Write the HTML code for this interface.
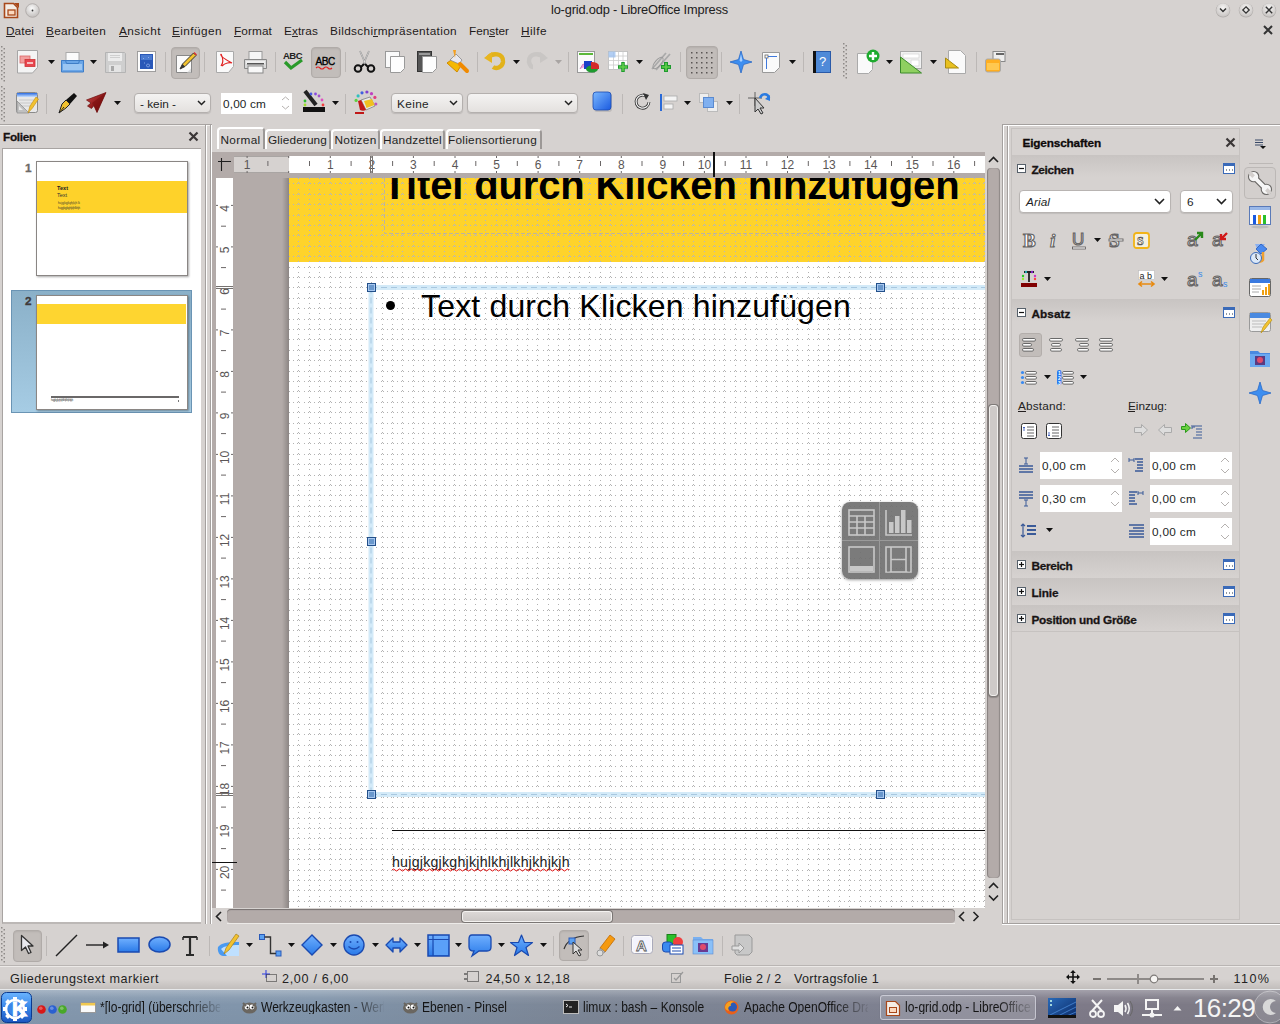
<!DOCTYPE html><html><head><meta charset="utf-8"><style>
html,body{margin:0;padding:0;width:1280px;height:1024px;overflow:hidden;background:#d6d2d0;}
body{position:relative;font-family:"Liberation Sans",sans-serif;}
.a{position:absolute;box-sizing:border-box;}
.t{position:absolute;white-space:nowrap;font-family:"Liberation Sans",sans-serif;}
svg.a{overflow:visible;}
</style></head><body>
<svg class="a" style="left:3px;top:2px;" width="16" height="17" viewBox="0 0 16 17"><path d="M1.5 1.5h9l4 4v10h-13z" fill="#f4ede6" stroke="#a8481a" stroke-width="1.6"/><path d="M11 1l5 0 0 5z" fill="#a8481a"/><rect x="5" y="8" width="7" height="5" fill="#fbd9bf" stroke="#a8481a" stroke-width="1.3"/></svg>
<svg class="a" style="left:25px;top:3px;" width="15" height="15" viewBox="0 0 15 15"><defs><radialGradient id="gc" cx="0.45" cy="0.35" r="0.7"><stop offset="0" stop-color="#fafafa"/><stop offset="1" stop-color="#bdb9b7"/></radialGradient></defs><circle cx="7.5" cy="7.5" r="6.8" fill="url(#gc)" stroke="#a9a5a3" stroke-width="0.8"/><circle cx="7.5" cy="7.5" r="0.9" fill="#333"/></svg>
<div class="t" style="left:551px;top:3.66px;font-size:12.8px;line-height:12.8px;color:#202020;letter-spacing:-0.170px;">lo-grid.odp - LibreOffice Impress</div>
<svg class="a" style="left:1215px;top:2px;" width="16" height="16" viewBox="0 0 16 16"><defs><radialGradient id="gw1223" cx="0.5" cy="0.35" r="0.7"><stop offset="0" stop-color="#f6f5f4"/><stop offset="1" stop-color="#c4c0be"/></radialGradient></defs><circle cx="8" cy="8.4" r="7.2" fill="#8e8a88" opacity="0.55"/><circle cx="8" cy="8" r="6.8" fill="url(#gw1223)"/><path d="M5 6.5l3 3 3-3" fill="none" stroke="#333" stroke-width="1.5"/></svg>
<svg class="a" style="left:1238px;top:2px;" width="16" height="16" viewBox="0 0 16 16"><defs><radialGradient id="gw1246" cx="0.5" cy="0.35" r="0.7"><stop offset="0" stop-color="#f6f5f4"/><stop offset="1" stop-color="#c4c0be"/></radialGradient></defs><circle cx="8" cy="8.4" r="7.2" fill="#8e8a88" opacity="0.55"/><circle cx="8" cy="8" r="6.8" fill="url(#gw1246)"/><path d="M8 4.8l3.2 3.2-3.2 3.2-3.2-3.2z" fill="none" stroke="#333" stroke-width="1.3"/></svg>
<svg class="a" style="left:1261px;top:2px;" width="16" height="16" viewBox="0 0 16 16"><defs><radialGradient id="gw1269" cx="0.5" cy="0.35" r="0.7"><stop offset="0" stop-color="#f6f5f4"/><stop offset="1" stop-color="#c4c0be"/></radialGradient></defs><circle cx="8" cy="8.4" r="7.2" fill="#8e8a88" opacity="0.55"/><circle cx="8" cy="8" r="6.8" fill="url(#gw1269)"/><path d="M4.8 4.8l6.4 6.4M11.2 4.8l-6.4 6.4" fill="none" stroke="#333" stroke-width="1.4"/></svg>
<div class="t" style="left:6px;top:26.01px;font-size:11.8px;line-height:11.8px;color:#1e1a1a;letter-spacing:0.091px;">Datei</div>
<div class="a" style="left:6.0px;top:36px;width:8.661633199464525px;height:1px;background:#2a2626;"></div>
<div class="t" style="left:46px;top:26.01px;font-size:11.8px;line-height:11.8px;color:#1e1a1a;letter-spacing:0.292px;">Bearbeiten</div>
<div class="a" style="left:46.0px;top:36px;width:8.274151031167623px;height:1px;background:#2a2626;"></div>
<div class="t" style="left:119px;top:26.01px;font-size:11.8px;line-height:11.8px;color:#1e1a1a;letter-spacing:0.472px;">Ansicht</div>
<div class="a" style="left:119.0px;top:36px;width:8.542807044293665px;height:1px;background:#2a2626;"></div>
<div class="t" style="left:172px;top:26.01px;font-size:11.8px;line-height:11.8px;color:#1e1a1a;letter-spacing:0.427px;">Einfügen</div>
<div class="a" style="left:172.0px;top:36px;width:8.448117539026631px;height:1px;background:#2a2626;"></div>
<div class="t" style="left:234px;top:26.01px;font-size:11.8px;line-height:11.8px;color:#1e1a1a;letter-spacing:0.105px;">Format</div>
<div class="a" style="left:234.0px;top:36px;width:7.32972844963688px;height:1px;background:#2a2626;"></div>
<div class="t" style="left:284px;top:26.01px;font-size:11.8px;line-height:11.8px;color:#1e1a1a;letter-spacing:0.093px;">Extras</div>
<div class="a" style="left:292.00211714890617px;top:36px;width:5.998588567395907px;height:1px;background:#2a2626;"></div>
<div class="t" style="left:330px;top:26.01px;font-size:11.8px;line-height:11.8px;color:#1e1a1a;letter-spacing:0.347px;">Bildschirmpräsentation</div>
<div class="a" style="left:373.2603215402296px;top:36px;width:5px;height:1px;background:#2a2626;"></div>
<div class="t" style="left:469px;top:26.01px;font-size:11.8px;line-height:11.8px;color:#1e1a1a;">Fenster</div>
<div class="a" style="left:489.33110873492865px;top:36px;width:5.899487482024999px;height:1px;background:#2a2626;"></div>
<div class="t" style="left:521px;top:26.01px;font-size:11.8px;line-height:11.8px;color:#1e1a1a;letter-spacing:0.479px;">Hilfe</div>
<div class="a" style="left:521.0px;top:36px;width:9.385865150284323px;height:1px;background:#2a2626;"></div>
<svg class="a" style="left:1262px;top:24px;" width="12" height="12" viewBox="0 0 12 12"><path d="M2 2l8 8M10 2l-8 8" stroke="#333" stroke-width="2"/></svg>
<svg class="a" style="left:1px;top:46px;" width="5" height="34" viewBox="0 0 5 34"><rect x="0" y="0" width="1.5" height="1.5" fill="#8e8a88"/><rect x="2.5" y="2" width="1.5" height="1.5" fill="#8e8a88"/><rect x="0" y="4" width="1.5" height="1.5" fill="#8e8a88"/><rect x="2.5" y="6" width="1.5" height="1.5" fill="#8e8a88"/><rect x="0" y="8" width="1.5" height="1.5" fill="#8e8a88"/><rect x="2.5" y="10" width="1.5" height="1.5" fill="#8e8a88"/><rect x="0" y="12" width="1.5" height="1.5" fill="#8e8a88"/><rect x="2.5" y="14" width="1.5" height="1.5" fill="#8e8a88"/><rect x="0" y="16" width="1.5" height="1.5" fill="#8e8a88"/><rect x="2.5" y="18" width="1.5" height="1.5" fill="#8e8a88"/><rect x="0" y="20" width="1.5" height="1.5" fill="#8e8a88"/><rect x="2.5" y="22" width="1.5" height="1.5" fill="#8e8a88"/><rect x="0" y="24" width="1.5" height="1.5" fill="#8e8a88"/><rect x="2.5" y="26" width="1.5" height="1.5" fill="#8e8a88"/><rect x="0" y="28" width="1.5" height="1.5" fill="#8e8a88"/><rect x="2.5" y="30" width="1.5" height="1.5" fill="#8e8a88"/><rect x="0" y="32" width="1.5" height="1.5" fill="#8e8a88"/><rect x="2.5" y="34" width="1.5" height="1.5" fill="#8e8a88"/></svg>
<svg class="a" style="left:1px;top:86px;" width="5" height="34" viewBox="0 0 5 34"><rect x="0" y="0" width="1.5" height="1.5" fill="#8e8a88"/><rect x="2.5" y="2" width="1.5" height="1.5" fill="#8e8a88"/><rect x="0" y="4" width="1.5" height="1.5" fill="#8e8a88"/><rect x="2.5" y="6" width="1.5" height="1.5" fill="#8e8a88"/><rect x="0" y="8" width="1.5" height="1.5" fill="#8e8a88"/><rect x="2.5" y="10" width="1.5" height="1.5" fill="#8e8a88"/><rect x="0" y="12" width="1.5" height="1.5" fill="#8e8a88"/><rect x="2.5" y="14" width="1.5" height="1.5" fill="#8e8a88"/><rect x="0" y="16" width="1.5" height="1.5" fill="#8e8a88"/><rect x="2.5" y="18" width="1.5" height="1.5" fill="#8e8a88"/><rect x="0" y="20" width="1.5" height="1.5" fill="#8e8a88"/><rect x="2.5" y="22" width="1.5" height="1.5" fill="#8e8a88"/><rect x="0" y="24" width="1.5" height="1.5" fill="#8e8a88"/><rect x="2.5" y="26" width="1.5" height="1.5" fill="#8e8a88"/><rect x="0" y="28" width="1.5" height="1.5" fill="#8e8a88"/><rect x="2.5" y="30" width="1.5" height="1.5" fill="#8e8a88"/><rect x="0" y="32" width="1.5" height="1.5" fill="#8e8a88"/><rect x="2.5" y="34" width="1.5" height="1.5" fill="#8e8a88"/></svg>
<svg class="a" style="left:843px;top:43px;" width="5" height="36" viewBox="0 0 5 36"><rect x="0" y="0" width="1.5" height="1.5" fill="#8e8a88"/><rect x="2.5" y="2" width="1.5" height="1.5" fill="#8e8a88"/><rect x="0" y="4" width="1.5" height="1.5" fill="#8e8a88"/><rect x="2.5" y="6" width="1.5" height="1.5" fill="#8e8a88"/><rect x="0" y="8" width="1.5" height="1.5" fill="#8e8a88"/><rect x="2.5" y="10" width="1.5" height="1.5" fill="#8e8a88"/><rect x="0" y="12" width="1.5" height="1.5" fill="#8e8a88"/><rect x="2.5" y="14" width="1.5" height="1.5" fill="#8e8a88"/><rect x="0" y="16" width="1.5" height="1.5" fill="#8e8a88"/><rect x="2.5" y="18" width="1.5" height="1.5" fill="#8e8a88"/><rect x="0" y="20" width="1.5" height="1.5" fill="#8e8a88"/><rect x="2.5" y="22" width="1.5" height="1.5" fill="#8e8a88"/><rect x="0" y="24" width="1.5" height="1.5" fill="#8e8a88"/><rect x="2.5" y="26" width="1.5" height="1.5" fill="#8e8a88"/><rect x="0" y="28" width="1.5" height="1.5" fill="#8e8a88"/><rect x="2.5" y="30" width="1.5" height="1.5" fill="#8e8a88"/><rect x="0" y="32" width="1.5" height="1.5" fill="#8e8a88"/><rect x="2.5" y="34" width="1.5" height="1.5" fill="#8e8a88"/></svg>
<svg class="a" style="left:17px;top:50px;" width="22" height="24" viewBox="0 0 22 24"><path d="M0.5 0.5h20v17l-5 5.5h-15z" fill="#f4f4f4" stroke="#a6a6a6"/><rect x="3" y="6" width="10" height="7" fill="#f2a0a0" stroke="#d66" stroke-width="0.8"/><rect x="8" y="9.5" width="10" height="7" fill="#e8454f" stroke="#c33" stroke-width="0.8"/><rect x="10" y="12" width="6" height="2" fill="#f7c0c0"/></svg>
<svg class="a" style="left:48px;top:60px;" width="7" height="4" viewBox="0 0 7 4"><path d="M0 0h7l-3.5 4z" fill="#111"/></svg>
<svg class="a" style="left:61px;top:52px;" width="23" height="21" viewBox="0 0 23 21"><rect x="5" y="0.5" width="13" height="11" fill="#fbfbfb" stroke="#aaa"/><path d="M0.5 8.5h22v11.5h-22z" fill="#6aa6e8" stroke="#3f7dc6"/><path d="M2 12h19v6h-19z" fill="#9cc6f2"/><path d="M0.5 8.5h4l1 3h12l1-3h4" fill="none" stroke="#3f7dc6"/></svg>
<svg class="a" style="left:90px;top:60px;" width="7" height="4" viewBox="0 0 7 4"><path d="M0 0h7l-3.5 4z" fill="#111"/></svg>
<svg class="a" style="left:105px;top:52px;" width="21" height="21" viewBox="0 0 21 21"><path d="M0.5 0.5h19l1 1v19h-20z" fill="#cfcfcf" stroke="#b4b4b4"/><rect x="3" y="1" width="14" height="8" fill="#ececec"/><path d="M5 3.5h10M5 5.5h10" stroke="#c8c8c8" stroke-width="0.8"/><rect x="4" y="13" width="12" height="7" fill="#e4e4e4"/><rect x="6" y="14" width="3" height="5" fill="#a8a8a8"/></svg>
<svg class="a" style="left:137px;top:51px;" width="19" height="21" viewBox="0 0 19 21"><rect x="0.5" y="0.5" width="18" height="20" fill="#fdfdfd"/><rect x="0.5" y="0.5" width="18" height="20" fill="none" stroke="#555" stroke-width="1" stroke-dasharray="1 1"/><rect x="3" y="3" width="13" height="15" fill="#2a58b8"/><rect x="4" y="4" width="11" height="5" fill="#4a7ad0"/><path d="M6 7l1 1M11 6l1 1M7 12h1M11 13a1.5 1.5 0 1 0 0.1 0" stroke="#9ab8f0" stroke-width="0.8" fill="none"/></svg>
<div class="a" style="left:165px;top:52px;width:1px;height:20px;background:#bcb8b6;"></div>
<div class="a" style="left:171px;top:47px;width:29px;height:32px;background:#c2bdba;border:1px solid #b0aba8;border-radius:4px;box-shadow:inset 0 1px 2px rgba(0,0,0,0.08);"></div>
<svg class="a" style="left:175px;top:52px;" width="22" height="22" viewBox="0 0 22 22"><path d="M1.5 3.5h15v17h-15z" fill="#fbfbfb" stroke="#888"/><path d="M16 20.5l-4 0 4-4z" fill="#ddd"/><path d="M5 17l2.5-5 11-11 2.5 2.5-11 11z" fill="#f2c230" stroke="#333" stroke-width="1"/><path d="M18.5 1l2.5 2.5 1-1-2.5-2.5z" fill="#d33"/><path d="M5 17l2.5-5 2.5 2.5z" fill="#333"/></svg>
<div class="a" style="left:204px;top:52px;width:1px;height:20px;background:#bcb8b6;"></div>
<svg class="a" style="left:216px;top:51px;" width="19" height="22" viewBox="0 0 19 22"><path d="M0.5 0.5h17v15l-5 6h-12z" fill="#fafafa" stroke="#aaa"/><path d="M5 3c2 4 3 8 0 12M6 15c3-3 8-4 10-3M5 3c-1 2 5 6 11 9" fill="none" stroke="#e02020" stroke-width="1.2"/></svg>
<svg class="a" style="left:244px;top:51px;" width="23" height="23" viewBox="0 0 23 23"><rect x="5" y="0.5" width="13" height="8" fill="#f6f6f6" stroke="#999"/><path d="M0.5 8.5h22v9h-22z" fill="#d9d9d9" stroke="#888"/><rect x="2" y="10" width="19" height="3" fill="#efefef"/><rect x="4" y="15" width="15" height="7" fill="#f8f8f8" stroke="#888"/><rect x="3" y="12" width="17" height="1.5" fill="#555"/></svg>
<div class="a" style="left:275px;top:52px;width:1px;height:20px;background:#bcb8b6;"></div>
<svg class="a" style="left:283px;top:50px;" width="21" height="23" viewBox="0 0 21 23"><text x="0" y="9" font-family="Liberation Sans" font-size="9.5" font-weight="bold" fill="#222" letter-spacing="-0.5">ABC</text><path d="M2 12l6 6 11-8" fill="none" stroke="#2a9a2a" stroke-width="3.2"/></svg>
<div class="a" style="left:311px;top:47px;width:30px;height:31px;background:#c2bdba;border:1px solid #b0aba8;border-radius:4px;box-shadow:inset 0 1px 2px rgba(0,0,0,0.08);"></div>
<svg class="a" style="left:315px;top:55px;" width="22" height="16" viewBox="0 0 22 16"><text x="0.5" y="10" font-family="Liberation Sans" font-size="10" fill="#000" stroke="#000" stroke-width="0.35" letter-spacing="-0.4">ABC</text><path d="M1 13q2-2 4 0t4 0 4 0 4 0" fill="none" stroke="#e02020" stroke-width="1.1"/></svg>
<div class="a" style="left:345px;top:52px;width:1px;height:20px;background:#bcb8b6;"></div>
<svg class="a" style="left:353px;top:51px;" width="23" height="22" viewBox="0 0 23 22"><path d="M7 0l6 14M16 0l-6 14" stroke="#888" stroke-width="1.6" fill="none"/><path d="M7 0l6 14M16 0l-6 14" stroke="#eee" stroke-width="0.6" fill="none"/><circle cx="5" cy="17.5" r="3.3" fill="none" stroke="#111" stroke-width="2"/><circle cx="18" cy="17.5" r="3.3" fill="none" stroke="#111" stroke-width="2"/><path d="M8 16l3-3M15 16l-3-3" stroke="#111" stroke-width="2"/></svg>
<svg class="a" style="left:385px;top:51px;" width="20" height="22" viewBox="0 0 20 22"><rect x="0.5" y="0.5" width="14" height="16" fill="#fafafa" stroke="#999"/><path d="M5.5 5.5h14v12l-4 4h-10z" fill="#fdfdfd" stroke="#999"/></svg>
<svg class="a" style="left:417px;top:51px;" width="20" height="22" viewBox="0 0 20 22"><rect x="0.5" y="0.5" width="14" height="20" fill="#555" stroke="#333"/><rect x="2" y="2" width="11" height="2" fill="#999"/><path d="M5.5 5.5h14v12l-4 4h-10z" fill="#fdfdfd" stroke="#999"/></svg>
<svg class="a" style="left:446px;top:50px;" width="23" height="24" viewBox="0 0 23 24"><path d="M1 13l7-5 8 6-5 8z" fill="#f5b800" stroke="#d18a00"/><path d="M4 10l6-6 6 6-3 4z" fill="#e8e8f0" stroke="#888" stroke-width="0.8"/><path d="M7 0h3l-1 8z" fill="#f5a020"/><path d="M14 14l7 7" stroke="#f08a00" stroke-width="4" stroke-linecap="round"/></svg>
<div class="a" style="left:477px;top:52px;width:1px;height:20px;background:#bcb8b6;"></div>
<svg class="a" style="left:484px;top:51px;" width="22" height="19" viewBox="0 0 22 19"><path d="M4 7 C8 1, 20 2, 19 11 C18 17, 12 18, 9 16" fill="none" stroke="#e2b21a" stroke-width="4.5"/><path d="M0 7l8-6 0 11z" fill="#e8b520"/></svg>
<svg class="a" style="left:513px;top:60px;" width="7" height="4" viewBox="0 0 7 4"><path d="M0 0h7l-3.5 4z" fill="#111"/></svg>
<svg class="a" style="left:526px;top:51px;" width="22" height="18" viewBox="0 0 22 18"><path d="M18 7 C14 1, 2 2, 3 11 C4 15, 6 16, 7 16" fill="none" stroke="#c9c6c4" stroke-width="4.5"/><path d="M22 7l-8-6 0 11z" fill="#c9c6c4"/></svg>
<svg class="a" style="left:555px;top:60px;" width="7" height="4" viewBox="0 0 7 4"><path d="M0 0h7l-3.5 4z" fill="#a9a5a3"/></svg>
<div class="a" style="left:568px;top:52px;width:1px;height:20px;background:#bcb8b6;"></div>
<svg class="a" style="left:577px;top:51px;" width="23" height="22" viewBox="0 0 23 22"><rect x="0.5" y="0.5" width="17" height="21" fill="#fafafa" stroke="#999"/><rect x="2" y="2" width="14" height="2" fill="#5cb83a"/><path d="M3 18l3-5 4 2" fill="#f2a0e0" stroke="#d080c0"/><rect x="7" y="10" width="8" height="8" fill="#1b3fc8"/><ellipse cx="15" cy="18" rx="6" ry="3.5" fill="#1e9a2e"/><path d="M14 11a7 4 0 0 1 8 4v3h-8z" fill="#d42a2a"/></svg>
<svg class="a" style="left:608px;top:51px;" width="22" height="22" viewBox="0 0 22 22"><g fill="#fff" stroke="#bbb" stroke-width="0.8"><rect x="0.5" y="0.5" width="19" height="18"/></g><path d="M0.5 5h19M0.5 9.5h19M0.5 14h19M5.5 0.5v18M10.5 0.5v18M15 0.5v18" stroke="#ccc" stroke-width="0.8"/><rect x="0.5" y="0.5" width="7" height="6" fill="#9fc2f0" opacity="0.8"/><path d="M15 11v10M10 16h10" stroke="#1e9a2e" stroke-width="3.5"/><path d="M15 12v8M11 16h8" stroke="#62d04a" stroke-width="1.5"/></svg>
<svg class="a" style="left:636px;top:60px;" width="7" height="4" viewBox="0 0 7 4"><path d="M0 0h7l-3.5 4z" fill="#111"/></svg>
<svg class="a" style="left:650px;top:50px;" width="23" height="23" viewBox="0 0 23 23"><path d="M2 19l14-16M6 20l14-16" stroke="#aaa" stroke-width="1.8" fill="none"/><ellipse cx="8" cy="13" rx="3" ry="7" transform="rotate(40 8 13)" fill="none" stroke="#999"/><path d="M16 12v10M11 17h10" stroke="#1e9a2e" stroke-width="4"/><path d="M16 13v8M12 17h8" stroke="#62d04a" stroke-width="1.6"/></svg>
<div class="a" style="left:680px;top:52px;width:1px;height:20px;background:#bcb8b6;"></div>
<div class="a" style="left:686px;top:46px;width:32px;height:33px;background:#c2bdba;border:1px solid #b0aba8;border-radius:4px;box-shadow:inset 0 1px 2px rgba(0,0,0,0.08);"></div>
<svg class="a" style="left:691px;top:52px;" width="23" height="23" viewBox="0 0 23 23"><rect x="0" y="0" width="1.5" height="1.5" fill="#5a5654"/><rect x="0" y="5" width="1.5" height="1.5" fill="#5a5654"/><rect x="0" y="10" width="1.5" height="1.5" fill="#5a5654"/><rect x="0" y="15" width="1.5" height="1.5" fill="#5a5654"/><rect x="0" y="20" width="1.5" height="1.5" fill="#5a5654"/><rect x="5" y="0" width="1.5" height="1.5" fill="#5a5654"/><rect x="5" y="5" width="1.5" height="1.5" fill="#5a5654"/><rect x="5" y="10" width="1.5" height="1.5" fill="#5a5654"/><rect x="5" y="15" width="1.5" height="1.5" fill="#5a5654"/><rect x="5" y="20" width="1.5" height="1.5" fill="#5a5654"/><rect x="10" y="0" width="1.5" height="1.5" fill="#5a5654"/><rect x="10" y="5" width="1.5" height="1.5" fill="#5a5654"/><rect x="10" y="10" width="1.5" height="1.5" fill="#5a5654"/><rect x="10" y="15" width="1.5" height="1.5" fill="#5a5654"/><rect x="10" y="20" width="1.5" height="1.5" fill="#5a5654"/><rect x="15" y="0" width="1.5" height="1.5" fill="#5a5654"/><rect x="15" y="5" width="1.5" height="1.5" fill="#5a5654"/><rect x="15" y="10" width="1.5" height="1.5" fill="#5a5654"/><rect x="15" y="15" width="1.5" height="1.5" fill="#5a5654"/><rect x="15" y="20" width="1.5" height="1.5" fill="#5a5654"/><rect x="20" y="0" width="1.5" height="1.5" fill="#5a5654"/><rect x="20" y="5" width="1.5" height="1.5" fill="#5a5654"/><rect x="20" y="10" width="1.5" height="1.5" fill="#5a5654"/><rect x="20" y="15" width="1.5" height="1.5" fill="#5a5654"/><rect x="20" y="20" width="1.5" height="1.5" fill="#5a5654"/></svg>
<div class="a" style="left:721px;top:52px;width:1px;height:20px;background:#bcb8b6;"></div>
<svg class="a" style="left:730px;top:51px;" width="22" height="22" viewBox="0 0 22 22"><path d="M11 0 L13.5 8.5 L22 11 L13.5 13.5 L11 22 L8.5 13.5 L0 11 L8.5 8.5 Z" fill="#3d8ef0" stroke="#2a6ac8" stroke-width="0.8"/><path d="M11 3 L12.5 9.5 L11 11 L9.5 9.5Z" fill="#a8d0ff"/></svg>
<svg class="a" style="left:762px;top:52px;" width="19" height="21" viewBox="0 0 19 21"><path d="M0.5 0.5h17v15l-5 5h-12z" fill="#fafafa" stroke="#999"/><rect x="3" y="3" width="3" height="3" fill="none" stroke="#666" stroke-width="0.8"/><path d="M6 4.5h9M4.5 6v11" stroke="#2a6ad8" stroke-width="0.9"/></svg>
<svg class="a" style="left:789px;top:60px;" width="7" height="4" viewBox="0 0 7 4"><path d="M0 0h7l-3.5 4z" fill="#111"/></svg>
<div class="a" style="left:803px;top:52px;width:1px;height:20px;background:#bcb8b6;"></div>
<svg class="a" style="left:813px;top:51px;" width="18" height="22" viewBox="0 0 18 22"><rect x="0.5" y="0.5" width="17" height="21" fill="#4f8ad8" stroke="#2a5aa8"/><rect x="0" y="0" width="3" height="22" fill="#111"/><text x="6" y="15" font-family="Liberation Sans" font-size="13" fill="#fff">?</text></svg>
<svg class="a" style="left:857px;top:49px;" width="23" height="25" viewBox="0 0 23 25"><path d="M0.5 4.5h15v16l-4 4h-11z" fill="#fafafa" stroke="#aaa"/><circle cx="16" cy="7" r="6.5" fill="#1eaa2e"/><path d="M16 3v8M12 7h8" stroke="#fff" stroke-width="2.4"/></svg>
<svg class="a" style="left:886px;top:60px;" width="7" height="4" viewBox="0 0 7 4"><path d="M0 0h7l-3.5 4z" fill="#111"/></svg>
<svg class="a" style="left:900px;top:51px;" width="23" height="22" viewBox="0 0 23 22"><rect x="0.5" y="0.5" width="21" height="17" fill="#f2f2f2" stroke="#aaa"/><rect x="3" y="3" width="16" height="4" fill="#fff" stroke="#ccc" stroke-width="0.6"/><rect x="11" y="9" width="8" height="6" fill="#fff" stroke="#ccc" stroke-width="0.6"/><path d="M0.5 6l21 16h-21z" fill="#8fd060" stroke="#3a8a2a"/></svg>
<svg class="a" style="left:930px;top:60px;" width="7" height="4" viewBox="0 0 7 4"><path d="M0 0h7l-3.5 4z" fill="#111"/></svg>
<svg class="a" style="left:945px;top:50px;" width="21" height="24" viewBox="0 0 21 24"><path d="M3.5 0.5h12l5 5v18h-17z" fill="#fafafa" stroke="#aaa"/><path d="M0.5 8l13 10h-13z" fill="#e8c020" stroke="#a88a10"/></svg>
<div class="a" style="left:976px;top:52px;width:1px;height:20px;background:#bcb8b6;"></div>
<svg class="a" style="left:985px;top:51px;" width="21" height="22" viewBox="0 0 21 22"><rect x="8" y="0.5" width="12" height="10" fill="#eee" stroke="#888"/><rect x="11" y="2" width="8" height="2" fill="#666"/><rect x="0.5" y="8" width="15" height="13" rx="2" fill="#ffae20" stroke="#aaa"/><rect x="2" y="12" width="12" height="7" fill="#ffc850"/></svg>
<svg class="a" style="left:16px;top:92px;" width="23" height="23" viewBox="0 0 23 23"><defs><linearGradient id="edb" x1="0" y1="0" x2="0" y2="1"><stop offset="0" stop-color="#2a6ae0"/><stop offset="1" stop-color="#c8e0ff"/></linearGradient></defs><rect x="0.5" y="0.5" width="21" height="20" rx="2" fill="#e8e8e8" stroke="#8a8a8a"/><rect x="1" y="1" width="20" height="4" fill="url(#edb)"/><path d="M3 8h15M3 11h15M3 14h12" stroke="#c8c8c8" stroke-width="1.2"/><path d="M1 9l12 12h-12z" fill="#c0c0c0" stroke="#8a8a8a" stroke-width="0.7"/><path d="M3 14l4 4h-4z" fill="#e8e8e8"/><path d="M12 21l2-7 6-9 2.5 2-6 9z" fill="#f2c230" stroke="#c08a10" stroke-width="0.6"/></svg>
<div class="a" style="left:46px;top:94px;width:1px;height:20px;background:#bcb8b6;"></div>
<svg class="a" style="left:56px;top:92px;" width="21" height="22" viewBox="0 0 21 22"><path d="M10 8 L18 1 L21 4 L14 12 z" fill="#111"/><path d="M3 21 L6 12 L10 8 L14 12 L10 16 z" fill="#f0c030" stroke="#222" stroke-width="1"/><path d="M3 21l5-6" stroke="#222"/></svg>
<svg class="a" style="left:85px;top:92px;" width="22" height="22" viewBox="0 0 22 22"><defs><linearGradient id="rar" x1="0" y1="0" x2="1" y2="1"><stop offset="0" stop-color="#c84848"/><stop offset="0.6" stop-color="#8a1414"/><stop offset="1" stop-color="#5a0a0a"/></linearGradient></defs><path d="M21 0.5 L1.5 8 L6 11 L2.5 14 L6.5 16.5 L9 13.5 L12 20.5 Z" fill="url(#rar)" stroke="#6a0c0c" stroke-width="0.7" stroke-linejoin="round"/><path d="M21 0.5 L7 11 L12 20.5Z" fill="#7a1010" opacity="0.6"/></svg>
<svg class="a" style="left:114px;top:101px;" width="7" height="4" viewBox="0 0 7 4"><path d="M0 0h7l-3.5 4z" fill="#111"/></svg>
<div class="a" style="left:134px;top:93px;width:77px;height:20px;background:linear-gradient(#f4f3f2,#e4e1df);border:1px solid #b4b0ae;border-radius:4px;box-shadow:0 1px 1px rgba(0,0,0,0.12);"></div>
<svg class="a" style="left:197px;top:100px;" width="9" height="6" viewBox="0 0 9 6"><path d="M1 1l3.5 3.5 3.5-3.5" fill="none" stroke="#222" stroke-width="1.5"/></svg>
<div class="t" style="left:140px;top:98.51px;font-size:11.8px;line-height:11.8px;color:#231f1f;">- kein -</div>
<div class="a" style="left:221px;top:93px;width:71px;height:21px;background:#fff;"></div>
<div class="t" style="left:223px;top:99.01px;font-size:11.8px;line-height:11.8px;color:#231f1f;letter-spacing:0.147px;">0,00 cm</div>
<svg class="a" style="left:281px;top:96px;" width="9" height="14" viewBox="0 0 9 14"><path d="M1 4l3.5-3 3.5 3M1 10l3.5 3 3.5-3" fill="none" stroke="#b5b1af" stroke-width="1"/></svg>
<svg class="a" style="left:303px;top:91px;" width="23" height="23" viewBox="0 0 23 23"><rect x="0" y="16" width="22" height="5" fill="#111"/><path d="M2 0l11 14" stroke="#222" stroke-width="4"/><circle cx="8" cy="3" r="1.4" fill="#4a5ae0"/><circle cx="12.5" cy="3" r="1.4" fill="#8a4ae0"/><circle cx="16" cy="5" r="1.4" fill="#a050d0"/><circle cx="19" cy="9" r="1.4" fill="#e050c0"/><circle cx="20" cy="14" r="1.4" fill="#f04040"/><circle cx="2" cy="10" r="1.4" fill="#30c030"/><circle cx="2" cy="14" r="1.4" fill="#a0e030"/></svg>
<svg class="a" style="left:332px;top:101px;" width="7" height="4" viewBox="0 0 7 4"><path d="M0 0h7l-3.5 4z" fill="#111"/></svg>
<div class="a" style="left:345px;top:94px;width:1px;height:20px;background:#bcb8b6;"></div>
<svg class="a" style="left:354px;top:91px;" width="24" height="24" viewBox="0 0 24 24"><circle cx="2.1" cy="9.4" r="1.6" fill="#60d040"/><circle cx="4.1" cy="4.9" r="1.6" fill="#30c0c0"/><circle cx="8.0" cy="1.8" r="1.6" fill="#4060e0"/><circle cx="12.9" cy="1.0" r="1.6" fill="#8040d0"/><circle cx="17.5" cy="2.7" r="1.6" fill="#c040c0"/><circle cx="20.9" cy="6.4" r="1.6" fill="#e04080"/><circle cx="21.8" cy="13.0" r="1.6" fill="#c050c0"/><path d="M7 9l9-3 5 9-9 4z" fill="#e8e8e8" stroke="#8a8a8a" stroke-width="0.9"/><path d="M10 10l8-2 2.5 6-8 3z" fill="#f0c020"/><path d="M7 9l5 10c-2 1-4 1-6 0l-2-9z" fill="#c01818"/><path d="M1 22h9" stroke="#c01818" stroke-width="2"/></svg>
<div class="a" style="left:391px;top:93px;width:72px;height:20px;background:linear-gradient(#f4f3f2,#e4e1df);border:1px solid #b4b0ae;border-radius:4px;box-shadow:0 1px 1px rgba(0,0,0,0.12);"></div>
<svg class="a" style="left:449px;top:100px;" width="9" height="6" viewBox="0 0 9 6"><path d="M1 1l3.5 3.5 3.5-3.5" fill="none" stroke="#222" stroke-width="1.5"/></svg>
<div class="t" style="left:397px;top:98.51px;font-size:11.8px;line-height:11.8px;color:#231f1f;letter-spacing:0.364px;">Keine</div>
<div class="a" style="left:467px;top:93px;width:111px;height:20px;background:linear-gradient(#f4f3f2,#e4e1df);border:1px solid #b4b0ae;border-radius:4px;box-shadow:0 1px 1px rgba(0,0,0,0.12);"></div>
<svg class="a" style="left:564px;top:100px;" width="9" height="6" viewBox="0 0 9 6"><path d="M1 1l3.5 3.5 3.5-3.5" fill="none" stroke="#222" stroke-width="1.5"/></svg>
<svg class="a" style="left:593px;top:92px;" width="20" height="21" viewBox="0 0 20 21"><defs><linearGradient id="bsq" x1="0" y1="0" x2="1" y2="1"><stop offset="0" stop-color="#7ab8ff"/><stop offset="1" stop-color="#1a5ae0"/></linearGradient></defs><rect x="1" y="1" width="18" height="19" rx="3" fill="#888" opacity="0.3"/><rect x="0" y="0" width="18" height="18" rx="3" fill="url(#bsq)" stroke="#1a4ab0" stroke-width="0.8"/></svg>
<div class="a" style="left:622px;top:94px;width:1px;height:20px;background:#bcb8b6;"></div>
<svg class="a" style="left:634px;top:93px;" width="17" height="17" viewBox="0 0 17 17"><path d="M13 4 A6.5 6.5 0 1 0 15 9" fill="none" stroke="#333" stroke-width="2.8"/><path d="M13 4 A6.5 6.5 0 1 0 15 9" fill="none" stroke="#f6f6f6" stroke-width="1.2"/><path d="M9 0l6 2-3 5z" fill="#333"/></svg>
<svg class="a" style="left:660px;top:94px;" width="18" height="17" viewBox="0 0 18 17"><rect x="0" y="0" width="2" height="17" fill="#2a6ad8"/><rect x="4" y="2" width="13" height="5" fill="#f4f4f4" stroke="#aaa" stroke-width="0.8"/><rect x="4" y="10" width="9" height="5" fill="#f4f4f4" stroke="#aaa" stroke-width="0.8"/></svg>
<svg class="a" style="left:684px;top:101px;" width="7" height="4" viewBox="0 0 7 4"><path d="M0 0h7l-3.5 4z" fill="#111"/></svg>
<svg class="a" style="left:699px;top:93px;" width="20" height="19" viewBox="0 0 20 19"><rect x="0.5" y="0.5" width="9" height="9" fill="#eee" stroke="#bbb"/><rect x="8.5" y="8.5" width="10" height="10" fill="#eee" stroke="#bbb"/><rect x="4.5" y="4.5" width="10" height="10" fill="#80b0f0" stroke="#5a8ad0"/></svg>
<svg class="a" style="left:726px;top:101px;" width="7" height="4" viewBox="0 0 7 4"><path d="M0 0h7l-3.5 4z" fill="#111"/></svg>
<div class="a" style="left:739px;top:94px;width:1px;height:20px;background:#bcb8b6;"></div>
<svg class="a" style="left:748px;top:92px;" width="23" height="23" viewBox="0 0 23 23"><path d="M0 6h14M7 0v14" stroke="#444" stroke-width="0.8"/><path d="M7 6l0 14 3-3 3 5 2-1-3-5 4 0z" fill="#ccc" stroke="#333" stroke-width="1"/><path d="M12 6c2-5 8-5 9 0" fill="none" stroke="#2a7ae0" stroke-width="2.5"/><path d="M22 3l0 6-5-2z" fill="#2a7ae0"/></svg>
<div class="a" style="left:0px;top:124px;width:212px;height:1px;background:#a8a4a2;"></div>
<div class="a" style="left:0px;top:125px;width:212px;height:1px;background:#f2f0ee;"></div>
<div class="t" style="left:3px;top:131.51px;font-size:11.8px;line-height:11.8px;color:#161212;font-weight:bold;letter-spacing:-0.290px;-webkit-text-stroke:0.3px #161212;">Folien</div>
<svg class="a" style="left:188px;top:131px;" width="11" height="11" viewBox="0 0 11 11"><path d="M1.5 1.5l8 8M9.5 1.5l-8 8" stroke="#3a3636" stroke-width="2.2"/></svg>
<div class="a" style="left:2px;top:148px;width:199px;height:776px;border-top:1px solid #a8a4a2;border-left:1px solid #a8a4a2;background:#fff;border-bottom:2px solid #bcb8b6;"></div>
<div class="a" style="left:205px;top:124px;width:1px;height:800px;background:#a4a09e;"></div>
<div class="a" style="left:206px;top:125px;width:1px;height:799px;background:#fff;"></div>
<div class="a" style="left:210px;top:124px;width:1px;height:800px;background:#a4a09e;"></div>
<div class="a" style="left:211px;top:125px;width:1px;height:799px;background:#fff;"></div>
<div class="t" style="left:25px;top:162.51px;font-size:11.8px;line-height:11.8px;color:#6e6a68;font-weight:bold;-webkit-text-stroke:0.3px #6e6a68;">1</div>
<div class="a" style="left:36px;top:161px;width:152px;height:115px;background:#fff;border:1px solid #8a8684;box-shadow:1px 1px 2px rgba(0,0,0,0.35);"></div>
<div class="a" style="left:37px;top:181px;width:150px;height:32px;background:#fed22a;"></div>
<div class="t" style="left:57px;top:186.34px;font-size:5.5px;line-height:5.5px;color:#222;font-weight:bold;letter-spacing:0.025px;">Text</div>
<div class="t" style="left:57px;top:193.34px;font-size:5.5px;line-height:5.5px;color:#333;letter-spacing:-0.022px;">Text</div>
<div class="t" style="left:58px;top:201.63px;font-size:2.8px;line-height:2.8px;color:#333;letter-spacing:0.055px;">hujgjkgjkghjkjh lk</div>
<div class="t" style="left:58px;top:206.63px;font-size:2.8px;line-height:2.8px;color:#333;letter-spacing:-0.099px;">hujgjkgjkghjkjhlkhjh</div>
<div class="a" style="left:11px;top:290px;width:181px;height:123px;background:linear-gradient(#8ab0c8,#a6cce4);border:1px solid #6a94b4;"></div>
<div class="t" style="left:25px;top:295.51px;font-size:11.8px;line-height:11.8px;color:#3e3a3a;font-weight:bold;-webkit-text-stroke:0.3px #3e3a3a;">2</div>
<div class="a" style="left:36px;top:295px;width:152px;height:115px;background:#fff;border:1px solid #8a8684;box-shadow:1px 1px 2px rgba(0,0,0,0.35);"></div>
<div class="a" style="left:37px;top:304px;width:149px;height:20px;background:#fed530;"></div>
<div class="a" style="left:51px;top:396px;width:128px;height:2px;background:#6a6868;"></div>
<div class="t" style="left:51px;top:399.80px;font-size:2.6px;line-height:2.6px;color:#444;letter-spacing:-0.323px;">hujgjkgjkghjkjhlkhjlkhjkhjkjh</div>
<div class="a" style="left:178px;top:400px;width:1px;height:2px;background:#777;"></div>
<div class="a" style="left:217px;top:127px;width:48px;height:22px;border:1px solid #c9c5c3;border-top:2px solid #fff;border-left:2px solid #fff;border-right:2px solid #9c9896;border-bottom:none;border-radius:4px 4px 0 0;background:#d9d5d3;"></div>
<div class="t" style="left:220.5px;top:134.51px;font-size:11.8px;line-height:11.8px;color:#231f1f;letter-spacing:0.329px;">Normal</div>
<div class="a" style="left:265px;top:129px;width:66px;height:20px;border:1px solid #c9c5c3;border-top:2px solid #fff;border-left:2px solid #fff;border-right:2px solid #9c9896;border-bottom:none;border-radius:4px 4px 0 0;background:#d9d5d3;"></div>
<div class="t" style="left:268px;top:135.01px;font-size:11.8px;line-height:11.8px;color:#231f1f;letter-spacing:0.127px;">Gliederung</div>
<div class="a" style="left:331px;top:129px;width:49px;height:20px;border:1px solid #c9c5c3;border-top:2px solid #fff;border-left:2px solid #fff;border-right:2px solid #9c9896;border-bottom:none;border-radius:4px 4px 0 0;background:#d9d5d3;"></div>
<div class="t" style="left:334.5px;top:135.01px;font-size:11.8px;line-height:11.8px;color:#231f1f;letter-spacing:0.284px;">Notizen</div>
<div class="a" style="left:380px;top:129px;width:65px;height:20px;border:1px solid #c9c5c3;border-top:2px solid #fff;border-left:2px solid #fff;border-right:2px solid #9c9896;border-bottom:none;border-radius:4px 4px 0 0;background:#d9d5d3;"></div>
<div class="t" style="left:383px;top:135.01px;font-size:11.8px;line-height:11.8px;color:#231f1f;letter-spacing:0.259px;">Handzettel</div>
<div class="a" style="left:446px;top:129px;width:96px;height:20px;border:1px solid #c9c5c3;border-top:2px solid #fff;border-left:2px solid #fff;border-right:2px solid #9c9896;border-bottom:none;border-radius:4px 4px 0 0;background:#d9d5d3;"></div>
<div class="t" style="left:448px;top:135.01px;font-size:11.8px;line-height:11.8px;color:#231f1f;letter-spacing:0.274px;">Foliensortierung</div>
<div class="a" style="left:212px;top:152px;width:773px;height:757px;background:#b3aba9;"></div>
<svg class="a" style="left:218px;top:158px;" width="14" height="13" viewBox="0 0 14 13"><path d="M3.5 0v13M0 3.5h13" stroke="#1e1e1e" stroke-width="1.1"/></svg>
<div class="a" style="left:234px;top:156px;width:56px;height:17px;background:#d6d2d0;border-top:1px solid #a9a5a3;border-bottom:1px solid #a9a5a3;"></div>
<div class="a" style="left:289px;top:156px;width:696px;height:17px;background:#fff;"></div>
<svg class="a" style="left:212px;top:156px;overflow:hidden;" width="774" height="17" viewBox="0 0 774 17"><text x="35.1" y="12.5" font-family="Liberation Sans" font-size="12" fill="#5a5656" text-anchor="middle">1</text><path d="M35.1 0v2M35.1 15v2" stroke="#6a6666" stroke-width="1"/><path d="M55.9 5v5" stroke="#6a6666" stroke-width="1"/><path d="M76.7 0v2M76.7 15v2" stroke="#6a6666" stroke-width="1"/><path d="M97.5 5v5" stroke="#6a6666" stroke-width="1"/><text x="118.3" y="12.5" font-family="Liberation Sans" font-size="12" fill="#5a5656" text-anchor="middle">1</text><path d="M118.3 0v2M118.3 15v2" stroke="#6a6666" stroke-width="1"/><path d="M139.1 5v5" stroke="#6a6666" stroke-width="1"/><text x="159.8" y="12.5" font-family="Liberation Sans" font-size="12" fill="#5a5656" text-anchor="middle">2</text><path d="M159.8 0v2M159.8 15v2" stroke="#6a6666" stroke-width="1"/><path d="M180.6 5v5" stroke="#6a6666" stroke-width="1"/><text x="201.4" y="12.5" font-family="Liberation Sans" font-size="12" fill="#5a5656" text-anchor="middle">3</text><path d="M201.4 0v2M201.4 15v2" stroke="#6a6666" stroke-width="1"/><path d="M222.2 5v5" stroke="#6a6666" stroke-width="1"/><text x="243.0" y="12.5" font-family="Liberation Sans" font-size="12" fill="#5a5656" text-anchor="middle">4</text><path d="M243.0 0v2M243.0 15v2" stroke="#6a6666" stroke-width="1"/><path d="M263.8 5v5" stroke="#6a6666" stroke-width="1"/><text x="284.5" y="12.5" font-family="Liberation Sans" font-size="12" fill="#5a5656" text-anchor="middle">5</text><path d="M284.5 0v2M284.5 15v2" stroke="#6a6666" stroke-width="1"/><path d="M305.3 5v5" stroke="#6a6666" stroke-width="1"/><text x="326.1" y="12.5" font-family="Liberation Sans" font-size="12" fill="#5a5656" text-anchor="middle">6</text><path d="M326.1 0v2M326.1 15v2" stroke="#6a6666" stroke-width="1"/><path d="M346.9 5v5" stroke="#6a6666" stroke-width="1"/><text x="367.7" y="12.5" font-family="Liberation Sans" font-size="12" fill="#5a5656" text-anchor="middle">7</text><path d="M367.7 0v2M367.7 15v2" stroke="#6a6666" stroke-width="1"/><path d="M388.5 5v5" stroke="#6a6666" stroke-width="1"/><text x="409.3" y="12.5" font-family="Liberation Sans" font-size="12" fill="#5a5656" text-anchor="middle">8</text><path d="M409.3 0v2M409.3 15v2" stroke="#6a6666" stroke-width="1"/><path d="M430.0 5v5" stroke="#6a6666" stroke-width="1"/><text x="450.8" y="12.5" font-family="Liberation Sans" font-size="12" fill="#5a5656" text-anchor="middle">9</text><path d="M450.8 0v2M450.8 15v2" stroke="#6a6666" stroke-width="1"/><path d="M471.6 5v5" stroke="#6a6666" stroke-width="1"/><text x="492.4" y="12.5" font-family="Liberation Sans" font-size="12" fill="#5a5656" text-anchor="middle">10</text><path d="M492.4 0v2M492.4 15v2" stroke="#6a6666" stroke-width="1"/><path d="M513.2 5v5" stroke="#6a6666" stroke-width="1"/><text x="534.0" y="12.5" font-family="Liberation Sans" font-size="12" fill="#5a5656" text-anchor="middle">11</text><path d="M534.0 0v2M534.0 15v2" stroke="#6a6666" stroke-width="1"/><path d="M554.8 5v5" stroke="#6a6666" stroke-width="1"/><text x="575.5" y="12.5" font-family="Liberation Sans" font-size="12" fill="#5a5656" text-anchor="middle">12</text><path d="M575.5 0v2M575.5 15v2" stroke="#6a6666" stroke-width="1"/><path d="M596.3 5v5" stroke="#6a6666" stroke-width="1"/><text x="617.1" y="12.5" font-family="Liberation Sans" font-size="12" fill="#5a5656" text-anchor="middle">13</text><path d="M617.1 0v2M617.1 15v2" stroke="#6a6666" stroke-width="1"/><path d="M637.9 5v5" stroke="#6a6666" stroke-width="1"/><text x="658.7" y="12.5" font-family="Liberation Sans" font-size="12" fill="#5a5656" text-anchor="middle">14</text><path d="M658.7 0v2M658.7 15v2" stroke="#6a6666" stroke-width="1"/><path d="M679.5 5v5" stroke="#6a6666" stroke-width="1"/><text x="700.2" y="12.5" font-family="Liberation Sans" font-size="12" fill="#5a5656" text-anchor="middle">15</text><path d="M700.2 0v2M700.2 15v2" stroke="#6a6666" stroke-width="1"/><path d="M721.0 5v5" stroke="#6a6666" stroke-width="1"/><text x="741.8" y="12.5" font-family="Liberation Sans" font-size="12" fill="#5a5656" text-anchor="middle">16</text><path d="M741.8 0v2M741.8 15v2" stroke="#6a6666" stroke-width="1"/><path d="M762.6 5v5" stroke="#6a6666" stroke-width="1"/></svg>
<div class="a" style="left:370px;top:156px;width:1px;height:17px;background:#767270;"></div>
<div class="a" style="left:372px;top:156px;width:1px;height:17px;background:#767270;"></div>
<div class="a" style="left:713px;top:152px;width:2px;height:25px;background:#111;"></div>
<div class="a" style="left:216px;top:178px;width:17px;height:731px;background:#fff;"></div>
<svg class="a" style="left:216px;top:178px;overflow:hidden;" width="17" height="731" viewBox="0 0 17 731"><text x="0" y="0" transform="translate(12.5 30.4) rotate(-90)" font-family="Liberation Sans" font-size="12" fill="#5a5656" text-anchor="middle">4</text><path d="M0 27.4h2M15 27.4h2" stroke="#6a6666"/><path d="M5 48.2h5" stroke="#6a6666"/><text x="0" y="0" transform="translate(12.5 71.9) rotate(-90)" font-family="Liberation Sans" font-size="12" fill="#5a5656" text-anchor="middle">5</text><path d="M0 68.9h2M15 68.9h2" stroke="#6a6666"/><path d="M5 89.6h5" stroke="#6a6666"/><text x="0" y="0" transform="translate(12.5 113.4) rotate(-90)" font-family="Liberation Sans" font-size="12" fill="#5a5656" text-anchor="middle">6</text><path d="M0 110.4h2M15 110.4h2" stroke="#6a6666"/><path d="M5 131.1h5" stroke="#6a6666"/><text x="0" y="0" transform="translate(12.5 154.9) rotate(-90)" font-family="Liberation Sans" font-size="12" fill="#5a5656" text-anchor="middle">7</text><path d="M0 151.9h2M15 151.9h2" stroke="#6a6666"/><path d="M5 172.6h5" stroke="#6a6666"/><text x="0" y="0" transform="translate(12.5 196.4) rotate(-90)" font-family="Liberation Sans" font-size="12" fill="#5a5656" text-anchor="middle">8</text><path d="M0 193.4h2M15 193.4h2" stroke="#6a6666"/><path d="M5 214.1h5" stroke="#6a6666"/><text x="0" y="0" transform="translate(12.5 237.9) rotate(-90)" font-family="Liberation Sans" font-size="12" fill="#5a5656" text-anchor="middle">9</text><path d="M0 234.9h2M15 234.9h2" stroke="#6a6666"/><path d="M5 255.6h5" stroke="#6a6666"/><text x="0" y="0" transform="translate(12.5 279.4) rotate(-90)" font-family="Liberation Sans" font-size="12" fill="#5a5656" text-anchor="middle">10</text><path d="M0 276.4h2M15 276.4h2" stroke="#6a6666"/><path d="M5 297.1h5" stroke="#6a6666"/><text x="0" y="0" transform="translate(12.5 320.9) rotate(-90)" font-family="Liberation Sans" font-size="12" fill="#5a5656" text-anchor="middle">11</text><path d="M0 317.9h2M15 317.9h2" stroke="#6a6666"/><path d="M5 338.6h5" stroke="#6a6666"/><text x="0" y="0" transform="translate(12.5 362.4) rotate(-90)" font-family="Liberation Sans" font-size="12" fill="#5a5656" text-anchor="middle">12</text><path d="M0 359.4h2M15 359.4h2" stroke="#6a6666"/><path d="M5 380.1h5" stroke="#6a6666"/><text x="0" y="0" transform="translate(12.5 403.9) rotate(-90)" font-family="Liberation Sans" font-size="12" fill="#5a5656" text-anchor="middle">13</text><path d="M0 400.9h2M15 400.9h2" stroke="#6a6666"/><path d="M5 421.6h5" stroke="#6a6666"/><text x="0" y="0" transform="translate(12.5 445.4) rotate(-90)" font-family="Liberation Sans" font-size="12" fill="#5a5656" text-anchor="middle">14</text><path d="M0 442.4h2M15 442.4h2" stroke="#6a6666"/><path d="M5 463.1h5" stroke="#6a6666"/><text x="0" y="0" transform="translate(12.5 486.9) rotate(-90)" font-family="Liberation Sans" font-size="12" fill="#5a5656" text-anchor="middle">15</text><path d="M0 483.9h2M15 483.9h2" stroke="#6a6666"/><path d="M5 504.6h5" stroke="#6a6666"/><text x="0" y="0" transform="translate(12.5 528.4) rotate(-90)" font-family="Liberation Sans" font-size="12" fill="#5a5656" text-anchor="middle">16</text><path d="M0 525.4h2M15 525.4h2" stroke="#6a6666"/><path d="M5 546.1h5" stroke="#6a6666"/><text x="0" y="0" transform="translate(12.5 569.9) rotate(-90)" font-family="Liberation Sans" font-size="12" fill="#5a5656" text-anchor="middle">17</text><path d="M0 566.9h2M15 566.9h2" stroke="#6a6666"/><path d="M5 587.6h5" stroke="#6a6666"/><text x="0" y="0" transform="translate(12.5 611.4) rotate(-90)" font-family="Liberation Sans" font-size="12" fill="#5a5656" text-anchor="middle">18</text><path d="M0 608.4h2M15 608.4h2" stroke="#6a6666"/><path d="M5 629.1h5" stroke="#6a6666"/><text x="0" y="0" transform="translate(12.5 652.9) rotate(-90)" font-family="Liberation Sans" font-size="12" fill="#5a5656" text-anchor="middle">19</text><path d="M0 649.9h2M15 649.9h2" stroke="#6a6666"/><path d="M5 670.6h5" stroke="#6a6666"/><text x="0" y="0" transform="translate(12.5 694.4) rotate(-90)" font-family="Liberation Sans" font-size="12" fill="#5a5656" text-anchor="middle">20</text><path d="M0 691.4h2M15 691.4h2" stroke="#6a6666"/><path d="M5 712.1h5" stroke="#6a6666"/></svg>
<div class="a" style="left:216px;top:286px;width:17px;height:1px;background:#767270;"></div>
<div class="a" style="left:216px;top:288px;width:17px;height:1px;background:#767270;"></div>
<div class="a" style="left:216px;top:793px;width:17px;height:1px;background:#767270;"></div>
<div class="a" style="left:216px;top:795px;width:17px;height:1px;background:#767270;"></div>
<div class="a" style="left:212px;top:862px;width:25px;height:1px;background:#111;"></div>
<div class="a" style="left:282px;top:178px;width:7px;height:731px;background:linear-gradient(to right, rgba(0,0,0,0), rgba(0,0,0,0.22));"></div>
<div style="position:absolute;left:0;top:0;width:1280px;height:1024px;clip-path:inset(178px 295px 116px 289px);">
<div class="a" style="left:289px;top:178px;width:697px;height:731px;background:#fff;"></div>
<div class="a" style="left:289px;top:178px;width:697px;height:84px;background:#fed32b;"></div>
<svg class="a" style="left:289px;top:178px;overflow:hidden;" width="697" height="731" viewBox="0 0 697 731"><defs><marker id="gmy" markerUnits="userSpaceOnUse" markerWidth="14" markerHeight="14" refX="7" refY="7" style="overflow:visible"><path d="M7 6h1v1h-1zM6 7h1v1h-1zM8 7h1v1h-1z" fill="#b0b3c8" shape-rendering="crispEdges"/></marker><marker id="gmw" markerUnits="userSpaceOnUse" markerWidth="14" markerHeight="14" refX="7" refY="7" style="overflow:visible"><path d="M7 6h1v1h-1zM6 7h1v1h-1zM8 7h1v1h-1z" fill="#b2b2b2" shape-rendering="crispEdges"/></marker><marker id="gdy" markerUnits="userSpaceOnUse" markerWidth="14" markerHeight="14" refX="7" refY="7" style="overflow:visible"><path d="M7 7h1v1h-1z" fill="#b0b3c8" shape-rendering="crispEdges"/></marker><marker id="gdw" markerUnits="userSpaceOnUse" markerWidth="14" markerHeight="14" refX="7" refY="7" style="overflow:visible"><path d="M7 7h1v1h-1z" fill="#b2b2b2" shape-rendering="crispEdges"/></marker></defs><path d="M-1 5l10 0l11 0l10 0l11 0l10 0l10 0l11 0l10 0l11 0l10 0l10 0l11 0l10 0l11 0l10 0l10 0l11 0l10 0l10 0l11 0l10 0l11 0l10 0l10 0l11 0l10 0l11 0l10 0l10 0l11 0l10 0l11 0l10 0l10 0l11 0l10 0l11 0l10 0l10 0l11 0l10 0l10 0l11 0l10 0l11 0l10 0l10 0l11 0l10 0l11 0l10 0l10 0l11 0l10 0l11 0l10 0l10 0l11 0l10 0l11 0l10 0l10 0l11 0l10 0l11 0l10 0l10 0M-1 16l10 0l11 0l10 0l11 0l10 0l10 0l11 0l10 0l11 0l10 0l10 0l11 0l10 0l11 0l10 0l10 0l11 0l10 0l10 0l11 0l10 0l11 0l10 0l10 0l11 0l10 0l11 0l10 0l10 0l11 0l10 0l11 0l10 0l10 0l11 0l10 0l11 0l10 0l10 0l11 0l10 0l10 0l11 0l10 0l11 0l10 0l10 0l11 0l10 0l11 0l10 0l10 0l11 0l10 0l11 0l10 0l10 0l11 0l10 0l11 0l10 0l10 0l11 0l10 0l11 0l10 0l10 0M-1 26l10 0l11 0l10 0l11 0l10 0l10 0l11 0l10 0l11 0l10 0l10 0l11 0l10 0l11 0l10 0l10 0l11 0l10 0l10 0l11 0l10 0l11 0l10 0l10 0l11 0l10 0l11 0l10 0l10 0l11 0l10 0l11 0l10 0l10 0l11 0l10 0l11 0l10 0l10 0l11 0l10 0l10 0l11 0l10 0l11 0l10 0l10 0l11 0l10 0l11 0l10 0l10 0l11 0l10 0l11 0l10 0l10 0l11 0l10 0l11 0l10 0l10 0l11 0l10 0l11 0l10 0l10 0M-1 37l10 0l11 0l10 0l11 0l10 0l10 0l11 0l10 0l11 0l10 0l10 0l11 0l10 0l11 0l10 0l10 0l11 0l10 0l10 0l11 0l10 0l11 0l10 0l10 0l11 0l10 0l11 0l10 0l10 0l11 0l10 0l11 0l10 0l10 0l11 0l10 0l11 0l10 0l10 0l11 0l10 0l10 0l11 0l10 0l11 0l10 0l10 0l11 0l10 0l11 0l10 0l10 0l11 0l10 0l11 0l10 0l10 0l11 0l10 0l11 0l10 0l10 0l11 0l10 0l11 0l10 0l10 0M-1 47l10 0l11 0l10 0l11 0l10 0l10 0l11 0l10 0l11 0l10 0l10 0l11 0l10 0l11 0l10 0l10 0l11 0l10 0l10 0l11 0l10 0l11 0l10 0l10 0l11 0l10 0l11 0l10 0l10 0l11 0l10 0l11 0l10 0l10 0l11 0l10 0l11 0l10 0l10 0l11 0l10 0l10 0l11 0l10 0l11 0l10 0l10 0l11 0l10 0l11 0l10 0l10 0l11 0l10 0l11 0l10 0l10 0l11 0l10 0l11 0l10 0l10 0l11 0l10 0l11 0l10 0l10 0M-1 57l10 0l11 0l10 0l11 0l10 0l10 0l11 0l10 0l11 0l10 0l10 0l11 0l10 0l11 0l10 0l10 0l11 0l10 0l10 0l11 0l10 0l11 0l10 0l10 0l11 0l10 0l11 0l10 0l10 0l11 0l10 0l11 0l10 0l10 0l11 0l10 0l11 0l10 0l10 0l11 0l10 0l10 0l11 0l10 0l11 0l10 0l10 0l11 0l10 0l11 0l10 0l10 0l11 0l10 0l11 0l10 0l10 0l11 0l10 0l11 0l10 0l10 0l11 0l10 0l11 0l10 0l10 0M-1 68l10 0l11 0l10 0l11 0l10 0l10 0l11 0l10 0l11 0l10 0l10 0l11 0l10 0l11 0l10 0l10 0l11 0l10 0l10 0l11 0l10 0l11 0l10 0l10 0l11 0l10 0l11 0l10 0l10 0l11 0l10 0l11 0l10 0l10 0l11 0l10 0l11 0l10 0l10 0l11 0l10 0l10 0l11 0l10 0l11 0l10 0l10 0l11 0l10 0l11 0l10 0l10 0l11 0l10 0l11 0l10 0l10 0l11 0l10 0l11 0l10 0l10 0l11 0l10 0l11 0l10 0l10 0M-1 78l10 0l11 0l10 0l11 0l10 0l10 0l11 0l10 0l11 0l10 0l10 0l11 0l10 0l11 0l10 0l10 0l11 0l10 0l10 0l11 0l10 0l11 0l10 0l10 0l11 0l10 0l11 0l10 0l10 0l11 0l10 0l11 0l10 0l10 0l11 0l10 0l11 0l10 0l10 0l11 0l10 0l10 0l11 0l10 0l11 0l10 0l10 0l11 0l10 0l11 0l10 0l10 0l11 0l10 0l11 0l10 0l10 0l11 0l10 0l11 0l10 0l10 0l11 0l10 0l11 0l10 0l10 0" fill="none" stroke="none" marker-start="url(#gmy)" marker-mid="url(#gmy)" marker-end="url(#gmy)"/><path d="M4 5l11 0l10 0l10 0l11 0l10 0l11 0l10 0l10 0l11 0l10 0l11 0l10 0l10 0l11 0l10 0l10 0l11 0l10 0l11 0l10 0l10 0l11 0l10 0l11 0l10 0l10 0l11 0l10 0l11 0l10 0l10 0l11 0l10 0l11 0l10 0l10 0l11 0l10 0l11 0l10 0l10 0l11 0l10 0l10 0l11 0l10 0l11 0l10 0l10 0l11 0l10 0l11 0l10 0l10 0l11 0l10 0l11 0l10 0l10 0l11 0l10 0l11 0l10 0l10 0l11 0l10 0M4 16l11 0l10 0l10 0l11 0l10 0l11 0l10 0l10 0l11 0l10 0l11 0l10 0l10 0l11 0l10 0l10 0l11 0l10 0l11 0l10 0l10 0l11 0l10 0l11 0l10 0l10 0l11 0l10 0l11 0l10 0l10 0l11 0l10 0l11 0l10 0l10 0l11 0l10 0l11 0l10 0l10 0l11 0l10 0l10 0l11 0l10 0l11 0l10 0l10 0l11 0l10 0l11 0l10 0l10 0l11 0l10 0l11 0l10 0l10 0l11 0l10 0l11 0l10 0l10 0l11 0l10 0M4 26l11 0l10 0l10 0l11 0l10 0l11 0l10 0l10 0l11 0l10 0l11 0l10 0l10 0l11 0l10 0l10 0l11 0l10 0l11 0l10 0l10 0l11 0l10 0l11 0l10 0l10 0l11 0l10 0l11 0l10 0l10 0l11 0l10 0l11 0l10 0l10 0l11 0l10 0l11 0l10 0l10 0l11 0l10 0l10 0l11 0l10 0l11 0l10 0l10 0l11 0l10 0l11 0l10 0l10 0l11 0l10 0l11 0l10 0l10 0l11 0l10 0l11 0l10 0l10 0l11 0l10 0M4 37l11 0l10 0l10 0l11 0l10 0l11 0l10 0l10 0l11 0l10 0l11 0l10 0l10 0l11 0l10 0l10 0l11 0l10 0l11 0l10 0l10 0l11 0l10 0l11 0l10 0l10 0l11 0l10 0l11 0l10 0l10 0l11 0l10 0l11 0l10 0l10 0l11 0l10 0l11 0l10 0l10 0l11 0l10 0l10 0l11 0l10 0l11 0l10 0l10 0l11 0l10 0l11 0l10 0l10 0l11 0l10 0l11 0l10 0l10 0l11 0l10 0l11 0l10 0l10 0l11 0l10 0M4 47l11 0l10 0l10 0l11 0l10 0l11 0l10 0l10 0l11 0l10 0l11 0l10 0l10 0l11 0l10 0l10 0l11 0l10 0l11 0l10 0l10 0l11 0l10 0l11 0l10 0l10 0l11 0l10 0l11 0l10 0l10 0l11 0l10 0l11 0l10 0l10 0l11 0l10 0l11 0l10 0l10 0l11 0l10 0l10 0l11 0l10 0l11 0l10 0l10 0l11 0l10 0l11 0l10 0l10 0l11 0l10 0l11 0l10 0l10 0l11 0l10 0l11 0l10 0l10 0l11 0l10 0M4 57l11 0l10 0l10 0l11 0l10 0l11 0l10 0l10 0l11 0l10 0l11 0l10 0l10 0l11 0l10 0l10 0l11 0l10 0l11 0l10 0l10 0l11 0l10 0l11 0l10 0l10 0l11 0l10 0l11 0l10 0l10 0l11 0l10 0l11 0l10 0l10 0l11 0l10 0l11 0l10 0l10 0l11 0l10 0l10 0l11 0l10 0l11 0l10 0l10 0l11 0l10 0l11 0l10 0l10 0l11 0l10 0l11 0l10 0l10 0l11 0l10 0l11 0l10 0l10 0l11 0l10 0M4 68l11 0l10 0l10 0l11 0l10 0l11 0l10 0l10 0l11 0l10 0l11 0l10 0l10 0l11 0l10 0l10 0l11 0l10 0l11 0l10 0l10 0l11 0l10 0l11 0l10 0l10 0l11 0l10 0l11 0l10 0l10 0l11 0l10 0l11 0l10 0l10 0l11 0l10 0l11 0l10 0l10 0l11 0l10 0l10 0l11 0l10 0l11 0l10 0l10 0l11 0l10 0l11 0l10 0l10 0l11 0l10 0l11 0l10 0l10 0l11 0l10 0l11 0l10 0l10 0l11 0l10 0M4 78l11 0l10 0l10 0l11 0l10 0l11 0l10 0l10 0l11 0l10 0l11 0l10 0l10 0l11 0l10 0l10 0l11 0l10 0l11 0l10 0l10 0l11 0l10 0l11 0l10 0l10 0l11 0l10 0l11 0l10 0l10 0l11 0l10 0l11 0l10 0l10 0l11 0l10 0l11 0l10 0l10 0l11 0l10 0l10 0l11 0l10 0l11 0l10 0l10 0l11 0l10 0l11 0l10 0l10 0l11 0l10 0l11 0l10 0l10 0l11 0l10 0l11 0l10 0l10 0l11 0l10 0M-1 0l10 0l11 0l10 0l11 0l10 0l10 0l11 0l10 0l11 0l10 0l10 0l11 0l10 0l11 0l10 0l10 0l11 0l10 0l10 0l11 0l10 0l11 0l10 0l10 0l11 0l10 0l11 0l10 0l10 0l11 0l10 0l11 0l10 0l10 0l11 0l10 0l11 0l10 0l10 0l11 0l10 0l10 0l11 0l10 0l11 0l10 0l10 0l11 0l10 0l11 0l10 0l10 0l11 0l10 0l11 0l10 0l10 0l11 0l10 0l11 0l10 0l10 0l11 0l10 0l11 0l10 0l10 0M-1 11l10 0l11 0l10 0l11 0l10 0l10 0l11 0l10 0l11 0l10 0l10 0l11 0l10 0l11 0l10 0l10 0l11 0l10 0l10 0l11 0l10 0l11 0l10 0l10 0l11 0l10 0l11 0l10 0l10 0l11 0l10 0l11 0l10 0l10 0l11 0l10 0l11 0l10 0l10 0l11 0l10 0l10 0l11 0l10 0l11 0l10 0l10 0l11 0l10 0l11 0l10 0l10 0l11 0l10 0l11 0l10 0l10 0l11 0l10 0l11 0l10 0l10 0l11 0l10 0l11 0l10 0l10 0M-1 21l10 0l11 0l10 0l11 0l10 0l10 0l11 0l10 0l11 0l10 0l10 0l11 0l10 0l11 0l10 0l10 0l11 0l10 0l10 0l11 0l10 0l11 0l10 0l10 0l11 0l10 0l11 0l10 0l10 0l11 0l10 0l11 0l10 0l10 0l11 0l10 0l11 0l10 0l10 0l11 0l10 0l10 0l11 0l10 0l11 0l10 0l10 0l11 0l10 0l11 0l10 0l10 0l11 0l10 0l11 0l10 0l10 0l11 0l10 0l11 0l10 0l10 0l11 0l10 0l11 0l10 0l10 0M-1 31l10 0l11 0l10 0l11 0l10 0l10 0l11 0l10 0l11 0l10 0l10 0l11 0l10 0l11 0l10 0l10 0l11 0l10 0l10 0l11 0l10 0l11 0l10 0l10 0l11 0l10 0l11 0l10 0l10 0l11 0l10 0l11 0l10 0l10 0l11 0l10 0l11 0l10 0l10 0l11 0l10 0l10 0l11 0l10 0l11 0l10 0l10 0l11 0l10 0l11 0l10 0l10 0l11 0l10 0l11 0l10 0l10 0l11 0l10 0l11 0l10 0l10 0l11 0l10 0l11 0l10 0l10 0M-1 42l10 0l11 0l10 0l11 0l10 0l10 0l11 0l10 0l11 0l10 0l10 0l11 0l10 0l11 0l10 0l10 0l11 0l10 0l10 0l11 0l10 0l11 0l10 0l10 0l11 0l10 0l11 0l10 0l10 0l11 0l10 0l11 0l10 0l10 0l11 0l10 0l11 0l10 0l10 0l11 0l10 0l10 0l11 0l10 0l11 0l10 0l10 0l11 0l10 0l11 0l10 0l10 0l11 0l10 0l11 0l10 0l10 0l11 0l10 0l11 0l10 0l10 0l11 0l10 0l11 0l10 0l10 0M-1 52l10 0l11 0l10 0l11 0l10 0l10 0l11 0l10 0l11 0l10 0l10 0l11 0l10 0l11 0l10 0l10 0l11 0l10 0l10 0l11 0l10 0l11 0l10 0l10 0l11 0l10 0l11 0l10 0l10 0l11 0l10 0l11 0l10 0l10 0l11 0l10 0l11 0l10 0l10 0l11 0l10 0l10 0l11 0l10 0l11 0l10 0l10 0l11 0l10 0l11 0l10 0l10 0l11 0l10 0l11 0l10 0l10 0l11 0l10 0l11 0l10 0l10 0l11 0l10 0l11 0l10 0l10 0M-1 63l10 0l11 0l10 0l11 0l10 0l10 0l11 0l10 0l11 0l10 0l10 0l11 0l10 0l11 0l10 0l10 0l11 0l10 0l10 0l11 0l10 0l11 0l10 0l10 0l11 0l10 0l11 0l10 0l10 0l11 0l10 0l11 0l10 0l10 0l11 0l10 0l11 0l10 0l10 0l11 0l10 0l10 0l11 0l10 0l11 0l10 0l10 0l11 0l10 0l11 0l10 0l10 0l11 0l10 0l11 0l10 0l10 0l11 0l10 0l11 0l10 0l10 0l11 0l10 0l11 0l10 0l10 0M-1 73l10 0l11 0l10 0l11 0l10 0l10 0l11 0l10 0l11 0l10 0l10 0l11 0l10 0l11 0l10 0l10 0l11 0l10 0l10 0l11 0l10 0l11 0l10 0l10 0l11 0l10 0l11 0l10 0l10 0l11 0l10 0l11 0l10 0l10 0l11 0l10 0l11 0l10 0l10 0l11 0l10 0l10 0l11 0l10 0l11 0l10 0l10 0l11 0l10 0l11 0l10 0l10 0l11 0l10 0l11 0l10 0l10 0l11 0l10 0l11 0l10 0l10 0l11 0l10 0l11 0l10 0l10 0M-1 83l10 0l11 0l10 0l11 0l10 0l10 0l11 0l10 0l11 0l10 0l10 0l11 0l10 0l11 0l10 0l10 0l11 0l10 0l10 0l11 0l10 0l11 0l10 0l10 0l11 0l10 0l11 0l10 0l10 0l11 0l10 0l11 0l10 0l10 0l11 0l10 0l11 0l10 0l10 0l11 0l10 0l10 0l11 0l10 0l11 0l10 0l10 0l11 0l10 0l11 0l10 0l10 0l11 0l10 0l11 0l10 0l10 0l11 0l10 0l11 0l10 0l10 0l11 0l10 0l11 0l10 0l10 0" fill="none" stroke="none" marker-start="url(#gdy)" marker-mid="url(#gdy)" marker-end="url(#gdy)"/><path d="M-1 89l10 0l11 0l10 0l11 0l10 0l10 0l11 0l10 0l11 0l10 0l10 0l11 0l10 0l11 0l10 0l10 0l11 0l10 0l10 0l11 0l10 0l11 0l10 0l10 0l11 0l10 0l11 0l10 0l10 0l11 0l10 0l11 0l10 0l10 0l11 0l10 0l11 0l10 0l10 0l11 0l10 0l10 0l11 0l10 0l11 0l10 0l10 0l11 0l10 0l11 0l10 0l10 0l11 0l10 0l11 0l10 0l10 0l11 0l10 0l11 0l10 0l10 0l11 0l10 0l11 0l10 0l10 0M-1 99l10 0l11 0l10 0l11 0l10 0l10 0l11 0l10 0l11 0l10 0l10 0l11 0l10 0l11 0l10 0l10 0l11 0l10 0l10 0l11 0l10 0l11 0l10 0l10 0l11 0l10 0l11 0l10 0l10 0l11 0l10 0l11 0l10 0l10 0l11 0l10 0l11 0l10 0l10 0l11 0l10 0l10 0l11 0l10 0l11 0l10 0l10 0l11 0l10 0l11 0l10 0l10 0l11 0l10 0l11 0l10 0l10 0l11 0l10 0l11 0l10 0l10 0l11 0l10 0l11 0l10 0l10 0M-1 109l10 0l11 0l10 0l11 0l10 0l10 0l11 0l10 0l11 0l10 0l10 0l11 0l10 0l11 0l10 0l10 0l11 0l10 0l10 0l11 0l10 0l11 0l10 0l10 0l11 0l10 0l11 0l10 0l10 0l11 0l10 0l11 0l10 0l10 0l11 0l10 0l11 0l10 0l10 0l11 0l10 0l10 0l11 0l10 0l11 0l10 0l10 0l11 0l10 0l11 0l10 0l10 0l11 0l10 0l11 0l10 0l10 0l11 0l10 0l11 0l10 0l10 0l11 0l10 0l11 0l10 0l10 0M-1 120l10 0l11 0l10 0l11 0l10 0l10 0l11 0l10 0l11 0l10 0l10 0l11 0l10 0l11 0l10 0l10 0l11 0l10 0l10 0l11 0l10 0l11 0l10 0l10 0l11 0l10 0l11 0l10 0l10 0l11 0l10 0l11 0l10 0l10 0l11 0l10 0l11 0l10 0l10 0l11 0l10 0l10 0l11 0l10 0l11 0l10 0l10 0l11 0l10 0l11 0l10 0l10 0l11 0l10 0l11 0l10 0l10 0l11 0l10 0l11 0l10 0l10 0l11 0l10 0l11 0l10 0l10 0M-1 130l10 0l11 0l10 0l11 0l10 0l10 0l11 0l10 0l11 0l10 0l10 0l11 0l10 0l11 0l10 0l10 0l11 0l10 0l10 0l11 0l10 0l11 0l10 0l10 0l11 0l10 0l11 0l10 0l10 0l11 0l10 0l11 0l10 0l10 0l11 0l10 0l11 0l10 0l10 0l11 0l10 0l10 0l11 0l10 0l11 0l10 0l10 0l11 0l10 0l11 0l10 0l10 0l11 0l10 0l11 0l10 0l10 0l11 0l10 0l11 0l10 0l10 0l11 0l10 0l11 0l10 0l10 0M-1 141l10 0l11 0l10 0l11 0l10 0l10 0l11 0l10 0l11 0l10 0l10 0l11 0l10 0l11 0l10 0l10 0l11 0l10 0l10 0l11 0l10 0l11 0l10 0l10 0l11 0l10 0l11 0l10 0l10 0l11 0l10 0l11 0l10 0l10 0l11 0l10 0l11 0l10 0l10 0l11 0l10 0l10 0l11 0l10 0l11 0l10 0l10 0l11 0l10 0l11 0l10 0l10 0l11 0l10 0l11 0l10 0l10 0l11 0l10 0l11 0l10 0l10 0l11 0l10 0l11 0l10 0l10 0M-1 151l10 0l11 0l10 0l11 0l10 0l10 0l11 0l10 0l11 0l10 0l10 0l11 0l10 0l11 0l10 0l10 0l11 0l10 0l10 0l11 0l10 0l11 0l10 0l10 0l11 0l10 0l11 0l10 0l10 0l11 0l10 0l11 0l10 0l10 0l11 0l10 0l11 0l10 0l10 0l11 0l10 0l10 0l11 0l10 0l11 0l10 0l10 0l11 0l10 0l11 0l10 0l10 0l11 0l10 0l11 0l10 0l10 0l11 0l10 0l11 0l10 0l10 0l11 0l10 0l11 0l10 0l10 0M-1 161l10 0l11 0l10 0l11 0l10 0l10 0l11 0l10 0l11 0l10 0l10 0l11 0l10 0l11 0l10 0l10 0l11 0l10 0l10 0l11 0l10 0l11 0l10 0l10 0l11 0l10 0l11 0l10 0l10 0l11 0l10 0l11 0l10 0l10 0l11 0l10 0l11 0l10 0l10 0l11 0l10 0l10 0l11 0l10 0l11 0l10 0l10 0l11 0l10 0l11 0l10 0l10 0l11 0l10 0l11 0l10 0l10 0l11 0l10 0l11 0l10 0l10 0l11 0l10 0l11 0l10 0l10 0M-1 172l10 0l11 0l10 0l11 0l10 0l10 0l11 0l10 0l11 0l10 0l10 0l11 0l10 0l11 0l10 0l10 0l11 0l10 0l10 0l11 0l10 0l11 0l10 0l10 0l11 0l10 0l11 0l10 0l10 0l11 0l10 0l11 0l10 0l10 0l11 0l10 0l11 0l10 0l10 0l11 0l10 0l10 0l11 0l10 0l11 0l10 0l10 0l11 0l10 0l11 0l10 0l10 0l11 0l10 0l11 0l10 0l10 0l11 0l10 0l11 0l10 0l10 0l11 0l10 0l11 0l10 0l10 0M-1 182l10 0l11 0l10 0l11 0l10 0l10 0l11 0l10 0l11 0l10 0l10 0l11 0l10 0l11 0l10 0l10 0l11 0l10 0l10 0l11 0l10 0l11 0l10 0l10 0l11 0l10 0l11 0l10 0l10 0l11 0l10 0l11 0l10 0l10 0l11 0l10 0l11 0l10 0l10 0l11 0l10 0l10 0l11 0l10 0l11 0l10 0l10 0l11 0l10 0l11 0l10 0l10 0l11 0l10 0l11 0l10 0l10 0l11 0l10 0l11 0l10 0l10 0l11 0l10 0l11 0l10 0l10 0M-1 193l10 0l11 0l10 0l11 0l10 0l10 0l11 0l10 0l11 0l10 0l10 0l11 0l10 0l11 0l10 0l10 0l11 0l10 0l10 0l11 0l10 0l11 0l10 0l10 0l11 0l10 0l11 0l10 0l10 0l11 0l10 0l11 0l10 0l10 0l11 0l10 0l11 0l10 0l10 0l11 0l10 0l10 0l11 0l10 0l11 0l10 0l10 0l11 0l10 0l11 0l10 0l10 0l11 0l10 0l11 0l10 0l10 0l11 0l10 0l11 0l10 0l10 0l11 0l10 0l11 0l10 0l10 0M-1 203l10 0l11 0l10 0l11 0l10 0l10 0l11 0l10 0l11 0l10 0l10 0l11 0l10 0l11 0l10 0l10 0l11 0l10 0l10 0l11 0l10 0l11 0l10 0l10 0l11 0l10 0l11 0l10 0l10 0l11 0l10 0l11 0l10 0l10 0l11 0l10 0l11 0l10 0l10 0l11 0l10 0l10 0l11 0l10 0l11 0l10 0l10 0l11 0l10 0l11 0l10 0l10 0l11 0l10 0l11 0l10 0l10 0l11 0l10 0l11 0l10 0l10 0l11 0l10 0l11 0l10 0l10 0M-1 213l10 0l11 0l10 0l11 0l10 0l10 0l11 0l10 0l11 0l10 0l10 0l11 0l10 0l11 0l10 0l10 0l11 0l10 0l10 0l11 0l10 0l11 0l10 0l10 0l11 0l10 0l11 0l10 0l10 0l11 0l10 0l11 0l10 0l10 0l11 0l10 0l11 0l10 0l10 0l11 0l10 0l10 0l11 0l10 0l11 0l10 0l10 0l11 0l10 0l11 0l10 0l10 0l11 0l10 0l11 0l10 0l10 0l11 0l10 0l11 0l10 0l10 0l11 0l10 0l11 0l10 0l10 0M-1 224l10 0l11 0l10 0l11 0l10 0l10 0l11 0l10 0l11 0l10 0l10 0l11 0l10 0l11 0l10 0l10 0l11 0l10 0l10 0l11 0l10 0l11 0l10 0l10 0l11 0l10 0l11 0l10 0l10 0l11 0l10 0l11 0l10 0l10 0l11 0l10 0l11 0l10 0l10 0l11 0l10 0l10 0l11 0l10 0l11 0l10 0l10 0l11 0l10 0l11 0l10 0l10 0l11 0l10 0l11 0l10 0l10 0l11 0l10 0l11 0l10 0l10 0l11 0l10 0l11 0l10 0l10 0M-1 234l10 0l11 0l10 0l11 0l10 0l10 0l11 0l10 0l11 0l10 0l10 0l11 0l10 0l11 0l10 0l10 0l11 0l10 0l10 0l11 0l10 0l11 0l10 0l10 0l11 0l10 0l11 0l10 0l10 0l11 0l10 0l11 0l10 0l10 0l11 0l10 0l11 0l10 0l10 0l11 0l10 0l10 0l11 0l10 0l11 0l10 0l10 0l11 0l10 0l11 0l10 0l10 0l11 0l10 0l11 0l10 0l10 0l11 0l10 0l11 0l10 0l10 0l11 0l10 0l11 0l10 0l10 0M-1 245l10 0l11 0l10 0l11 0l10 0l10 0l11 0l10 0l11 0l10 0l10 0l11 0l10 0l11 0l10 0l10 0l11 0l10 0l10 0l11 0l10 0l11 0l10 0l10 0l11 0l10 0l11 0l10 0l10 0l11 0l10 0l11 0l10 0l10 0l11 0l10 0l11 0l10 0l10 0l11 0l10 0l10 0l11 0l10 0l11 0l10 0l10 0l11 0l10 0l11 0l10 0l10 0l11 0l10 0l11 0l10 0l10 0l11 0l10 0l11 0l10 0l10 0l11 0l10 0l11 0l10 0l10 0M-1 255l10 0l11 0l10 0l11 0l10 0l10 0l11 0l10 0l11 0l10 0l10 0l11 0l10 0l11 0l10 0l10 0l11 0l10 0l10 0l11 0l10 0l11 0l10 0l10 0l11 0l10 0l11 0l10 0l10 0l11 0l10 0l11 0l10 0l10 0l11 0l10 0l11 0l10 0l10 0l11 0l10 0l10 0l11 0l10 0l11 0l10 0l10 0l11 0l10 0l11 0l10 0l10 0l11 0l10 0l11 0l10 0l10 0l11 0l10 0l11 0l10 0l10 0l11 0l10 0l11 0l10 0l10 0M-1 265l10 0l11 0l10 0l11 0l10 0l10 0l11 0l10 0l11 0l10 0l10 0l11 0l10 0l11 0l10 0l10 0l11 0l10 0l10 0l11 0l10 0l11 0l10 0l10 0l11 0l10 0l11 0l10 0l10 0l11 0l10 0l11 0l10 0l10 0l11 0l10 0l11 0l10 0l10 0l11 0l10 0l10 0l11 0l10 0l11 0l10 0l10 0l11 0l10 0l11 0l10 0l10 0l11 0l10 0l11 0l10 0l10 0l11 0l10 0l11 0l10 0l10 0l11 0l10 0l11 0l10 0l10 0M-1 276l10 0l11 0l10 0l11 0l10 0l10 0l11 0l10 0l11 0l10 0l10 0l11 0l10 0l11 0l10 0l10 0l11 0l10 0l10 0l11 0l10 0l11 0l10 0l10 0l11 0l10 0l11 0l10 0l10 0l11 0l10 0l11 0l10 0l10 0l11 0l10 0l11 0l10 0l10 0l11 0l10 0l10 0l11 0l10 0l11 0l10 0l10 0l11 0l10 0l11 0l10 0l10 0l11 0l10 0l11 0l10 0l10 0l11 0l10 0l11 0l10 0l10 0l11 0l10 0l11 0l10 0l10 0M-1 286l10 0l11 0l10 0l11 0l10 0l10 0l11 0l10 0l11 0l10 0l10 0l11 0l10 0l11 0l10 0l10 0l11 0l10 0l10 0l11 0l10 0l11 0l10 0l10 0l11 0l10 0l11 0l10 0l10 0l11 0l10 0l11 0l10 0l10 0l11 0l10 0l11 0l10 0l10 0l11 0l10 0l10 0l11 0l10 0l11 0l10 0l10 0l11 0l10 0l11 0l10 0l10 0l11 0l10 0l11 0l10 0l10 0l11 0l10 0l11 0l10 0l10 0l11 0l10 0l11 0l10 0l10 0M-1 297l10 0l11 0l10 0l11 0l10 0l10 0l11 0l10 0l11 0l10 0l10 0l11 0l10 0l11 0l10 0l10 0l11 0l10 0l10 0l11 0l10 0l11 0l10 0l10 0l11 0l10 0l11 0l10 0l10 0l11 0l10 0l11 0l10 0l10 0l11 0l10 0l11 0l10 0l10 0l11 0l10 0l10 0l11 0l10 0l11 0l10 0l10 0l11 0l10 0l11 0l10 0l10 0l11 0l10 0l11 0l10 0l10 0l11 0l10 0l11 0l10 0l10 0l11 0l10 0l11 0l10 0l10 0M-1 307l10 0l11 0l10 0l11 0l10 0l10 0l11 0l10 0l11 0l10 0l10 0l11 0l10 0l11 0l10 0l10 0l11 0l10 0l10 0l11 0l10 0l11 0l10 0l10 0l11 0l10 0l11 0l10 0l10 0l11 0l10 0l11 0l10 0l10 0l11 0l10 0l11 0l10 0l10 0l11 0l10 0l10 0l11 0l10 0l11 0l10 0l10 0l11 0l10 0l11 0l10 0l10 0l11 0l10 0l11 0l10 0l10 0l11 0l10 0l11 0l10 0l10 0l11 0l10 0l11 0l10 0l10 0M-1 317l10 0l11 0l10 0l11 0l10 0l10 0l11 0l10 0l11 0l10 0l10 0l11 0l10 0l11 0l10 0l10 0l11 0l10 0l10 0l11 0l10 0l11 0l10 0l10 0l11 0l10 0l11 0l10 0l10 0l11 0l10 0l11 0l10 0l10 0l11 0l10 0l11 0l10 0l10 0l11 0l10 0l10 0l11 0l10 0l11 0l10 0l10 0l11 0l10 0l11 0l10 0l10 0l11 0l10 0l11 0l10 0l10 0l11 0l10 0l11 0l10 0l10 0l11 0l10 0l11 0l10 0l10 0M-1 328l10 0l11 0l10 0l11 0l10 0l10 0l11 0l10 0l11 0l10 0l10 0l11 0l10 0l11 0l10 0l10 0l11 0l10 0l10 0l11 0l10 0l11 0l10 0l10 0l11 0l10 0l11 0l10 0l10 0l11 0l10 0l11 0l10 0l10 0l11 0l10 0l11 0l10 0l10 0l11 0l10 0l10 0l11 0l10 0l11 0l10 0l10 0l11 0l10 0l11 0l10 0l10 0l11 0l10 0l11 0l10 0l10 0l11 0l10 0l11 0l10 0l10 0l11 0l10 0l11 0l10 0l10 0M-1 338l10 0l11 0l10 0l11 0l10 0l10 0l11 0l10 0l11 0l10 0l10 0l11 0l10 0l11 0l10 0l10 0l11 0l10 0l10 0l11 0l10 0l11 0l10 0l10 0l11 0l10 0l11 0l10 0l10 0l11 0l10 0l11 0l10 0l10 0l11 0l10 0l11 0l10 0l10 0l11 0l10 0l10 0l11 0l10 0l11 0l10 0l10 0l11 0l10 0l11 0l10 0l10 0l11 0l10 0l11 0l10 0l10 0l11 0l10 0l11 0l10 0l10 0l11 0l10 0l11 0l10 0l10 0M-1 348l10 0l11 0l10 0l11 0l10 0l10 0l11 0l10 0l11 0l10 0l10 0l11 0l10 0l11 0l10 0l10 0l11 0l10 0l10 0l11 0l10 0l11 0l10 0l10 0l11 0l10 0l11 0l10 0l10 0l11 0l10 0l11 0l10 0l10 0l11 0l10 0l11 0l10 0l10 0l11 0l10 0l10 0l11 0l10 0l11 0l10 0l10 0l11 0l10 0l11 0l10 0l10 0l11 0l10 0l11 0l10 0l10 0l11 0l10 0l11 0l10 0l10 0l11 0l10 0l11 0l10 0l10 0M-1 359l10 0l11 0l10 0l11 0l10 0l10 0l11 0l10 0l11 0l10 0l10 0l11 0l10 0l11 0l10 0l10 0l11 0l10 0l10 0l11 0l10 0l11 0l10 0l10 0l11 0l10 0l11 0l10 0l10 0l11 0l10 0l11 0l10 0l10 0l11 0l10 0l11 0l10 0l10 0l11 0l10 0l10 0l11 0l10 0l11 0l10 0l10 0l11 0l10 0l11 0l10 0l10 0l11 0l10 0l11 0l10 0l10 0l11 0l10 0l11 0l10 0l10 0l11 0l10 0l11 0l10 0l10 0M-1 369l10 0l11 0l10 0l11 0l10 0l10 0l11 0l10 0l11 0l10 0l10 0l11 0l10 0l11 0l10 0l10 0l11 0l10 0l10 0l11 0l10 0l11 0l10 0l10 0l11 0l10 0l11 0l10 0l10 0l11 0l10 0l11 0l10 0l10 0l11 0l10 0l11 0l10 0l10 0l11 0l10 0l10 0l11 0l10 0l11 0l10 0l10 0l11 0l10 0l11 0l10 0l10 0l11 0l10 0l11 0l10 0l10 0l11 0l10 0l11 0l10 0l10 0l11 0l10 0l11 0l10 0l10 0M-1 380l10 0l11 0l10 0l11 0l10 0l10 0l11 0l10 0l11 0l10 0l10 0l11 0l10 0l11 0l10 0l10 0l11 0l10 0l10 0l11 0l10 0l11 0l10 0l10 0l11 0l10 0l11 0l10 0l10 0l11 0l10 0l11 0l10 0l10 0l11 0l10 0l11 0l10 0l10 0l11 0l10 0l10 0l11 0l10 0l11 0l10 0l10 0l11 0l10 0l11 0l10 0l10 0l11 0l10 0l11 0l10 0l10 0l11 0l10 0l11 0l10 0l10 0l11 0l10 0l11 0l10 0l10 0M-1 390l10 0l11 0l10 0l11 0l10 0l10 0l11 0l10 0l11 0l10 0l10 0l11 0l10 0l11 0l10 0l10 0l11 0l10 0l10 0l11 0l10 0l11 0l10 0l10 0l11 0l10 0l11 0l10 0l10 0l11 0l10 0l11 0l10 0l10 0l11 0l10 0l11 0l10 0l10 0l11 0l10 0l10 0l11 0l10 0l11 0l10 0l10 0l11 0l10 0l11 0l10 0l10 0l11 0l10 0l11 0l10 0l10 0l11 0l10 0l11 0l10 0l10 0l11 0l10 0l11 0l10 0l10 0M-1 400l10 0l11 0l10 0l11 0l10 0l10 0l11 0l10 0l11 0l10 0l10 0l11 0l10 0l11 0l10 0l10 0l11 0l10 0l10 0l11 0l10 0l11 0l10 0l10 0l11 0l10 0l11 0l10 0l10 0l11 0l10 0l11 0l10 0l10 0l11 0l10 0l11 0l10 0l10 0l11 0l10 0l10 0l11 0l10 0l11 0l10 0l10 0l11 0l10 0l11 0l10 0l10 0l11 0l10 0l11 0l10 0l10 0l11 0l10 0l11 0l10 0l10 0l11 0l10 0l11 0l10 0l10 0M-1 411l10 0l11 0l10 0l11 0l10 0l10 0l11 0l10 0l11 0l10 0l10 0l11 0l10 0l11 0l10 0l10 0l11 0l10 0l10 0l11 0l10 0l11 0l10 0l10 0l11 0l10 0l11 0l10 0l10 0l11 0l10 0l11 0l10 0l10 0l11 0l10 0l11 0l10 0l10 0l11 0l10 0l10 0l11 0l10 0l11 0l10 0l10 0l11 0l10 0l11 0l10 0l10 0l11 0l10 0l11 0l10 0l10 0l11 0l10 0l11 0l10 0l10 0l11 0l10 0l11 0l10 0l10 0M-1 421l10 0l11 0l10 0l11 0l10 0l10 0l11 0l10 0l11 0l10 0l10 0l11 0l10 0l11 0l10 0l10 0l11 0l10 0l10 0l11 0l10 0l11 0l10 0l10 0l11 0l10 0l11 0l10 0l10 0l11 0l10 0l11 0l10 0l10 0l11 0l10 0l11 0l10 0l10 0l11 0l10 0l10 0l11 0l10 0l11 0l10 0l10 0l11 0l10 0l11 0l10 0l10 0l11 0l10 0l11 0l10 0l10 0l11 0l10 0l11 0l10 0l10 0l11 0l10 0l11 0l10 0l10 0M-1 432l10 0l11 0l10 0l11 0l10 0l10 0l11 0l10 0l11 0l10 0l10 0l11 0l10 0l11 0l10 0l10 0l11 0l10 0l10 0l11 0l10 0l11 0l10 0l10 0l11 0l10 0l11 0l10 0l10 0l11 0l10 0l11 0l10 0l10 0l11 0l10 0l11 0l10 0l10 0l11 0l10 0l10 0l11 0l10 0l11 0l10 0l10 0l11 0l10 0l11 0l10 0l10 0l11 0l10 0l11 0l10 0l10 0l11 0l10 0l11 0l10 0l10 0l11 0l10 0l11 0l10 0l10 0M-1 442l10 0l11 0l10 0l11 0l10 0l10 0l11 0l10 0l11 0l10 0l10 0l11 0l10 0l11 0l10 0l10 0l11 0l10 0l10 0l11 0l10 0l11 0l10 0l10 0l11 0l10 0l11 0l10 0l10 0l11 0l10 0l11 0l10 0l10 0l11 0l10 0l11 0l10 0l10 0l11 0l10 0l10 0l11 0l10 0l11 0l10 0l10 0l11 0l10 0l11 0l10 0l10 0l11 0l10 0l11 0l10 0l10 0l11 0l10 0l11 0l10 0l10 0l11 0l10 0l11 0l10 0l10 0M-1 452l10 0l11 0l10 0l11 0l10 0l10 0l11 0l10 0l11 0l10 0l10 0l11 0l10 0l11 0l10 0l10 0l11 0l10 0l10 0l11 0l10 0l11 0l10 0l10 0l11 0l10 0l11 0l10 0l10 0l11 0l10 0l11 0l10 0l10 0l11 0l10 0l11 0l10 0l10 0l11 0l10 0l10 0l11 0l10 0l11 0l10 0l10 0l11 0l10 0l11 0l10 0l10 0l11 0l10 0l11 0l10 0l10 0l11 0l10 0l11 0l10 0l10 0l11 0l10 0l11 0l10 0l10 0M-1 463l10 0l11 0l10 0l11 0l10 0l10 0l11 0l10 0l11 0l10 0l10 0l11 0l10 0l11 0l10 0l10 0l11 0l10 0l10 0l11 0l10 0l11 0l10 0l10 0l11 0l10 0l11 0l10 0l10 0l11 0l10 0l11 0l10 0l10 0l11 0l10 0l11 0l10 0l10 0l11 0l10 0l10 0l11 0l10 0l11 0l10 0l10 0l11 0l10 0l11 0l10 0l10 0l11 0l10 0l11 0l10 0l10 0l11 0l10 0l11 0l10 0l10 0l11 0l10 0l11 0l10 0l10 0M-1 473l10 0l11 0l10 0l11 0l10 0l10 0l11 0l10 0l11 0l10 0l10 0l11 0l10 0l11 0l10 0l10 0l11 0l10 0l10 0l11 0l10 0l11 0l10 0l10 0l11 0l10 0l11 0l10 0l10 0l11 0l10 0l11 0l10 0l10 0l11 0l10 0l11 0l10 0l10 0l11 0l10 0l10 0l11 0l10 0l11 0l10 0l10 0l11 0l10 0l11 0l10 0l10 0l11 0l10 0l11 0l10 0l10 0l11 0l10 0l11 0l10 0l10 0l11 0l10 0l11 0l10 0l10 0M-1 484l10 0l11 0l10 0l11 0l10 0l10 0l11 0l10 0l11 0l10 0l10 0l11 0l10 0l11 0l10 0l10 0l11 0l10 0l10 0l11 0l10 0l11 0l10 0l10 0l11 0l10 0l11 0l10 0l10 0l11 0l10 0l11 0l10 0l10 0l11 0l10 0l11 0l10 0l10 0l11 0l10 0l10 0l11 0l10 0l11 0l10 0l10 0l11 0l10 0l11 0l10 0l10 0l11 0l10 0l11 0l10 0l10 0l11 0l10 0l11 0l10 0l10 0l11 0l10 0l11 0l10 0l10 0M-1 494l10 0l11 0l10 0l11 0l10 0l10 0l11 0l10 0l11 0l10 0l10 0l11 0l10 0l11 0l10 0l10 0l11 0l10 0l10 0l11 0l10 0l11 0l10 0l10 0l11 0l10 0l11 0l10 0l10 0l11 0l10 0l11 0l10 0l10 0l11 0l10 0l11 0l10 0l10 0l11 0l10 0l10 0l11 0l10 0l11 0l10 0l10 0l11 0l10 0l11 0l10 0l10 0l11 0l10 0l11 0l10 0l10 0l11 0l10 0l11 0l10 0l10 0l11 0l10 0l11 0l10 0l10 0M-1 504l10 0l11 0l10 0l11 0l10 0l10 0l11 0l10 0l11 0l10 0l10 0l11 0l10 0l11 0l10 0l10 0l11 0l10 0l10 0l11 0l10 0l11 0l10 0l10 0l11 0l10 0l11 0l10 0l10 0l11 0l10 0l11 0l10 0l10 0l11 0l10 0l11 0l10 0l10 0l11 0l10 0l10 0l11 0l10 0l11 0l10 0l10 0l11 0l10 0l11 0l10 0l10 0l11 0l10 0l11 0l10 0l10 0l11 0l10 0l11 0l10 0l10 0l11 0l10 0l11 0l10 0l10 0M-1 515l10 0l11 0l10 0l11 0l10 0l10 0l11 0l10 0l11 0l10 0l10 0l11 0l10 0l11 0l10 0l10 0l11 0l10 0l10 0l11 0l10 0l11 0l10 0l10 0l11 0l10 0l11 0l10 0l10 0l11 0l10 0l11 0l10 0l10 0l11 0l10 0l11 0l10 0l10 0l11 0l10 0l10 0l11 0l10 0l11 0l10 0l10 0l11 0l10 0l11 0l10 0l10 0l11 0l10 0l11 0l10 0l10 0l11 0l10 0l11 0l10 0l10 0l11 0l10 0l11 0l10 0l10 0M-1 525l10 0l11 0l10 0l11 0l10 0l10 0l11 0l10 0l11 0l10 0l10 0l11 0l10 0l11 0l10 0l10 0l11 0l10 0l10 0l11 0l10 0l11 0l10 0l10 0l11 0l10 0l11 0l10 0l10 0l11 0l10 0l11 0l10 0l10 0l11 0l10 0l11 0l10 0l10 0l11 0l10 0l10 0l11 0l10 0l11 0l10 0l10 0l11 0l10 0l11 0l10 0l10 0l11 0l10 0l11 0l10 0l10 0l11 0l10 0l11 0l10 0l10 0l11 0l10 0l11 0l10 0l10 0M-1 536l10 0l11 0l10 0l11 0l10 0l10 0l11 0l10 0l11 0l10 0l10 0l11 0l10 0l11 0l10 0l10 0l11 0l10 0l10 0l11 0l10 0l11 0l10 0l10 0l11 0l10 0l11 0l10 0l10 0l11 0l10 0l11 0l10 0l10 0l11 0l10 0l11 0l10 0l10 0l11 0l10 0l10 0l11 0l10 0l11 0l10 0l10 0l11 0l10 0l11 0l10 0l10 0l11 0l10 0l11 0l10 0l10 0l11 0l10 0l11 0l10 0l10 0l11 0l10 0l11 0l10 0l10 0M-1 546l10 0l11 0l10 0l11 0l10 0l10 0l11 0l10 0l11 0l10 0l10 0l11 0l10 0l11 0l10 0l10 0l11 0l10 0l10 0l11 0l10 0l11 0l10 0l10 0l11 0l10 0l11 0l10 0l10 0l11 0l10 0l11 0l10 0l10 0l11 0l10 0l11 0l10 0l10 0l11 0l10 0l10 0l11 0l10 0l11 0l10 0l10 0l11 0l10 0l11 0l10 0l10 0l11 0l10 0l11 0l10 0l10 0l11 0l10 0l11 0l10 0l10 0l11 0l10 0l11 0l10 0l10 0M-1 556l10 0l11 0l10 0l11 0l10 0l10 0l11 0l10 0l11 0l10 0l10 0l11 0l10 0l11 0l10 0l10 0l11 0l10 0l10 0l11 0l10 0l11 0l10 0l10 0l11 0l10 0l11 0l10 0l10 0l11 0l10 0l11 0l10 0l10 0l11 0l10 0l11 0l10 0l10 0l11 0l10 0l10 0l11 0l10 0l11 0l10 0l10 0l11 0l10 0l11 0l10 0l10 0l11 0l10 0l11 0l10 0l10 0l11 0l10 0l11 0l10 0l10 0l11 0l10 0l11 0l10 0l10 0M-1 567l10 0l11 0l10 0l11 0l10 0l10 0l11 0l10 0l11 0l10 0l10 0l11 0l10 0l11 0l10 0l10 0l11 0l10 0l10 0l11 0l10 0l11 0l10 0l10 0l11 0l10 0l11 0l10 0l10 0l11 0l10 0l11 0l10 0l10 0l11 0l10 0l11 0l10 0l10 0l11 0l10 0l10 0l11 0l10 0l11 0l10 0l10 0l11 0l10 0l11 0l10 0l10 0l11 0l10 0l11 0l10 0l10 0l11 0l10 0l11 0l10 0l10 0l11 0l10 0l11 0l10 0l10 0M-1 577l10 0l11 0l10 0l11 0l10 0l10 0l11 0l10 0l11 0l10 0l10 0l11 0l10 0l11 0l10 0l10 0l11 0l10 0l10 0l11 0l10 0l11 0l10 0l10 0l11 0l10 0l11 0l10 0l10 0l11 0l10 0l11 0l10 0l10 0l11 0l10 0l11 0l10 0l10 0l11 0l10 0l10 0l11 0l10 0l11 0l10 0l10 0l11 0l10 0l11 0l10 0l10 0l11 0l10 0l11 0l10 0l10 0l11 0l10 0l11 0l10 0l10 0l11 0l10 0l11 0l10 0l10 0M-1 588l10 0l11 0l10 0l11 0l10 0l10 0l11 0l10 0l11 0l10 0l10 0l11 0l10 0l11 0l10 0l10 0l11 0l10 0l10 0l11 0l10 0l11 0l10 0l10 0l11 0l10 0l11 0l10 0l10 0l11 0l10 0l11 0l10 0l10 0l11 0l10 0l11 0l10 0l10 0l11 0l10 0l10 0l11 0l10 0l11 0l10 0l10 0l11 0l10 0l11 0l10 0l10 0l11 0l10 0l11 0l10 0l10 0l11 0l10 0l11 0l10 0l10 0l11 0l10 0l11 0l10 0l10 0M-1 598l10 0l11 0l10 0l11 0l10 0l10 0l11 0l10 0l11 0l10 0l10 0l11 0l10 0l11 0l10 0l10 0l11 0l10 0l10 0l11 0l10 0l11 0l10 0l10 0l11 0l10 0l11 0l10 0l10 0l11 0l10 0l11 0l10 0l10 0l11 0l10 0l11 0l10 0l10 0l11 0l10 0l10 0l11 0l10 0l11 0l10 0l10 0l11 0l10 0l11 0l10 0l10 0l11 0l10 0l11 0l10 0l10 0l11 0l10 0l11 0l10 0l10 0l11 0l10 0l11 0l10 0l10 0M-1 608l10 0l11 0l10 0l11 0l10 0l10 0l11 0l10 0l11 0l10 0l10 0l11 0l10 0l11 0l10 0l10 0l11 0l10 0l10 0l11 0l10 0l11 0l10 0l10 0l11 0l10 0l11 0l10 0l10 0l11 0l10 0l11 0l10 0l10 0l11 0l10 0l11 0l10 0l10 0l11 0l10 0l10 0l11 0l10 0l11 0l10 0l10 0l11 0l10 0l11 0l10 0l10 0l11 0l10 0l11 0l10 0l10 0l11 0l10 0l11 0l10 0l10 0l11 0l10 0l11 0l10 0l10 0M-1 619l10 0l11 0l10 0l11 0l10 0l10 0l11 0l10 0l11 0l10 0l10 0l11 0l10 0l11 0l10 0l10 0l11 0l10 0l10 0l11 0l10 0l11 0l10 0l10 0l11 0l10 0l11 0l10 0l10 0l11 0l10 0l11 0l10 0l10 0l11 0l10 0l11 0l10 0l10 0l11 0l10 0l10 0l11 0l10 0l11 0l10 0l10 0l11 0l10 0l11 0l10 0l10 0l11 0l10 0l11 0l10 0l10 0l11 0l10 0l11 0l10 0l10 0l11 0l10 0l11 0l10 0l10 0M-1 629l10 0l11 0l10 0l11 0l10 0l10 0l11 0l10 0l11 0l10 0l10 0l11 0l10 0l11 0l10 0l10 0l11 0l10 0l10 0l11 0l10 0l11 0l10 0l10 0l11 0l10 0l11 0l10 0l10 0l11 0l10 0l11 0l10 0l10 0l11 0l10 0l11 0l10 0l10 0l11 0l10 0l10 0l11 0l10 0l11 0l10 0l10 0l11 0l10 0l11 0l10 0l10 0l11 0l10 0l11 0l10 0l10 0l11 0l10 0l11 0l10 0l10 0l11 0l10 0l11 0l10 0l10 0M-1 640l10 0l11 0l10 0l11 0l10 0l10 0l11 0l10 0l11 0l10 0l10 0l11 0l10 0l11 0l10 0l10 0l11 0l10 0l10 0l11 0l10 0l11 0l10 0l10 0l11 0l10 0l11 0l10 0l10 0l11 0l10 0l11 0l10 0l10 0l11 0l10 0l11 0l10 0l10 0l11 0l10 0l10 0l11 0l10 0l11 0l10 0l10 0l11 0l10 0l11 0l10 0l10 0l11 0l10 0l11 0l10 0l10 0l11 0l10 0l11 0l10 0l10 0l11 0l10 0l11 0l10 0l10 0M-1 650l10 0l11 0l10 0l11 0l10 0l10 0l11 0l10 0l11 0l10 0l10 0l11 0l10 0l11 0l10 0l10 0l11 0l10 0l10 0l11 0l10 0l11 0l10 0l10 0l11 0l10 0l11 0l10 0l10 0l11 0l10 0l11 0l10 0l10 0l11 0l10 0l11 0l10 0l10 0l11 0l10 0l10 0l11 0l10 0l11 0l10 0l10 0l11 0l10 0l11 0l10 0l10 0l11 0l10 0l11 0l10 0l10 0l11 0l10 0l11 0l10 0l10 0l11 0l10 0l11 0l10 0l10 0M-1 660l10 0l11 0l10 0l11 0l10 0l10 0l11 0l10 0l11 0l10 0l10 0l11 0l10 0l11 0l10 0l10 0l11 0l10 0l10 0l11 0l10 0l11 0l10 0l10 0l11 0l10 0l11 0l10 0l10 0l11 0l10 0l11 0l10 0l10 0l11 0l10 0l11 0l10 0l10 0l11 0l10 0l10 0l11 0l10 0l11 0l10 0l10 0l11 0l10 0l11 0l10 0l10 0l11 0l10 0l11 0l10 0l10 0l11 0l10 0l11 0l10 0l10 0l11 0l10 0l11 0l10 0l10 0M-1 671l10 0l11 0l10 0l11 0l10 0l10 0l11 0l10 0l11 0l10 0l10 0l11 0l10 0l11 0l10 0l10 0l11 0l10 0l10 0l11 0l10 0l11 0l10 0l10 0l11 0l10 0l11 0l10 0l10 0l11 0l10 0l11 0l10 0l10 0l11 0l10 0l11 0l10 0l10 0l11 0l10 0l10 0l11 0l10 0l11 0l10 0l10 0l11 0l10 0l11 0l10 0l10 0l11 0l10 0l11 0l10 0l10 0l11 0l10 0l11 0l10 0l10 0l11 0l10 0l11 0l10 0l10 0M-1 681l10 0l11 0l10 0l11 0l10 0l10 0l11 0l10 0l11 0l10 0l10 0l11 0l10 0l11 0l10 0l10 0l11 0l10 0l10 0l11 0l10 0l11 0l10 0l10 0l11 0l10 0l11 0l10 0l10 0l11 0l10 0l11 0l10 0l10 0l11 0l10 0l11 0l10 0l10 0l11 0l10 0l10 0l11 0l10 0l11 0l10 0l10 0l11 0l10 0l11 0l10 0l10 0l11 0l10 0l11 0l10 0l10 0l11 0l10 0l11 0l10 0l10 0l11 0l10 0l11 0l10 0l10 0M-1 692l10 0l11 0l10 0l11 0l10 0l10 0l11 0l10 0l11 0l10 0l10 0l11 0l10 0l11 0l10 0l10 0l11 0l10 0l10 0l11 0l10 0l11 0l10 0l10 0l11 0l10 0l11 0l10 0l10 0l11 0l10 0l11 0l10 0l10 0l11 0l10 0l11 0l10 0l10 0l11 0l10 0l10 0l11 0l10 0l11 0l10 0l10 0l11 0l10 0l11 0l10 0l10 0l11 0l10 0l11 0l10 0l10 0l11 0l10 0l11 0l10 0l10 0l11 0l10 0l11 0l10 0l10 0M-1 702l10 0l11 0l10 0l11 0l10 0l10 0l11 0l10 0l11 0l10 0l10 0l11 0l10 0l11 0l10 0l10 0l11 0l10 0l10 0l11 0l10 0l11 0l10 0l10 0l11 0l10 0l11 0l10 0l10 0l11 0l10 0l11 0l10 0l10 0l11 0l10 0l11 0l10 0l10 0l11 0l10 0l10 0l11 0l10 0l11 0l10 0l10 0l11 0l10 0l11 0l10 0l10 0l11 0l10 0l11 0l10 0l10 0l11 0l10 0l11 0l10 0l10 0l11 0l10 0l11 0l10 0l10 0M-1 712l10 0l11 0l10 0l11 0l10 0l10 0l11 0l10 0l11 0l10 0l10 0l11 0l10 0l11 0l10 0l10 0l11 0l10 0l10 0l11 0l10 0l11 0l10 0l10 0l11 0l10 0l11 0l10 0l10 0l11 0l10 0l11 0l10 0l10 0l11 0l10 0l11 0l10 0l10 0l11 0l10 0l10 0l11 0l10 0l11 0l10 0l10 0l11 0l10 0l11 0l10 0l10 0l11 0l10 0l11 0l10 0l10 0l11 0l10 0l11 0l10 0l10 0l11 0l10 0l11 0l10 0l10 0M-1 723l10 0l11 0l10 0l11 0l10 0l10 0l11 0l10 0l11 0l10 0l10 0l11 0l10 0l11 0l10 0l10 0l11 0l10 0l10 0l11 0l10 0l11 0l10 0l10 0l11 0l10 0l11 0l10 0l10 0l11 0l10 0l11 0l10 0l10 0l11 0l10 0l11 0l10 0l10 0l11 0l10 0l10 0l11 0l10 0l11 0l10 0l10 0l11 0l10 0l11 0l10 0l10 0l11 0l10 0l11 0l10 0l10 0l11 0l10 0l11 0l10 0l10 0l11 0l10 0l11 0l10 0l10 0M-1 733l10 0l11 0l10 0l11 0l10 0l10 0l11 0l10 0l11 0l10 0l10 0l11 0l10 0l11 0l10 0l10 0l11 0l10 0l10 0l11 0l10 0l11 0l10 0l10 0l11 0l10 0l11 0l10 0l10 0l11 0l10 0l11 0l10 0l10 0l11 0l10 0l11 0l10 0l10 0l11 0l10 0l10 0l11 0l10 0l11 0l10 0l10 0l11 0l10 0l11 0l10 0l10 0l11 0l10 0l11 0l10 0l10 0l11 0l10 0l11 0l10 0l10 0l11 0l10 0l11 0l10 0l10 0" fill="none" stroke="none" marker-start="url(#gmw)" marker-mid="url(#gmw)" marker-end="url(#gmw)"/><path d="M4 89l11 0l10 0l10 0l11 0l10 0l11 0l10 0l10 0l11 0l10 0l11 0l10 0l10 0l11 0l10 0l10 0l11 0l10 0l11 0l10 0l10 0l11 0l10 0l11 0l10 0l10 0l11 0l10 0l11 0l10 0l10 0l11 0l10 0l11 0l10 0l10 0l11 0l10 0l11 0l10 0l10 0l11 0l10 0l10 0l11 0l10 0l11 0l10 0l10 0l11 0l10 0l11 0l10 0l10 0l11 0l10 0l11 0l10 0l10 0l11 0l10 0l11 0l10 0l10 0l11 0l10 0M4 99l11 0l10 0l10 0l11 0l10 0l11 0l10 0l10 0l11 0l10 0l11 0l10 0l10 0l11 0l10 0l10 0l11 0l10 0l11 0l10 0l10 0l11 0l10 0l11 0l10 0l10 0l11 0l10 0l11 0l10 0l10 0l11 0l10 0l11 0l10 0l10 0l11 0l10 0l11 0l10 0l10 0l11 0l10 0l10 0l11 0l10 0l11 0l10 0l10 0l11 0l10 0l11 0l10 0l10 0l11 0l10 0l11 0l10 0l10 0l11 0l10 0l11 0l10 0l10 0l11 0l10 0M4 109l11 0l10 0l10 0l11 0l10 0l11 0l10 0l10 0l11 0l10 0l11 0l10 0l10 0l11 0l10 0l10 0l11 0l10 0l11 0l10 0l10 0l11 0l10 0l11 0l10 0l10 0l11 0l10 0l11 0l10 0l10 0l11 0l10 0l11 0l10 0l10 0l11 0l10 0l11 0l10 0l10 0l11 0l10 0l10 0l11 0l10 0l11 0l10 0l10 0l11 0l10 0l11 0l10 0l10 0l11 0l10 0l11 0l10 0l10 0l11 0l10 0l11 0l10 0l10 0l11 0l10 0M4 120l11 0l10 0l10 0l11 0l10 0l11 0l10 0l10 0l11 0l10 0l11 0l10 0l10 0l11 0l10 0l10 0l11 0l10 0l11 0l10 0l10 0l11 0l10 0l11 0l10 0l10 0l11 0l10 0l11 0l10 0l10 0l11 0l10 0l11 0l10 0l10 0l11 0l10 0l11 0l10 0l10 0l11 0l10 0l10 0l11 0l10 0l11 0l10 0l10 0l11 0l10 0l11 0l10 0l10 0l11 0l10 0l11 0l10 0l10 0l11 0l10 0l11 0l10 0l10 0l11 0l10 0M4 130l11 0l10 0l10 0l11 0l10 0l11 0l10 0l10 0l11 0l10 0l11 0l10 0l10 0l11 0l10 0l10 0l11 0l10 0l11 0l10 0l10 0l11 0l10 0l11 0l10 0l10 0l11 0l10 0l11 0l10 0l10 0l11 0l10 0l11 0l10 0l10 0l11 0l10 0l11 0l10 0l10 0l11 0l10 0l10 0l11 0l10 0l11 0l10 0l10 0l11 0l10 0l11 0l10 0l10 0l11 0l10 0l11 0l10 0l10 0l11 0l10 0l11 0l10 0l10 0l11 0l10 0M4 141l11 0l10 0l10 0l11 0l10 0l11 0l10 0l10 0l11 0l10 0l11 0l10 0l10 0l11 0l10 0l10 0l11 0l10 0l11 0l10 0l10 0l11 0l10 0l11 0l10 0l10 0l11 0l10 0l11 0l10 0l10 0l11 0l10 0l11 0l10 0l10 0l11 0l10 0l11 0l10 0l10 0l11 0l10 0l10 0l11 0l10 0l11 0l10 0l10 0l11 0l10 0l11 0l10 0l10 0l11 0l10 0l11 0l10 0l10 0l11 0l10 0l11 0l10 0l10 0l11 0l10 0M4 151l11 0l10 0l10 0l11 0l10 0l11 0l10 0l10 0l11 0l10 0l11 0l10 0l10 0l11 0l10 0l10 0l11 0l10 0l11 0l10 0l10 0l11 0l10 0l11 0l10 0l10 0l11 0l10 0l11 0l10 0l10 0l11 0l10 0l11 0l10 0l10 0l11 0l10 0l11 0l10 0l10 0l11 0l10 0l10 0l11 0l10 0l11 0l10 0l10 0l11 0l10 0l11 0l10 0l10 0l11 0l10 0l11 0l10 0l10 0l11 0l10 0l11 0l10 0l10 0l11 0l10 0M4 161l11 0l10 0l10 0l11 0l10 0l11 0l10 0l10 0l11 0l10 0l11 0l10 0l10 0l11 0l10 0l10 0l11 0l10 0l11 0l10 0l10 0l11 0l10 0l11 0l10 0l10 0l11 0l10 0l11 0l10 0l10 0l11 0l10 0l11 0l10 0l10 0l11 0l10 0l11 0l10 0l10 0l11 0l10 0l10 0l11 0l10 0l11 0l10 0l10 0l11 0l10 0l11 0l10 0l10 0l11 0l10 0l11 0l10 0l10 0l11 0l10 0l11 0l10 0l10 0l11 0l10 0M4 172l11 0l10 0l10 0l11 0l10 0l11 0l10 0l10 0l11 0l10 0l11 0l10 0l10 0l11 0l10 0l10 0l11 0l10 0l11 0l10 0l10 0l11 0l10 0l11 0l10 0l10 0l11 0l10 0l11 0l10 0l10 0l11 0l10 0l11 0l10 0l10 0l11 0l10 0l11 0l10 0l10 0l11 0l10 0l10 0l11 0l10 0l11 0l10 0l10 0l11 0l10 0l11 0l10 0l10 0l11 0l10 0l11 0l10 0l10 0l11 0l10 0l11 0l10 0l10 0l11 0l10 0M4 182l11 0l10 0l10 0l11 0l10 0l11 0l10 0l10 0l11 0l10 0l11 0l10 0l10 0l11 0l10 0l10 0l11 0l10 0l11 0l10 0l10 0l11 0l10 0l11 0l10 0l10 0l11 0l10 0l11 0l10 0l10 0l11 0l10 0l11 0l10 0l10 0l11 0l10 0l11 0l10 0l10 0l11 0l10 0l10 0l11 0l10 0l11 0l10 0l10 0l11 0l10 0l11 0l10 0l10 0l11 0l10 0l11 0l10 0l10 0l11 0l10 0l11 0l10 0l10 0l11 0l10 0M4 193l11 0l10 0l10 0l11 0l10 0l11 0l10 0l10 0l11 0l10 0l11 0l10 0l10 0l11 0l10 0l10 0l11 0l10 0l11 0l10 0l10 0l11 0l10 0l11 0l10 0l10 0l11 0l10 0l11 0l10 0l10 0l11 0l10 0l11 0l10 0l10 0l11 0l10 0l11 0l10 0l10 0l11 0l10 0l10 0l11 0l10 0l11 0l10 0l10 0l11 0l10 0l11 0l10 0l10 0l11 0l10 0l11 0l10 0l10 0l11 0l10 0l11 0l10 0l10 0l11 0l10 0M4 203l11 0l10 0l10 0l11 0l10 0l11 0l10 0l10 0l11 0l10 0l11 0l10 0l10 0l11 0l10 0l10 0l11 0l10 0l11 0l10 0l10 0l11 0l10 0l11 0l10 0l10 0l11 0l10 0l11 0l10 0l10 0l11 0l10 0l11 0l10 0l10 0l11 0l10 0l11 0l10 0l10 0l11 0l10 0l10 0l11 0l10 0l11 0l10 0l10 0l11 0l10 0l11 0l10 0l10 0l11 0l10 0l11 0l10 0l10 0l11 0l10 0l11 0l10 0l10 0l11 0l10 0M4 213l11 0l10 0l10 0l11 0l10 0l11 0l10 0l10 0l11 0l10 0l11 0l10 0l10 0l11 0l10 0l10 0l11 0l10 0l11 0l10 0l10 0l11 0l10 0l11 0l10 0l10 0l11 0l10 0l11 0l10 0l10 0l11 0l10 0l11 0l10 0l10 0l11 0l10 0l11 0l10 0l10 0l11 0l10 0l10 0l11 0l10 0l11 0l10 0l10 0l11 0l10 0l11 0l10 0l10 0l11 0l10 0l11 0l10 0l10 0l11 0l10 0l11 0l10 0l10 0l11 0l10 0M4 224l11 0l10 0l10 0l11 0l10 0l11 0l10 0l10 0l11 0l10 0l11 0l10 0l10 0l11 0l10 0l10 0l11 0l10 0l11 0l10 0l10 0l11 0l10 0l11 0l10 0l10 0l11 0l10 0l11 0l10 0l10 0l11 0l10 0l11 0l10 0l10 0l11 0l10 0l11 0l10 0l10 0l11 0l10 0l10 0l11 0l10 0l11 0l10 0l10 0l11 0l10 0l11 0l10 0l10 0l11 0l10 0l11 0l10 0l10 0l11 0l10 0l11 0l10 0l10 0l11 0l10 0M4 234l11 0l10 0l10 0l11 0l10 0l11 0l10 0l10 0l11 0l10 0l11 0l10 0l10 0l11 0l10 0l10 0l11 0l10 0l11 0l10 0l10 0l11 0l10 0l11 0l10 0l10 0l11 0l10 0l11 0l10 0l10 0l11 0l10 0l11 0l10 0l10 0l11 0l10 0l11 0l10 0l10 0l11 0l10 0l10 0l11 0l10 0l11 0l10 0l10 0l11 0l10 0l11 0l10 0l10 0l11 0l10 0l11 0l10 0l10 0l11 0l10 0l11 0l10 0l10 0l11 0l10 0M4 245l11 0l10 0l10 0l11 0l10 0l11 0l10 0l10 0l11 0l10 0l11 0l10 0l10 0l11 0l10 0l10 0l11 0l10 0l11 0l10 0l10 0l11 0l10 0l11 0l10 0l10 0l11 0l10 0l11 0l10 0l10 0l11 0l10 0l11 0l10 0l10 0l11 0l10 0l11 0l10 0l10 0l11 0l10 0l10 0l11 0l10 0l11 0l10 0l10 0l11 0l10 0l11 0l10 0l10 0l11 0l10 0l11 0l10 0l10 0l11 0l10 0l11 0l10 0l10 0l11 0l10 0M4 255l11 0l10 0l10 0l11 0l10 0l11 0l10 0l10 0l11 0l10 0l11 0l10 0l10 0l11 0l10 0l10 0l11 0l10 0l11 0l10 0l10 0l11 0l10 0l11 0l10 0l10 0l11 0l10 0l11 0l10 0l10 0l11 0l10 0l11 0l10 0l10 0l11 0l10 0l11 0l10 0l10 0l11 0l10 0l10 0l11 0l10 0l11 0l10 0l10 0l11 0l10 0l11 0l10 0l10 0l11 0l10 0l11 0l10 0l10 0l11 0l10 0l11 0l10 0l10 0l11 0l10 0M4 265l11 0l10 0l10 0l11 0l10 0l11 0l10 0l10 0l11 0l10 0l11 0l10 0l10 0l11 0l10 0l10 0l11 0l10 0l11 0l10 0l10 0l11 0l10 0l11 0l10 0l10 0l11 0l10 0l11 0l10 0l10 0l11 0l10 0l11 0l10 0l10 0l11 0l10 0l11 0l10 0l10 0l11 0l10 0l10 0l11 0l10 0l11 0l10 0l10 0l11 0l10 0l11 0l10 0l10 0l11 0l10 0l11 0l10 0l10 0l11 0l10 0l11 0l10 0l10 0l11 0l10 0M4 276l11 0l10 0l10 0l11 0l10 0l11 0l10 0l10 0l11 0l10 0l11 0l10 0l10 0l11 0l10 0l10 0l11 0l10 0l11 0l10 0l10 0l11 0l10 0l11 0l10 0l10 0l11 0l10 0l11 0l10 0l10 0l11 0l10 0l11 0l10 0l10 0l11 0l10 0l11 0l10 0l10 0l11 0l10 0l10 0l11 0l10 0l11 0l10 0l10 0l11 0l10 0l11 0l10 0l10 0l11 0l10 0l11 0l10 0l10 0l11 0l10 0l11 0l10 0l10 0l11 0l10 0M4 286l11 0l10 0l10 0l11 0l10 0l11 0l10 0l10 0l11 0l10 0l11 0l10 0l10 0l11 0l10 0l10 0l11 0l10 0l11 0l10 0l10 0l11 0l10 0l11 0l10 0l10 0l11 0l10 0l11 0l10 0l10 0l11 0l10 0l11 0l10 0l10 0l11 0l10 0l11 0l10 0l10 0l11 0l10 0l10 0l11 0l10 0l11 0l10 0l10 0l11 0l10 0l11 0l10 0l10 0l11 0l10 0l11 0l10 0l10 0l11 0l10 0l11 0l10 0l10 0l11 0l10 0M4 297l11 0l10 0l10 0l11 0l10 0l11 0l10 0l10 0l11 0l10 0l11 0l10 0l10 0l11 0l10 0l10 0l11 0l10 0l11 0l10 0l10 0l11 0l10 0l11 0l10 0l10 0l11 0l10 0l11 0l10 0l10 0l11 0l10 0l11 0l10 0l10 0l11 0l10 0l11 0l10 0l10 0l11 0l10 0l10 0l11 0l10 0l11 0l10 0l10 0l11 0l10 0l11 0l10 0l10 0l11 0l10 0l11 0l10 0l10 0l11 0l10 0l11 0l10 0l10 0l11 0l10 0M4 307l11 0l10 0l10 0l11 0l10 0l11 0l10 0l10 0l11 0l10 0l11 0l10 0l10 0l11 0l10 0l10 0l11 0l10 0l11 0l10 0l10 0l11 0l10 0l11 0l10 0l10 0l11 0l10 0l11 0l10 0l10 0l11 0l10 0l11 0l10 0l10 0l11 0l10 0l11 0l10 0l10 0l11 0l10 0l10 0l11 0l10 0l11 0l10 0l10 0l11 0l10 0l11 0l10 0l10 0l11 0l10 0l11 0l10 0l10 0l11 0l10 0l11 0l10 0l10 0l11 0l10 0M4 317l11 0l10 0l10 0l11 0l10 0l11 0l10 0l10 0l11 0l10 0l11 0l10 0l10 0l11 0l10 0l10 0l11 0l10 0l11 0l10 0l10 0l11 0l10 0l11 0l10 0l10 0l11 0l10 0l11 0l10 0l10 0l11 0l10 0l11 0l10 0l10 0l11 0l10 0l11 0l10 0l10 0l11 0l10 0l10 0l11 0l10 0l11 0l10 0l10 0l11 0l10 0l11 0l10 0l10 0l11 0l10 0l11 0l10 0l10 0l11 0l10 0l11 0l10 0l10 0l11 0l10 0M4 328l11 0l10 0l10 0l11 0l10 0l11 0l10 0l10 0l11 0l10 0l11 0l10 0l10 0l11 0l10 0l10 0l11 0l10 0l11 0l10 0l10 0l11 0l10 0l11 0l10 0l10 0l11 0l10 0l11 0l10 0l10 0l11 0l10 0l11 0l10 0l10 0l11 0l10 0l11 0l10 0l10 0l11 0l10 0l10 0l11 0l10 0l11 0l10 0l10 0l11 0l10 0l11 0l10 0l10 0l11 0l10 0l11 0l10 0l10 0l11 0l10 0l11 0l10 0l10 0l11 0l10 0M4 338l11 0l10 0l10 0l11 0l10 0l11 0l10 0l10 0l11 0l10 0l11 0l10 0l10 0l11 0l10 0l10 0l11 0l10 0l11 0l10 0l10 0l11 0l10 0l11 0l10 0l10 0l11 0l10 0l11 0l10 0l10 0l11 0l10 0l11 0l10 0l10 0l11 0l10 0l11 0l10 0l10 0l11 0l10 0l10 0l11 0l10 0l11 0l10 0l10 0l11 0l10 0l11 0l10 0l10 0l11 0l10 0l11 0l10 0l10 0l11 0l10 0l11 0l10 0l10 0l11 0l10 0M4 348l11 0l10 0l10 0l11 0l10 0l11 0l10 0l10 0l11 0l10 0l11 0l10 0l10 0l11 0l10 0l10 0l11 0l10 0l11 0l10 0l10 0l11 0l10 0l11 0l10 0l10 0l11 0l10 0l11 0l10 0l10 0l11 0l10 0l11 0l10 0l10 0l11 0l10 0l11 0l10 0l10 0l11 0l10 0l10 0l11 0l10 0l11 0l10 0l10 0l11 0l10 0l11 0l10 0l10 0l11 0l10 0l11 0l10 0l10 0l11 0l10 0l11 0l10 0l10 0l11 0l10 0M4 359l11 0l10 0l10 0l11 0l10 0l11 0l10 0l10 0l11 0l10 0l11 0l10 0l10 0l11 0l10 0l10 0l11 0l10 0l11 0l10 0l10 0l11 0l10 0l11 0l10 0l10 0l11 0l10 0l11 0l10 0l10 0l11 0l10 0l11 0l10 0l10 0l11 0l10 0l11 0l10 0l10 0l11 0l10 0l10 0l11 0l10 0l11 0l10 0l10 0l11 0l10 0l11 0l10 0l10 0l11 0l10 0l11 0l10 0l10 0l11 0l10 0l11 0l10 0l10 0l11 0l10 0M4 369l11 0l10 0l10 0l11 0l10 0l11 0l10 0l10 0l11 0l10 0l11 0l10 0l10 0l11 0l10 0l10 0l11 0l10 0l11 0l10 0l10 0l11 0l10 0l11 0l10 0l10 0l11 0l10 0l11 0l10 0l10 0l11 0l10 0l11 0l10 0l10 0l11 0l10 0l11 0l10 0l10 0l11 0l10 0l10 0l11 0l10 0l11 0l10 0l10 0l11 0l10 0l11 0l10 0l10 0l11 0l10 0l11 0l10 0l10 0l11 0l10 0l11 0l10 0l10 0l11 0l10 0M4 380l11 0l10 0l10 0l11 0l10 0l11 0l10 0l10 0l11 0l10 0l11 0l10 0l10 0l11 0l10 0l10 0l11 0l10 0l11 0l10 0l10 0l11 0l10 0l11 0l10 0l10 0l11 0l10 0l11 0l10 0l10 0l11 0l10 0l11 0l10 0l10 0l11 0l10 0l11 0l10 0l10 0l11 0l10 0l10 0l11 0l10 0l11 0l10 0l10 0l11 0l10 0l11 0l10 0l10 0l11 0l10 0l11 0l10 0l10 0l11 0l10 0l11 0l10 0l10 0l11 0l10 0M4 390l11 0l10 0l10 0l11 0l10 0l11 0l10 0l10 0l11 0l10 0l11 0l10 0l10 0l11 0l10 0l10 0l11 0l10 0l11 0l10 0l10 0l11 0l10 0l11 0l10 0l10 0l11 0l10 0l11 0l10 0l10 0l11 0l10 0l11 0l10 0l10 0l11 0l10 0l11 0l10 0l10 0l11 0l10 0l10 0l11 0l10 0l11 0l10 0l10 0l11 0l10 0l11 0l10 0l10 0l11 0l10 0l11 0l10 0l10 0l11 0l10 0l11 0l10 0l10 0l11 0l10 0M4 400l11 0l10 0l10 0l11 0l10 0l11 0l10 0l10 0l11 0l10 0l11 0l10 0l10 0l11 0l10 0l10 0l11 0l10 0l11 0l10 0l10 0l11 0l10 0l11 0l10 0l10 0l11 0l10 0l11 0l10 0l10 0l11 0l10 0l11 0l10 0l10 0l11 0l10 0l11 0l10 0l10 0l11 0l10 0l10 0l11 0l10 0l11 0l10 0l10 0l11 0l10 0l11 0l10 0l10 0l11 0l10 0l11 0l10 0l10 0l11 0l10 0l11 0l10 0l10 0l11 0l10 0M4 411l11 0l10 0l10 0l11 0l10 0l11 0l10 0l10 0l11 0l10 0l11 0l10 0l10 0l11 0l10 0l10 0l11 0l10 0l11 0l10 0l10 0l11 0l10 0l11 0l10 0l10 0l11 0l10 0l11 0l10 0l10 0l11 0l10 0l11 0l10 0l10 0l11 0l10 0l11 0l10 0l10 0l11 0l10 0l10 0l11 0l10 0l11 0l10 0l10 0l11 0l10 0l11 0l10 0l10 0l11 0l10 0l11 0l10 0l10 0l11 0l10 0l11 0l10 0l10 0l11 0l10 0M4 421l11 0l10 0l10 0l11 0l10 0l11 0l10 0l10 0l11 0l10 0l11 0l10 0l10 0l11 0l10 0l10 0l11 0l10 0l11 0l10 0l10 0l11 0l10 0l11 0l10 0l10 0l11 0l10 0l11 0l10 0l10 0l11 0l10 0l11 0l10 0l10 0l11 0l10 0l11 0l10 0l10 0l11 0l10 0l10 0l11 0l10 0l11 0l10 0l10 0l11 0l10 0l11 0l10 0l10 0l11 0l10 0l11 0l10 0l10 0l11 0l10 0l11 0l10 0l10 0l11 0l10 0M4 432l11 0l10 0l10 0l11 0l10 0l11 0l10 0l10 0l11 0l10 0l11 0l10 0l10 0l11 0l10 0l10 0l11 0l10 0l11 0l10 0l10 0l11 0l10 0l11 0l10 0l10 0l11 0l10 0l11 0l10 0l10 0l11 0l10 0l11 0l10 0l10 0l11 0l10 0l11 0l10 0l10 0l11 0l10 0l10 0l11 0l10 0l11 0l10 0l10 0l11 0l10 0l11 0l10 0l10 0l11 0l10 0l11 0l10 0l10 0l11 0l10 0l11 0l10 0l10 0l11 0l10 0M4 442l11 0l10 0l10 0l11 0l10 0l11 0l10 0l10 0l11 0l10 0l11 0l10 0l10 0l11 0l10 0l10 0l11 0l10 0l11 0l10 0l10 0l11 0l10 0l11 0l10 0l10 0l11 0l10 0l11 0l10 0l10 0l11 0l10 0l11 0l10 0l10 0l11 0l10 0l11 0l10 0l10 0l11 0l10 0l10 0l11 0l10 0l11 0l10 0l10 0l11 0l10 0l11 0l10 0l10 0l11 0l10 0l11 0l10 0l10 0l11 0l10 0l11 0l10 0l10 0l11 0l10 0M4 452l11 0l10 0l10 0l11 0l10 0l11 0l10 0l10 0l11 0l10 0l11 0l10 0l10 0l11 0l10 0l10 0l11 0l10 0l11 0l10 0l10 0l11 0l10 0l11 0l10 0l10 0l11 0l10 0l11 0l10 0l10 0l11 0l10 0l11 0l10 0l10 0l11 0l10 0l11 0l10 0l10 0l11 0l10 0l10 0l11 0l10 0l11 0l10 0l10 0l11 0l10 0l11 0l10 0l10 0l11 0l10 0l11 0l10 0l10 0l11 0l10 0l11 0l10 0l10 0l11 0l10 0M4 463l11 0l10 0l10 0l11 0l10 0l11 0l10 0l10 0l11 0l10 0l11 0l10 0l10 0l11 0l10 0l10 0l11 0l10 0l11 0l10 0l10 0l11 0l10 0l11 0l10 0l10 0l11 0l10 0l11 0l10 0l10 0l11 0l10 0l11 0l10 0l10 0l11 0l10 0l11 0l10 0l10 0l11 0l10 0l10 0l11 0l10 0l11 0l10 0l10 0l11 0l10 0l11 0l10 0l10 0l11 0l10 0l11 0l10 0l10 0l11 0l10 0l11 0l10 0l10 0l11 0l10 0M4 473l11 0l10 0l10 0l11 0l10 0l11 0l10 0l10 0l11 0l10 0l11 0l10 0l10 0l11 0l10 0l10 0l11 0l10 0l11 0l10 0l10 0l11 0l10 0l11 0l10 0l10 0l11 0l10 0l11 0l10 0l10 0l11 0l10 0l11 0l10 0l10 0l11 0l10 0l11 0l10 0l10 0l11 0l10 0l10 0l11 0l10 0l11 0l10 0l10 0l11 0l10 0l11 0l10 0l10 0l11 0l10 0l11 0l10 0l10 0l11 0l10 0l11 0l10 0l10 0l11 0l10 0M4 484l11 0l10 0l10 0l11 0l10 0l11 0l10 0l10 0l11 0l10 0l11 0l10 0l10 0l11 0l10 0l10 0l11 0l10 0l11 0l10 0l10 0l11 0l10 0l11 0l10 0l10 0l11 0l10 0l11 0l10 0l10 0l11 0l10 0l11 0l10 0l10 0l11 0l10 0l11 0l10 0l10 0l11 0l10 0l10 0l11 0l10 0l11 0l10 0l10 0l11 0l10 0l11 0l10 0l10 0l11 0l10 0l11 0l10 0l10 0l11 0l10 0l11 0l10 0l10 0l11 0l10 0M4 494l11 0l10 0l10 0l11 0l10 0l11 0l10 0l10 0l11 0l10 0l11 0l10 0l10 0l11 0l10 0l10 0l11 0l10 0l11 0l10 0l10 0l11 0l10 0l11 0l10 0l10 0l11 0l10 0l11 0l10 0l10 0l11 0l10 0l11 0l10 0l10 0l11 0l10 0l11 0l10 0l10 0l11 0l10 0l10 0l11 0l10 0l11 0l10 0l10 0l11 0l10 0l11 0l10 0l10 0l11 0l10 0l11 0l10 0l10 0l11 0l10 0l11 0l10 0l10 0l11 0l10 0M4 504l11 0l10 0l10 0l11 0l10 0l11 0l10 0l10 0l11 0l10 0l11 0l10 0l10 0l11 0l10 0l10 0l11 0l10 0l11 0l10 0l10 0l11 0l10 0l11 0l10 0l10 0l11 0l10 0l11 0l10 0l10 0l11 0l10 0l11 0l10 0l10 0l11 0l10 0l11 0l10 0l10 0l11 0l10 0l10 0l11 0l10 0l11 0l10 0l10 0l11 0l10 0l11 0l10 0l10 0l11 0l10 0l11 0l10 0l10 0l11 0l10 0l11 0l10 0l10 0l11 0l10 0M4 515l11 0l10 0l10 0l11 0l10 0l11 0l10 0l10 0l11 0l10 0l11 0l10 0l10 0l11 0l10 0l10 0l11 0l10 0l11 0l10 0l10 0l11 0l10 0l11 0l10 0l10 0l11 0l10 0l11 0l10 0l10 0l11 0l10 0l11 0l10 0l10 0l11 0l10 0l11 0l10 0l10 0l11 0l10 0l10 0l11 0l10 0l11 0l10 0l10 0l11 0l10 0l11 0l10 0l10 0l11 0l10 0l11 0l10 0l10 0l11 0l10 0l11 0l10 0l10 0l11 0l10 0M4 525l11 0l10 0l10 0l11 0l10 0l11 0l10 0l10 0l11 0l10 0l11 0l10 0l10 0l11 0l10 0l10 0l11 0l10 0l11 0l10 0l10 0l11 0l10 0l11 0l10 0l10 0l11 0l10 0l11 0l10 0l10 0l11 0l10 0l11 0l10 0l10 0l11 0l10 0l11 0l10 0l10 0l11 0l10 0l10 0l11 0l10 0l11 0l10 0l10 0l11 0l10 0l11 0l10 0l10 0l11 0l10 0l11 0l10 0l10 0l11 0l10 0l11 0l10 0l10 0l11 0l10 0M4 536l11 0l10 0l10 0l11 0l10 0l11 0l10 0l10 0l11 0l10 0l11 0l10 0l10 0l11 0l10 0l10 0l11 0l10 0l11 0l10 0l10 0l11 0l10 0l11 0l10 0l10 0l11 0l10 0l11 0l10 0l10 0l11 0l10 0l11 0l10 0l10 0l11 0l10 0l11 0l10 0l10 0l11 0l10 0l10 0l11 0l10 0l11 0l10 0l10 0l11 0l10 0l11 0l10 0l10 0l11 0l10 0l11 0l10 0l10 0l11 0l10 0l11 0l10 0l10 0l11 0l10 0M4 546l11 0l10 0l10 0l11 0l10 0l11 0l10 0l10 0l11 0l10 0l11 0l10 0l10 0l11 0l10 0l10 0l11 0l10 0l11 0l10 0l10 0l11 0l10 0l11 0l10 0l10 0l11 0l10 0l11 0l10 0l10 0l11 0l10 0l11 0l10 0l10 0l11 0l10 0l11 0l10 0l10 0l11 0l10 0l10 0l11 0l10 0l11 0l10 0l10 0l11 0l10 0l11 0l10 0l10 0l11 0l10 0l11 0l10 0l10 0l11 0l10 0l11 0l10 0l10 0l11 0l10 0M4 556l11 0l10 0l10 0l11 0l10 0l11 0l10 0l10 0l11 0l10 0l11 0l10 0l10 0l11 0l10 0l10 0l11 0l10 0l11 0l10 0l10 0l11 0l10 0l11 0l10 0l10 0l11 0l10 0l11 0l10 0l10 0l11 0l10 0l11 0l10 0l10 0l11 0l10 0l11 0l10 0l10 0l11 0l10 0l10 0l11 0l10 0l11 0l10 0l10 0l11 0l10 0l11 0l10 0l10 0l11 0l10 0l11 0l10 0l10 0l11 0l10 0l11 0l10 0l10 0l11 0l10 0M4 567l11 0l10 0l10 0l11 0l10 0l11 0l10 0l10 0l11 0l10 0l11 0l10 0l10 0l11 0l10 0l10 0l11 0l10 0l11 0l10 0l10 0l11 0l10 0l11 0l10 0l10 0l11 0l10 0l11 0l10 0l10 0l11 0l10 0l11 0l10 0l10 0l11 0l10 0l11 0l10 0l10 0l11 0l10 0l10 0l11 0l10 0l11 0l10 0l10 0l11 0l10 0l11 0l10 0l10 0l11 0l10 0l11 0l10 0l10 0l11 0l10 0l11 0l10 0l10 0l11 0l10 0M4 577l11 0l10 0l10 0l11 0l10 0l11 0l10 0l10 0l11 0l10 0l11 0l10 0l10 0l11 0l10 0l10 0l11 0l10 0l11 0l10 0l10 0l11 0l10 0l11 0l10 0l10 0l11 0l10 0l11 0l10 0l10 0l11 0l10 0l11 0l10 0l10 0l11 0l10 0l11 0l10 0l10 0l11 0l10 0l10 0l11 0l10 0l11 0l10 0l10 0l11 0l10 0l11 0l10 0l10 0l11 0l10 0l11 0l10 0l10 0l11 0l10 0l11 0l10 0l10 0l11 0l10 0M4 588l11 0l10 0l10 0l11 0l10 0l11 0l10 0l10 0l11 0l10 0l11 0l10 0l10 0l11 0l10 0l10 0l11 0l10 0l11 0l10 0l10 0l11 0l10 0l11 0l10 0l10 0l11 0l10 0l11 0l10 0l10 0l11 0l10 0l11 0l10 0l10 0l11 0l10 0l11 0l10 0l10 0l11 0l10 0l10 0l11 0l10 0l11 0l10 0l10 0l11 0l10 0l11 0l10 0l10 0l11 0l10 0l11 0l10 0l10 0l11 0l10 0l11 0l10 0l10 0l11 0l10 0M4 598l11 0l10 0l10 0l11 0l10 0l11 0l10 0l10 0l11 0l10 0l11 0l10 0l10 0l11 0l10 0l10 0l11 0l10 0l11 0l10 0l10 0l11 0l10 0l11 0l10 0l10 0l11 0l10 0l11 0l10 0l10 0l11 0l10 0l11 0l10 0l10 0l11 0l10 0l11 0l10 0l10 0l11 0l10 0l10 0l11 0l10 0l11 0l10 0l10 0l11 0l10 0l11 0l10 0l10 0l11 0l10 0l11 0l10 0l10 0l11 0l10 0l11 0l10 0l10 0l11 0l10 0M4 608l11 0l10 0l10 0l11 0l10 0l11 0l10 0l10 0l11 0l10 0l11 0l10 0l10 0l11 0l10 0l10 0l11 0l10 0l11 0l10 0l10 0l11 0l10 0l11 0l10 0l10 0l11 0l10 0l11 0l10 0l10 0l11 0l10 0l11 0l10 0l10 0l11 0l10 0l11 0l10 0l10 0l11 0l10 0l10 0l11 0l10 0l11 0l10 0l10 0l11 0l10 0l11 0l10 0l10 0l11 0l10 0l11 0l10 0l10 0l11 0l10 0l11 0l10 0l10 0l11 0l10 0M4 619l11 0l10 0l10 0l11 0l10 0l11 0l10 0l10 0l11 0l10 0l11 0l10 0l10 0l11 0l10 0l10 0l11 0l10 0l11 0l10 0l10 0l11 0l10 0l11 0l10 0l10 0l11 0l10 0l11 0l10 0l10 0l11 0l10 0l11 0l10 0l10 0l11 0l10 0l11 0l10 0l10 0l11 0l10 0l10 0l11 0l10 0l11 0l10 0l10 0l11 0l10 0l11 0l10 0l10 0l11 0l10 0l11 0l10 0l10 0l11 0l10 0l11 0l10 0l10 0l11 0l10 0M4 629l11 0l10 0l10 0l11 0l10 0l11 0l10 0l10 0l11 0l10 0l11 0l10 0l10 0l11 0l10 0l10 0l11 0l10 0l11 0l10 0l10 0l11 0l10 0l11 0l10 0l10 0l11 0l10 0l11 0l10 0l10 0l11 0l10 0l11 0l10 0l10 0l11 0l10 0l11 0l10 0l10 0l11 0l10 0l10 0l11 0l10 0l11 0l10 0l10 0l11 0l10 0l11 0l10 0l10 0l11 0l10 0l11 0l10 0l10 0l11 0l10 0l11 0l10 0l10 0l11 0l10 0M4 640l11 0l10 0l10 0l11 0l10 0l11 0l10 0l10 0l11 0l10 0l11 0l10 0l10 0l11 0l10 0l10 0l11 0l10 0l11 0l10 0l10 0l11 0l10 0l11 0l10 0l10 0l11 0l10 0l11 0l10 0l10 0l11 0l10 0l11 0l10 0l10 0l11 0l10 0l11 0l10 0l10 0l11 0l10 0l10 0l11 0l10 0l11 0l10 0l10 0l11 0l10 0l11 0l10 0l10 0l11 0l10 0l11 0l10 0l10 0l11 0l10 0l11 0l10 0l10 0l11 0l10 0M4 650l11 0l10 0l10 0l11 0l10 0l11 0l10 0l10 0l11 0l10 0l11 0l10 0l10 0l11 0l10 0l10 0l11 0l10 0l11 0l10 0l10 0l11 0l10 0l11 0l10 0l10 0l11 0l10 0l11 0l10 0l10 0l11 0l10 0l11 0l10 0l10 0l11 0l10 0l11 0l10 0l10 0l11 0l10 0l10 0l11 0l10 0l11 0l10 0l10 0l11 0l10 0l11 0l10 0l10 0l11 0l10 0l11 0l10 0l10 0l11 0l10 0l11 0l10 0l10 0l11 0l10 0M4 660l11 0l10 0l10 0l11 0l10 0l11 0l10 0l10 0l11 0l10 0l11 0l10 0l10 0l11 0l10 0l10 0l11 0l10 0l11 0l10 0l10 0l11 0l10 0l11 0l10 0l10 0l11 0l10 0l11 0l10 0l10 0l11 0l10 0l11 0l10 0l10 0l11 0l10 0l11 0l10 0l10 0l11 0l10 0l10 0l11 0l10 0l11 0l10 0l10 0l11 0l10 0l11 0l10 0l10 0l11 0l10 0l11 0l10 0l10 0l11 0l10 0l11 0l10 0l10 0l11 0l10 0M4 671l11 0l10 0l10 0l11 0l10 0l11 0l10 0l10 0l11 0l10 0l11 0l10 0l10 0l11 0l10 0l10 0l11 0l10 0l11 0l10 0l10 0l11 0l10 0l11 0l10 0l10 0l11 0l10 0l11 0l10 0l10 0l11 0l10 0l11 0l10 0l10 0l11 0l10 0l11 0l10 0l10 0l11 0l10 0l10 0l11 0l10 0l11 0l10 0l10 0l11 0l10 0l11 0l10 0l10 0l11 0l10 0l11 0l10 0l10 0l11 0l10 0l11 0l10 0l10 0l11 0l10 0M4 681l11 0l10 0l10 0l11 0l10 0l11 0l10 0l10 0l11 0l10 0l11 0l10 0l10 0l11 0l10 0l10 0l11 0l10 0l11 0l10 0l10 0l11 0l10 0l11 0l10 0l10 0l11 0l10 0l11 0l10 0l10 0l11 0l10 0l11 0l10 0l10 0l11 0l10 0l11 0l10 0l10 0l11 0l10 0l10 0l11 0l10 0l11 0l10 0l10 0l11 0l10 0l11 0l10 0l10 0l11 0l10 0l11 0l10 0l10 0l11 0l10 0l11 0l10 0l10 0l11 0l10 0M4 692l11 0l10 0l10 0l11 0l10 0l11 0l10 0l10 0l11 0l10 0l11 0l10 0l10 0l11 0l10 0l10 0l11 0l10 0l11 0l10 0l10 0l11 0l10 0l11 0l10 0l10 0l11 0l10 0l11 0l10 0l10 0l11 0l10 0l11 0l10 0l10 0l11 0l10 0l11 0l10 0l10 0l11 0l10 0l10 0l11 0l10 0l11 0l10 0l10 0l11 0l10 0l11 0l10 0l10 0l11 0l10 0l11 0l10 0l10 0l11 0l10 0l11 0l10 0l10 0l11 0l10 0M4 702l11 0l10 0l10 0l11 0l10 0l11 0l10 0l10 0l11 0l10 0l11 0l10 0l10 0l11 0l10 0l10 0l11 0l10 0l11 0l10 0l10 0l11 0l10 0l11 0l10 0l10 0l11 0l10 0l11 0l10 0l10 0l11 0l10 0l11 0l10 0l10 0l11 0l10 0l11 0l10 0l10 0l11 0l10 0l10 0l11 0l10 0l11 0l10 0l10 0l11 0l10 0l11 0l10 0l10 0l11 0l10 0l11 0l10 0l10 0l11 0l10 0l11 0l10 0l10 0l11 0l10 0M4 712l11 0l10 0l10 0l11 0l10 0l11 0l10 0l10 0l11 0l10 0l11 0l10 0l10 0l11 0l10 0l10 0l11 0l10 0l11 0l10 0l10 0l11 0l10 0l11 0l10 0l10 0l11 0l10 0l11 0l10 0l10 0l11 0l10 0l11 0l10 0l10 0l11 0l10 0l11 0l10 0l10 0l11 0l10 0l10 0l11 0l10 0l11 0l10 0l10 0l11 0l10 0l11 0l10 0l10 0l11 0l10 0l11 0l10 0l10 0l11 0l10 0l11 0l10 0l10 0l11 0l10 0M4 723l11 0l10 0l10 0l11 0l10 0l11 0l10 0l10 0l11 0l10 0l11 0l10 0l10 0l11 0l10 0l10 0l11 0l10 0l11 0l10 0l10 0l11 0l10 0l11 0l10 0l10 0l11 0l10 0l11 0l10 0l10 0l11 0l10 0l11 0l10 0l10 0l11 0l10 0l11 0l10 0l10 0l11 0l10 0l10 0l11 0l10 0l11 0l10 0l10 0l11 0l10 0l11 0l10 0l10 0l11 0l10 0l11 0l10 0l10 0l11 0l10 0l11 0l10 0l10 0l11 0l10 0M4 733l11 0l10 0l10 0l11 0l10 0l11 0l10 0l10 0l11 0l10 0l11 0l10 0l10 0l11 0l10 0l10 0l11 0l10 0l11 0l10 0l10 0l11 0l10 0l11 0l10 0l10 0l11 0l10 0l11 0l10 0l10 0l11 0l10 0l11 0l10 0l10 0l11 0l10 0l11 0l10 0l10 0l11 0l10 0l10 0l11 0l10 0l11 0l10 0l10 0l11 0l10 0l11 0l10 0l10 0l11 0l10 0l11 0l10 0l10 0l11 0l10 0l11 0l10 0l10 0l11 0l10 0M-1 94l10 0l11 0l10 0l11 0l10 0l10 0l11 0l10 0l11 0l10 0l10 0l11 0l10 0l11 0l10 0l10 0l11 0l10 0l10 0l11 0l10 0l11 0l10 0l10 0l11 0l10 0l11 0l10 0l10 0l11 0l10 0l11 0l10 0l10 0l11 0l10 0l11 0l10 0l10 0l11 0l10 0l10 0l11 0l10 0l11 0l10 0l10 0l11 0l10 0l11 0l10 0l10 0l11 0l10 0l11 0l10 0l10 0l11 0l10 0l11 0l10 0l10 0l11 0l10 0l11 0l10 0l10 0M-1 104l10 0l11 0l10 0l11 0l10 0l10 0l11 0l10 0l11 0l10 0l10 0l11 0l10 0l11 0l10 0l10 0l11 0l10 0l10 0l11 0l10 0l11 0l10 0l10 0l11 0l10 0l11 0l10 0l10 0l11 0l10 0l11 0l10 0l10 0l11 0l10 0l11 0l10 0l10 0l11 0l10 0l10 0l11 0l10 0l11 0l10 0l10 0l11 0l10 0l11 0l10 0l10 0l11 0l10 0l11 0l10 0l10 0l11 0l10 0l11 0l10 0l10 0l11 0l10 0l11 0l10 0l10 0M-1 115l10 0l11 0l10 0l11 0l10 0l10 0l11 0l10 0l11 0l10 0l10 0l11 0l10 0l11 0l10 0l10 0l11 0l10 0l10 0l11 0l10 0l11 0l10 0l10 0l11 0l10 0l11 0l10 0l10 0l11 0l10 0l11 0l10 0l10 0l11 0l10 0l11 0l10 0l10 0l11 0l10 0l10 0l11 0l10 0l11 0l10 0l10 0l11 0l10 0l11 0l10 0l10 0l11 0l10 0l11 0l10 0l10 0l11 0l10 0l11 0l10 0l10 0l11 0l10 0l11 0l10 0l10 0M-1 125l10 0l11 0l10 0l11 0l10 0l10 0l11 0l10 0l11 0l10 0l10 0l11 0l10 0l11 0l10 0l10 0l11 0l10 0l10 0l11 0l10 0l11 0l10 0l10 0l11 0l10 0l11 0l10 0l10 0l11 0l10 0l11 0l10 0l10 0l11 0l10 0l11 0l10 0l10 0l11 0l10 0l10 0l11 0l10 0l11 0l10 0l10 0l11 0l10 0l11 0l10 0l10 0l11 0l10 0l11 0l10 0l10 0l11 0l10 0l11 0l10 0l10 0l11 0l10 0l11 0l10 0l10 0M-1 135l10 0l11 0l10 0l11 0l10 0l10 0l11 0l10 0l11 0l10 0l10 0l11 0l10 0l11 0l10 0l10 0l11 0l10 0l10 0l11 0l10 0l11 0l10 0l10 0l11 0l10 0l11 0l10 0l10 0l11 0l10 0l11 0l10 0l10 0l11 0l10 0l11 0l10 0l10 0l11 0l10 0l10 0l11 0l10 0l11 0l10 0l10 0l11 0l10 0l11 0l10 0l10 0l11 0l10 0l11 0l10 0l10 0l11 0l10 0l11 0l10 0l10 0l11 0l10 0l11 0l10 0l10 0M-1 146l10 0l11 0l10 0l11 0l10 0l10 0l11 0l10 0l11 0l10 0l10 0l11 0l10 0l11 0l10 0l10 0l11 0l10 0l10 0l11 0l10 0l11 0l10 0l10 0l11 0l10 0l11 0l10 0l10 0l11 0l10 0l11 0l10 0l10 0l11 0l10 0l11 0l10 0l10 0l11 0l10 0l10 0l11 0l10 0l11 0l10 0l10 0l11 0l10 0l11 0l10 0l10 0l11 0l10 0l11 0l10 0l10 0l11 0l10 0l11 0l10 0l10 0l11 0l10 0l11 0l10 0l10 0M-1 156l10 0l11 0l10 0l11 0l10 0l10 0l11 0l10 0l11 0l10 0l10 0l11 0l10 0l11 0l10 0l10 0l11 0l10 0l10 0l11 0l10 0l11 0l10 0l10 0l11 0l10 0l11 0l10 0l10 0l11 0l10 0l11 0l10 0l10 0l11 0l10 0l11 0l10 0l10 0l11 0l10 0l10 0l11 0l10 0l11 0l10 0l10 0l11 0l10 0l11 0l10 0l10 0l11 0l10 0l11 0l10 0l10 0l11 0l10 0l11 0l10 0l10 0l11 0l10 0l11 0l10 0l10 0M-1 167l10 0l11 0l10 0l11 0l10 0l10 0l11 0l10 0l11 0l10 0l10 0l11 0l10 0l11 0l10 0l10 0l11 0l10 0l10 0l11 0l10 0l11 0l10 0l10 0l11 0l10 0l11 0l10 0l10 0l11 0l10 0l11 0l10 0l10 0l11 0l10 0l11 0l10 0l10 0l11 0l10 0l10 0l11 0l10 0l11 0l10 0l10 0l11 0l10 0l11 0l10 0l10 0l11 0l10 0l11 0l10 0l10 0l11 0l10 0l11 0l10 0l10 0l11 0l10 0l11 0l10 0l10 0M-1 177l10 0l11 0l10 0l11 0l10 0l10 0l11 0l10 0l11 0l10 0l10 0l11 0l10 0l11 0l10 0l10 0l11 0l10 0l10 0l11 0l10 0l11 0l10 0l10 0l11 0l10 0l11 0l10 0l10 0l11 0l10 0l11 0l10 0l10 0l11 0l10 0l11 0l10 0l10 0l11 0l10 0l10 0l11 0l10 0l11 0l10 0l10 0l11 0l10 0l11 0l10 0l10 0l11 0l10 0l11 0l10 0l10 0l11 0l10 0l11 0l10 0l10 0l11 0l10 0l11 0l10 0l10 0M-1 187l10 0l11 0l10 0l11 0l10 0l10 0l11 0l10 0l11 0l10 0l10 0l11 0l10 0l11 0l10 0l10 0l11 0l10 0l10 0l11 0l10 0l11 0l10 0l10 0l11 0l10 0l11 0l10 0l10 0l11 0l10 0l11 0l10 0l10 0l11 0l10 0l11 0l10 0l10 0l11 0l10 0l10 0l11 0l10 0l11 0l10 0l10 0l11 0l10 0l11 0l10 0l10 0l11 0l10 0l11 0l10 0l10 0l11 0l10 0l11 0l10 0l10 0l11 0l10 0l11 0l10 0l10 0M-1 198l10 0l11 0l10 0l11 0l10 0l10 0l11 0l10 0l11 0l10 0l10 0l11 0l10 0l11 0l10 0l10 0l11 0l10 0l10 0l11 0l10 0l11 0l10 0l10 0l11 0l10 0l11 0l10 0l10 0l11 0l10 0l11 0l10 0l10 0l11 0l10 0l11 0l10 0l10 0l11 0l10 0l10 0l11 0l10 0l11 0l10 0l10 0l11 0l10 0l11 0l10 0l10 0l11 0l10 0l11 0l10 0l10 0l11 0l10 0l11 0l10 0l10 0l11 0l10 0l11 0l10 0l10 0M-1 208l10 0l11 0l10 0l11 0l10 0l10 0l11 0l10 0l11 0l10 0l10 0l11 0l10 0l11 0l10 0l10 0l11 0l10 0l10 0l11 0l10 0l11 0l10 0l10 0l11 0l10 0l11 0l10 0l10 0l11 0l10 0l11 0l10 0l10 0l11 0l10 0l11 0l10 0l10 0l11 0l10 0l10 0l11 0l10 0l11 0l10 0l10 0l11 0l10 0l11 0l10 0l10 0l11 0l10 0l11 0l10 0l10 0l11 0l10 0l11 0l10 0l10 0l11 0l10 0l11 0l10 0l10 0M-1 219l10 0l11 0l10 0l11 0l10 0l10 0l11 0l10 0l11 0l10 0l10 0l11 0l10 0l11 0l10 0l10 0l11 0l10 0l10 0l11 0l10 0l11 0l10 0l10 0l11 0l10 0l11 0l10 0l10 0l11 0l10 0l11 0l10 0l10 0l11 0l10 0l11 0l10 0l10 0l11 0l10 0l10 0l11 0l10 0l11 0l10 0l10 0l11 0l10 0l11 0l10 0l10 0l11 0l10 0l11 0l10 0l10 0l11 0l10 0l11 0l10 0l10 0l11 0l10 0l11 0l10 0l10 0M-1 229l10 0l11 0l10 0l11 0l10 0l10 0l11 0l10 0l11 0l10 0l10 0l11 0l10 0l11 0l10 0l10 0l11 0l10 0l10 0l11 0l10 0l11 0l10 0l10 0l11 0l10 0l11 0l10 0l10 0l11 0l10 0l11 0l10 0l10 0l11 0l10 0l11 0l10 0l10 0l11 0l10 0l10 0l11 0l10 0l11 0l10 0l10 0l11 0l10 0l11 0l10 0l10 0l11 0l10 0l11 0l10 0l10 0l11 0l10 0l11 0l10 0l10 0l11 0l10 0l11 0l10 0l10 0M-1 239l10 0l11 0l10 0l11 0l10 0l10 0l11 0l10 0l11 0l10 0l10 0l11 0l10 0l11 0l10 0l10 0l11 0l10 0l10 0l11 0l10 0l11 0l10 0l10 0l11 0l10 0l11 0l10 0l10 0l11 0l10 0l11 0l10 0l10 0l11 0l10 0l11 0l10 0l10 0l11 0l10 0l10 0l11 0l10 0l11 0l10 0l10 0l11 0l10 0l11 0l10 0l10 0l11 0l10 0l11 0l10 0l10 0l11 0l10 0l11 0l10 0l10 0l11 0l10 0l11 0l10 0l10 0M-1 250l10 0l11 0l10 0l11 0l10 0l10 0l11 0l10 0l11 0l10 0l10 0l11 0l10 0l11 0l10 0l10 0l11 0l10 0l10 0l11 0l10 0l11 0l10 0l10 0l11 0l10 0l11 0l10 0l10 0l11 0l10 0l11 0l10 0l10 0l11 0l10 0l11 0l10 0l10 0l11 0l10 0l10 0l11 0l10 0l11 0l10 0l10 0l11 0l10 0l11 0l10 0l10 0l11 0l10 0l11 0l10 0l10 0l11 0l10 0l11 0l10 0l10 0l11 0l10 0l11 0l10 0l10 0M-1 260l10 0l11 0l10 0l11 0l10 0l10 0l11 0l10 0l11 0l10 0l10 0l11 0l10 0l11 0l10 0l10 0l11 0l10 0l10 0l11 0l10 0l11 0l10 0l10 0l11 0l10 0l11 0l10 0l10 0l11 0l10 0l11 0l10 0l10 0l11 0l10 0l11 0l10 0l10 0l11 0l10 0l10 0l11 0l10 0l11 0l10 0l10 0l11 0l10 0l11 0l10 0l10 0l11 0l10 0l11 0l10 0l10 0l11 0l10 0l11 0l10 0l10 0l11 0l10 0l11 0l10 0l10 0M-1 271l10 0l11 0l10 0l11 0l10 0l10 0l11 0l10 0l11 0l10 0l10 0l11 0l10 0l11 0l10 0l10 0l11 0l10 0l10 0l11 0l10 0l11 0l10 0l10 0l11 0l10 0l11 0l10 0l10 0l11 0l10 0l11 0l10 0l10 0l11 0l10 0l11 0l10 0l10 0l11 0l10 0l10 0l11 0l10 0l11 0l10 0l10 0l11 0l10 0l11 0l10 0l10 0l11 0l10 0l11 0l10 0l10 0l11 0l10 0l11 0l10 0l10 0l11 0l10 0l11 0l10 0l10 0M-1 281l10 0l11 0l10 0l11 0l10 0l10 0l11 0l10 0l11 0l10 0l10 0l11 0l10 0l11 0l10 0l10 0l11 0l10 0l10 0l11 0l10 0l11 0l10 0l10 0l11 0l10 0l11 0l10 0l10 0l11 0l10 0l11 0l10 0l10 0l11 0l10 0l11 0l10 0l10 0l11 0l10 0l10 0l11 0l10 0l11 0l10 0l10 0l11 0l10 0l11 0l10 0l10 0l11 0l10 0l11 0l10 0l10 0l11 0l10 0l11 0l10 0l10 0l11 0l10 0l11 0l10 0l10 0M-1 291l10 0l11 0l10 0l11 0l10 0l10 0l11 0l10 0l11 0l10 0l10 0l11 0l10 0l11 0l10 0l10 0l11 0l10 0l10 0l11 0l10 0l11 0l10 0l10 0l11 0l10 0l11 0l10 0l10 0l11 0l10 0l11 0l10 0l10 0l11 0l10 0l11 0l10 0l10 0l11 0l10 0l10 0l11 0l10 0l11 0l10 0l10 0l11 0l10 0l11 0l10 0l10 0l11 0l10 0l11 0l10 0l10 0l11 0l10 0l11 0l10 0l10 0l11 0l10 0l11 0l10 0l10 0M-1 302l10 0l11 0l10 0l11 0l10 0l10 0l11 0l10 0l11 0l10 0l10 0l11 0l10 0l11 0l10 0l10 0l11 0l10 0l10 0l11 0l10 0l11 0l10 0l10 0l11 0l10 0l11 0l10 0l10 0l11 0l10 0l11 0l10 0l10 0l11 0l10 0l11 0l10 0l10 0l11 0l10 0l10 0l11 0l10 0l11 0l10 0l10 0l11 0l10 0l11 0l10 0l10 0l11 0l10 0l11 0l10 0l10 0l11 0l10 0l11 0l10 0l10 0l11 0l10 0l11 0l10 0l10 0M-1 312l10 0l11 0l10 0l11 0l10 0l10 0l11 0l10 0l11 0l10 0l10 0l11 0l10 0l11 0l10 0l10 0l11 0l10 0l10 0l11 0l10 0l11 0l10 0l10 0l11 0l10 0l11 0l10 0l10 0l11 0l10 0l11 0l10 0l10 0l11 0l10 0l11 0l10 0l10 0l11 0l10 0l10 0l11 0l10 0l11 0l10 0l10 0l11 0l10 0l11 0l10 0l10 0l11 0l10 0l11 0l10 0l10 0l11 0l10 0l11 0l10 0l10 0l11 0l10 0l11 0l10 0l10 0M-1 322l10 0l11 0l10 0l11 0l10 0l10 0l11 0l10 0l11 0l10 0l10 0l11 0l10 0l11 0l10 0l10 0l11 0l10 0l10 0l11 0l10 0l11 0l10 0l10 0l11 0l10 0l11 0l10 0l10 0l11 0l10 0l11 0l10 0l10 0l11 0l10 0l11 0l10 0l10 0l11 0l10 0l10 0l11 0l10 0l11 0l10 0l10 0l11 0l10 0l11 0l10 0l10 0l11 0l10 0l11 0l10 0l10 0l11 0l10 0l11 0l10 0l10 0l11 0l10 0l11 0l10 0l10 0M-1 333l10 0l11 0l10 0l11 0l10 0l10 0l11 0l10 0l11 0l10 0l10 0l11 0l10 0l11 0l10 0l10 0l11 0l10 0l10 0l11 0l10 0l11 0l10 0l10 0l11 0l10 0l11 0l10 0l10 0l11 0l10 0l11 0l10 0l10 0l11 0l10 0l11 0l10 0l10 0l11 0l10 0l10 0l11 0l10 0l11 0l10 0l10 0l11 0l10 0l11 0l10 0l10 0l11 0l10 0l11 0l10 0l10 0l11 0l10 0l11 0l10 0l10 0l11 0l10 0l11 0l10 0l10 0M-1 343l10 0l11 0l10 0l11 0l10 0l10 0l11 0l10 0l11 0l10 0l10 0l11 0l10 0l11 0l10 0l10 0l11 0l10 0l10 0l11 0l10 0l11 0l10 0l10 0l11 0l10 0l11 0l10 0l10 0l11 0l10 0l11 0l10 0l10 0l11 0l10 0l11 0l10 0l10 0l11 0l10 0l10 0l11 0l10 0l11 0l10 0l10 0l11 0l10 0l11 0l10 0l10 0l11 0l10 0l11 0l10 0l10 0l11 0l10 0l11 0l10 0l10 0l11 0l10 0l11 0l10 0l10 0M-1 354l10 0l11 0l10 0l11 0l10 0l10 0l11 0l10 0l11 0l10 0l10 0l11 0l10 0l11 0l10 0l10 0l11 0l10 0l10 0l11 0l10 0l11 0l10 0l10 0l11 0l10 0l11 0l10 0l10 0l11 0l10 0l11 0l10 0l10 0l11 0l10 0l11 0l10 0l10 0l11 0l10 0l10 0l11 0l10 0l11 0l10 0l10 0l11 0l10 0l11 0l10 0l10 0l11 0l10 0l11 0l10 0l10 0l11 0l10 0l11 0l10 0l10 0l11 0l10 0l11 0l10 0l10 0M-1 364l10 0l11 0l10 0l11 0l10 0l10 0l11 0l10 0l11 0l10 0l10 0l11 0l10 0l11 0l10 0l10 0l11 0l10 0l10 0l11 0l10 0l11 0l10 0l10 0l11 0l10 0l11 0l10 0l10 0l11 0l10 0l11 0l10 0l10 0l11 0l10 0l11 0l10 0l10 0l11 0l10 0l10 0l11 0l10 0l11 0l10 0l10 0l11 0l10 0l11 0l10 0l10 0l11 0l10 0l11 0l10 0l10 0l11 0l10 0l11 0l10 0l10 0l11 0l10 0l11 0l10 0l10 0M-1 374l10 0l11 0l10 0l11 0l10 0l10 0l11 0l10 0l11 0l10 0l10 0l11 0l10 0l11 0l10 0l10 0l11 0l10 0l10 0l11 0l10 0l11 0l10 0l10 0l11 0l10 0l11 0l10 0l10 0l11 0l10 0l11 0l10 0l10 0l11 0l10 0l11 0l10 0l10 0l11 0l10 0l10 0l11 0l10 0l11 0l10 0l10 0l11 0l10 0l11 0l10 0l10 0l11 0l10 0l11 0l10 0l10 0l11 0l10 0l11 0l10 0l10 0l11 0l10 0l11 0l10 0l10 0M-1 385l10 0l11 0l10 0l11 0l10 0l10 0l11 0l10 0l11 0l10 0l10 0l11 0l10 0l11 0l10 0l10 0l11 0l10 0l10 0l11 0l10 0l11 0l10 0l10 0l11 0l10 0l11 0l10 0l10 0l11 0l10 0l11 0l10 0l10 0l11 0l10 0l11 0l10 0l10 0l11 0l10 0l10 0l11 0l10 0l11 0l10 0l10 0l11 0l10 0l11 0l10 0l10 0l11 0l10 0l11 0l10 0l10 0l11 0l10 0l11 0l10 0l10 0l11 0l10 0l11 0l10 0l10 0M-1 395l10 0l11 0l10 0l11 0l10 0l10 0l11 0l10 0l11 0l10 0l10 0l11 0l10 0l11 0l10 0l10 0l11 0l10 0l10 0l11 0l10 0l11 0l10 0l10 0l11 0l10 0l11 0l10 0l10 0l11 0l10 0l11 0l10 0l10 0l11 0l10 0l11 0l10 0l10 0l11 0l10 0l10 0l11 0l10 0l11 0l10 0l10 0l11 0l10 0l11 0l10 0l10 0l11 0l10 0l11 0l10 0l10 0l11 0l10 0l11 0l10 0l10 0l11 0l10 0l11 0l10 0l10 0M-1 406l10 0l11 0l10 0l11 0l10 0l10 0l11 0l10 0l11 0l10 0l10 0l11 0l10 0l11 0l10 0l10 0l11 0l10 0l10 0l11 0l10 0l11 0l10 0l10 0l11 0l10 0l11 0l10 0l10 0l11 0l10 0l11 0l10 0l10 0l11 0l10 0l11 0l10 0l10 0l11 0l10 0l10 0l11 0l10 0l11 0l10 0l10 0l11 0l10 0l11 0l10 0l10 0l11 0l10 0l11 0l10 0l10 0l11 0l10 0l11 0l10 0l10 0l11 0l10 0l11 0l10 0l10 0M-1 416l10 0l11 0l10 0l11 0l10 0l10 0l11 0l10 0l11 0l10 0l10 0l11 0l10 0l11 0l10 0l10 0l11 0l10 0l10 0l11 0l10 0l11 0l10 0l10 0l11 0l10 0l11 0l10 0l10 0l11 0l10 0l11 0l10 0l10 0l11 0l10 0l11 0l10 0l10 0l11 0l10 0l10 0l11 0l10 0l11 0l10 0l10 0l11 0l10 0l11 0l10 0l10 0l11 0l10 0l11 0l10 0l10 0l11 0l10 0l11 0l10 0l10 0l11 0l10 0l11 0l10 0l10 0M-1 426l10 0l11 0l10 0l11 0l10 0l10 0l11 0l10 0l11 0l10 0l10 0l11 0l10 0l11 0l10 0l10 0l11 0l10 0l10 0l11 0l10 0l11 0l10 0l10 0l11 0l10 0l11 0l10 0l10 0l11 0l10 0l11 0l10 0l10 0l11 0l10 0l11 0l10 0l10 0l11 0l10 0l10 0l11 0l10 0l11 0l10 0l10 0l11 0l10 0l11 0l10 0l10 0l11 0l10 0l11 0l10 0l10 0l11 0l10 0l11 0l10 0l10 0l11 0l10 0l11 0l10 0l10 0M-1 437l10 0l11 0l10 0l11 0l10 0l10 0l11 0l10 0l11 0l10 0l10 0l11 0l10 0l11 0l10 0l10 0l11 0l10 0l10 0l11 0l10 0l11 0l10 0l10 0l11 0l10 0l11 0l10 0l10 0l11 0l10 0l11 0l10 0l10 0l11 0l10 0l11 0l10 0l10 0l11 0l10 0l10 0l11 0l10 0l11 0l10 0l10 0l11 0l10 0l11 0l10 0l10 0l11 0l10 0l11 0l10 0l10 0l11 0l10 0l11 0l10 0l10 0l11 0l10 0l11 0l10 0l10 0M-1 447l10 0l11 0l10 0l11 0l10 0l10 0l11 0l10 0l11 0l10 0l10 0l11 0l10 0l11 0l10 0l10 0l11 0l10 0l10 0l11 0l10 0l11 0l10 0l10 0l11 0l10 0l11 0l10 0l10 0l11 0l10 0l11 0l10 0l10 0l11 0l10 0l11 0l10 0l10 0l11 0l10 0l10 0l11 0l10 0l11 0l10 0l10 0l11 0l10 0l11 0l10 0l10 0l11 0l10 0l11 0l10 0l10 0l11 0l10 0l11 0l10 0l10 0l11 0l10 0l11 0l10 0l10 0M-1 458l10 0l11 0l10 0l11 0l10 0l10 0l11 0l10 0l11 0l10 0l10 0l11 0l10 0l11 0l10 0l10 0l11 0l10 0l10 0l11 0l10 0l11 0l10 0l10 0l11 0l10 0l11 0l10 0l10 0l11 0l10 0l11 0l10 0l10 0l11 0l10 0l11 0l10 0l10 0l11 0l10 0l10 0l11 0l10 0l11 0l10 0l10 0l11 0l10 0l11 0l10 0l10 0l11 0l10 0l11 0l10 0l10 0l11 0l10 0l11 0l10 0l10 0l11 0l10 0l11 0l10 0l10 0M-1 468l10 0l11 0l10 0l11 0l10 0l10 0l11 0l10 0l11 0l10 0l10 0l11 0l10 0l11 0l10 0l10 0l11 0l10 0l10 0l11 0l10 0l11 0l10 0l10 0l11 0l10 0l11 0l10 0l10 0l11 0l10 0l11 0l10 0l10 0l11 0l10 0l11 0l10 0l10 0l11 0l10 0l10 0l11 0l10 0l11 0l10 0l10 0l11 0l10 0l11 0l10 0l10 0l11 0l10 0l11 0l10 0l10 0l11 0l10 0l11 0l10 0l10 0l11 0l10 0l11 0l10 0l10 0M-1 478l10 0l11 0l10 0l11 0l10 0l10 0l11 0l10 0l11 0l10 0l10 0l11 0l10 0l11 0l10 0l10 0l11 0l10 0l10 0l11 0l10 0l11 0l10 0l10 0l11 0l10 0l11 0l10 0l10 0l11 0l10 0l11 0l10 0l10 0l11 0l10 0l11 0l10 0l10 0l11 0l10 0l10 0l11 0l10 0l11 0l10 0l10 0l11 0l10 0l11 0l10 0l10 0l11 0l10 0l11 0l10 0l10 0l11 0l10 0l11 0l10 0l10 0l11 0l10 0l11 0l10 0l10 0M-1 489l10 0l11 0l10 0l11 0l10 0l10 0l11 0l10 0l11 0l10 0l10 0l11 0l10 0l11 0l10 0l10 0l11 0l10 0l10 0l11 0l10 0l11 0l10 0l10 0l11 0l10 0l11 0l10 0l10 0l11 0l10 0l11 0l10 0l10 0l11 0l10 0l11 0l10 0l10 0l11 0l10 0l10 0l11 0l10 0l11 0l10 0l10 0l11 0l10 0l11 0l10 0l10 0l11 0l10 0l11 0l10 0l10 0l11 0l10 0l11 0l10 0l10 0l11 0l10 0l11 0l10 0l10 0M-1 499l10 0l11 0l10 0l11 0l10 0l10 0l11 0l10 0l11 0l10 0l10 0l11 0l10 0l11 0l10 0l10 0l11 0l10 0l10 0l11 0l10 0l11 0l10 0l10 0l11 0l10 0l11 0l10 0l10 0l11 0l10 0l11 0l10 0l10 0l11 0l10 0l11 0l10 0l10 0l11 0l10 0l10 0l11 0l10 0l11 0l10 0l10 0l11 0l10 0l11 0l10 0l10 0l11 0l10 0l11 0l10 0l10 0l11 0l10 0l11 0l10 0l10 0l11 0l10 0l11 0l10 0l10 0M-1 510l10 0l11 0l10 0l11 0l10 0l10 0l11 0l10 0l11 0l10 0l10 0l11 0l10 0l11 0l10 0l10 0l11 0l10 0l10 0l11 0l10 0l11 0l10 0l10 0l11 0l10 0l11 0l10 0l10 0l11 0l10 0l11 0l10 0l10 0l11 0l10 0l11 0l10 0l10 0l11 0l10 0l10 0l11 0l10 0l11 0l10 0l10 0l11 0l10 0l11 0l10 0l10 0l11 0l10 0l11 0l10 0l10 0l11 0l10 0l11 0l10 0l10 0l11 0l10 0l11 0l10 0l10 0M-1 520l10 0l11 0l10 0l11 0l10 0l10 0l11 0l10 0l11 0l10 0l10 0l11 0l10 0l11 0l10 0l10 0l11 0l10 0l10 0l11 0l10 0l11 0l10 0l10 0l11 0l10 0l11 0l10 0l10 0l11 0l10 0l11 0l10 0l10 0l11 0l10 0l11 0l10 0l10 0l11 0l10 0l10 0l11 0l10 0l11 0l10 0l10 0l11 0l10 0l11 0l10 0l10 0l11 0l10 0l11 0l10 0l10 0l11 0l10 0l11 0l10 0l10 0l11 0l10 0l11 0l10 0l10 0M-1 530l10 0l11 0l10 0l11 0l10 0l10 0l11 0l10 0l11 0l10 0l10 0l11 0l10 0l11 0l10 0l10 0l11 0l10 0l10 0l11 0l10 0l11 0l10 0l10 0l11 0l10 0l11 0l10 0l10 0l11 0l10 0l11 0l10 0l10 0l11 0l10 0l11 0l10 0l10 0l11 0l10 0l10 0l11 0l10 0l11 0l10 0l10 0l11 0l10 0l11 0l10 0l10 0l11 0l10 0l11 0l10 0l10 0l11 0l10 0l11 0l10 0l10 0l11 0l10 0l11 0l10 0l10 0M-1 541l10 0l11 0l10 0l11 0l10 0l10 0l11 0l10 0l11 0l10 0l10 0l11 0l10 0l11 0l10 0l10 0l11 0l10 0l10 0l11 0l10 0l11 0l10 0l10 0l11 0l10 0l11 0l10 0l10 0l11 0l10 0l11 0l10 0l10 0l11 0l10 0l11 0l10 0l10 0l11 0l10 0l10 0l11 0l10 0l11 0l10 0l10 0l11 0l10 0l11 0l10 0l10 0l11 0l10 0l11 0l10 0l10 0l11 0l10 0l11 0l10 0l10 0l11 0l10 0l11 0l10 0l10 0M-1 551l10 0l11 0l10 0l11 0l10 0l10 0l11 0l10 0l11 0l10 0l10 0l11 0l10 0l11 0l10 0l10 0l11 0l10 0l10 0l11 0l10 0l11 0l10 0l10 0l11 0l10 0l11 0l10 0l10 0l11 0l10 0l11 0l10 0l10 0l11 0l10 0l11 0l10 0l10 0l11 0l10 0l10 0l11 0l10 0l11 0l10 0l10 0l11 0l10 0l11 0l10 0l10 0l11 0l10 0l11 0l10 0l10 0l11 0l10 0l11 0l10 0l10 0l11 0l10 0l11 0l10 0l10 0M-1 562l10 0l11 0l10 0l11 0l10 0l10 0l11 0l10 0l11 0l10 0l10 0l11 0l10 0l11 0l10 0l10 0l11 0l10 0l10 0l11 0l10 0l11 0l10 0l10 0l11 0l10 0l11 0l10 0l10 0l11 0l10 0l11 0l10 0l10 0l11 0l10 0l11 0l10 0l10 0l11 0l10 0l10 0l11 0l10 0l11 0l10 0l10 0l11 0l10 0l11 0l10 0l10 0l11 0l10 0l11 0l10 0l10 0l11 0l10 0l11 0l10 0l10 0l11 0l10 0l11 0l10 0l10 0M-1 572l10 0l11 0l10 0l11 0l10 0l10 0l11 0l10 0l11 0l10 0l10 0l11 0l10 0l11 0l10 0l10 0l11 0l10 0l10 0l11 0l10 0l11 0l10 0l10 0l11 0l10 0l11 0l10 0l10 0l11 0l10 0l11 0l10 0l10 0l11 0l10 0l11 0l10 0l10 0l11 0l10 0l10 0l11 0l10 0l11 0l10 0l10 0l11 0l10 0l11 0l10 0l10 0l11 0l10 0l11 0l10 0l10 0l11 0l10 0l11 0l10 0l10 0l11 0l10 0l11 0l10 0l10 0M-1 582l10 0l11 0l10 0l11 0l10 0l10 0l11 0l10 0l11 0l10 0l10 0l11 0l10 0l11 0l10 0l10 0l11 0l10 0l10 0l11 0l10 0l11 0l10 0l10 0l11 0l10 0l11 0l10 0l10 0l11 0l10 0l11 0l10 0l10 0l11 0l10 0l11 0l10 0l10 0l11 0l10 0l10 0l11 0l10 0l11 0l10 0l10 0l11 0l10 0l11 0l10 0l10 0l11 0l10 0l11 0l10 0l10 0l11 0l10 0l11 0l10 0l10 0l11 0l10 0l11 0l10 0l10 0M-1 593l10 0l11 0l10 0l11 0l10 0l10 0l11 0l10 0l11 0l10 0l10 0l11 0l10 0l11 0l10 0l10 0l11 0l10 0l10 0l11 0l10 0l11 0l10 0l10 0l11 0l10 0l11 0l10 0l10 0l11 0l10 0l11 0l10 0l10 0l11 0l10 0l11 0l10 0l10 0l11 0l10 0l10 0l11 0l10 0l11 0l10 0l10 0l11 0l10 0l11 0l10 0l10 0l11 0l10 0l11 0l10 0l10 0l11 0l10 0l11 0l10 0l10 0l11 0l10 0l11 0l10 0l10 0M-1 603l10 0l11 0l10 0l11 0l10 0l10 0l11 0l10 0l11 0l10 0l10 0l11 0l10 0l11 0l10 0l10 0l11 0l10 0l10 0l11 0l10 0l11 0l10 0l10 0l11 0l10 0l11 0l10 0l10 0l11 0l10 0l11 0l10 0l10 0l11 0l10 0l11 0l10 0l10 0l11 0l10 0l10 0l11 0l10 0l11 0l10 0l10 0l11 0l10 0l11 0l10 0l10 0l11 0l10 0l11 0l10 0l10 0l11 0l10 0l11 0l10 0l10 0l11 0l10 0l11 0l10 0l10 0M-1 614l10 0l11 0l10 0l11 0l10 0l10 0l11 0l10 0l11 0l10 0l10 0l11 0l10 0l11 0l10 0l10 0l11 0l10 0l10 0l11 0l10 0l11 0l10 0l10 0l11 0l10 0l11 0l10 0l10 0l11 0l10 0l11 0l10 0l10 0l11 0l10 0l11 0l10 0l10 0l11 0l10 0l10 0l11 0l10 0l11 0l10 0l10 0l11 0l10 0l11 0l10 0l10 0l11 0l10 0l11 0l10 0l10 0l11 0l10 0l11 0l10 0l10 0l11 0l10 0l11 0l10 0l10 0M-1 624l10 0l11 0l10 0l11 0l10 0l10 0l11 0l10 0l11 0l10 0l10 0l11 0l10 0l11 0l10 0l10 0l11 0l10 0l10 0l11 0l10 0l11 0l10 0l10 0l11 0l10 0l11 0l10 0l10 0l11 0l10 0l11 0l10 0l10 0l11 0l10 0l11 0l10 0l10 0l11 0l10 0l10 0l11 0l10 0l11 0l10 0l10 0l11 0l10 0l11 0l10 0l10 0l11 0l10 0l11 0l10 0l10 0l11 0l10 0l11 0l10 0l10 0l11 0l10 0l11 0l10 0l10 0M-1 634l10 0l11 0l10 0l11 0l10 0l10 0l11 0l10 0l11 0l10 0l10 0l11 0l10 0l11 0l10 0l10 0l11 0l10 0l10 0l11 0l10 0l11 0l10 0l10 0l11 0l10 0l11 0l10 0l10 0l11 0l10 0l11 0l10 0l10 0l11 0l10 0l11 0l10 0l10 0l11 0l10 0l10 0l11 0l10 0l11 0l10 0l10 0l11 0l10 0l11 0l10 0l10 0l11 0l10 0l11 0l10 0l10 0l11 0l10 0l11 0l10 0l10 0l11 0l10 0l11 0l10 0l10 0M-1 645l10 0l11 0l10 0l11 0l10 0l10 0l11 0l10 0l11 0l10 0l10 0l11 0l10 0l11 0l10 0l10 0l11 0l10 0l10 0l11 0l10 0l11 0l10 0l10 0l11 0l10 0l11 0l10 0l10 0l11 0l10 0l11 0l10 0l10 0l11 0l10 0l11 0l10 0l10 0l11 0l10 0l10 0l11 0l10 0l11 0l10 0l10 0l11 0l10 0l11 0l10 0l10 0l11 0l10 0l11 0l10 0l10 0l11 0l10 0l11 0l10 0l10 0l11 0l10 0l11 0l10 0l10 0M-1 655l10 0l11 0l10 0l11 0l10 0l10 0l11 0l10 0l11 0l10 0l10 0l11 0l10 0l11 0l10 0l10 0l11 0l10 0l10 0l11 0l10 0l11 0l10 0l10 0l11 0l10 0l11 0l10 0l10 0l11 0l10 0l11 0l10 0l10 0l11 0l10 0l11 0l10 0l10 0l11 0l10 0l10 0l11 0l10 0l11 0l10 0l10 0l11 0l10 0l11 0l10 0l10 0l11 0l10 0l11 0l10 0l10 0l11 0l10 0l11 0l10 0l10 0l11 0l10 0l11 0l10 0l10 0M-1 666l10 0l11 0l10 0l11 0l10 0l10 0l11 0l10 0l11 0l10 0l10 0l11 0l10 0l11 0l10 0l10 0l11 0l10 0l10 0l11 0l10 0l11 0l10 0l10 0l11 0l10 0l11 0l10 0l10 0l11 0l10 0l11 0l10 0l10 0l11 0l10 0l11 0l10 0l10 0l11 0l10 0l10 0l11 0l10 0l11 0l10 0l10 0l11 0l10 0l11 0l10 0l10 0l11 0l10 0l11 0l10 0l10 0l11 0l10 0l11 0l10 0l10 0l11 0l10 0l11 0l10 0l10 0M-1 676l10 0l11 0l10 0l11 0l10 0l10 0l11 0l10 0l11 0l10 0l10 0l11 0l10 0l11 0l10 0l10 0l11 0l10 0l10 0l11 0l10 0l11 0l10 0l10 0l11 0l10 0l11 0l10 0l10 0l11 0l10 0l11 0l10 0l10 0l11 0l10 0l11 0l10 0l10 0l11 0l10 0l10 0l11 0l10 0l11 0l10 0l10 0l11 0l10 0l11 0l10 0l10 0l11 0l10 0l11 0l10 0l10 0l11 0l10 0l11 0l10 0l10 0l11 0l10 0l11 0l10 0l10 0M-1 686l10 0l11 0l10 0l11 0l10 0l10 0l11 0l10 0l11 0l10 0l10 0l11 0l10 0l11 0l10 0l10 0l11 0l10 0l10 0l11 0l10 0l11 0l10 0l10 0l11 0l10 0l11 0l10 0l10 0l11 0l10 0l11 0l10 0l10 0l11 0l10 0l11 0l10 0l10 0l11 0l10 0l10 0l11 0l10 0l11 0l10 0l10 0l11 0l10 0l11 0l10 0l10 0l11 0l10 0l11 0l10 0l10 0l11 0l10 0l11 0l10 0l10 0l11 0l10 0l11 0l10 0l10 0M-1 697l10 0l11 0l10 0l11 0l10 0l10 0l11 0l10 0l11 0l10 0l10 0l11 0l10 0l11 0l10 0l10 0l11 0l10 0l10 0l11 0l10 0l11 0l10 0l10 0l11 0l10 0l11 0l10 0l10 0l11 0l10 0l11 0l10 0l10 0l11 0l10 0l11 0l10 0l10 0l11 0l10 0l10 0l11 0l10 0l11 0l10 0l10 0l11 0l10 0l11 0l10 0l10 0l11 0l10 0l11 0l10 0l10 0l11 0l10 0l11 0l10 0l10 0l11 0l10 0l11 0l10 0l10 0M-1 707l10 0l11 0l10 0l11 0l10 0l10 0l11 0l10 0l11 0l10 0l10 0l11 0l10 0l11 0l10 0l10 0l11 0l10 0l10 0l11 0l10 0l11 0l10 0l10 0l11 0l10 0l11 0l10 0l10 0l11 0l10 0l11 0l10 0l10 0l11 0l10 0l11 0l10 0l10 0l11 0l10 0l10 0l11 0l10 0l11 0l10 0l10 0l11 0l10 0l11 0l10 0l10 0l11 0l10 0l11 0l10 0l10 0l11 0l10 0l11 0l10 0l10 0l11 0l10 0l11 0l10 0l10 0M-1 718l10 0l11 0l10 0l11 0l10 0l10 0l11 0l10 0l11 0l10 0l10 0l11 0l10 0l11 0l10 0l10 0l11 0l10 0l10 0l11 0l10 0l11 0l10 0l10 0l11 0l10 0l11 0l10 0l10 0l11 0l10 0l11 0l10 0l10 0l11 0l10 0l11 0l10 0l10 0l11 0l10 0l10 0l11 0l10 0l11 0l10 0l10 0l11 0l10 0l11 0l10 0l10 0l11 0l10 0l11 0l10 0l10 0l11 0l10 0l11 0l10 0l10 0l11 0l10 0l11 0l10 0l10 0M-1 728l10 0l11 0l10 0l11 0l10 0l10 0l11 0l10 0l11 0l10 0l10 0l11 0l10 0l11 0l10 0l10 0l11 0l10 0l10 0l11 0l10 0l11 0l10 0l10 0l11 0l10 0l11 0l10 0l10 0l11 0l10 0l11 0l10 0l10 0l11 0l10 0l11 0l10 0l10 0l11 0l10 0l10 0l11 0l10 0l11 0l10 0l10 0l11 0l10 0l11 0l10 0l10 0l11 0l10 0l11 0l10 0l10 0l11 0l10 0l11 0l10 0l10 0l11 0l10 0l11 0l10 0l10 0" fill="none" stroke="none" marker-start="url(#gdw)" marker-mid="url(#gdw)" marker-end="url(#gdw)"/></svg>
<div class="t" style="left:382.5px;top:165.14px;font-size:40px;line-height:40px;color:#000;font-weight:bold;letter-spacing:-0.152px;">Titel durch Klicken hinzufügen</div>
<svg class="a" style="left:289px;top:178px;overflow:hidden;" width="697" height="60" viewBox="0 0 697 60"><path d="M95.5 0v55.5h602" fill="none" stroke="#bfb49a" stroke-width="1" stroke-dasharray="4 2"/></svg>
<svg class="a" style="left:289px;top:178px;overflow:hidden;" width="697" height="731" viewBox="0 0 697 731"><g fill="none" stroke="#d3eaf8" stroke-width="5"><path d="M82 109.5h620M82 109.5v507.5M82 616.5h620"/></g><g fill="none" stroke="#a8c8e0" stroke-width="1" stroke-dasharray="6 4"><path d="M82 109.5h620M82 109.5v507.5M82 616.5h620"/></g></svg>
<div class="a" style="left:367px;top:283px;width:9px;height:9px;background:#6a98cc;border:1.5px solid #23508a;box-shadow:inset 0 0 0 1px #a8c8f0;"></div>
<div class="a" style="left:876px;top:283px;width:9px;height:9px;background:#6a98cc;border:1.5px solid #23508a;box-shadow:inset 0 0 0 1px #a8c8f0;"></div>
<div class="a" style="left:367px;top:537px;width:9px;height:9px;background:#6a98cc;border:1.5px solid #23508a;box-shadow:inset 0 0 0 1px #a8c8f0;"></div>
<div class="a" style="left:367px;top:790px;width:9px;height:9px;background:#6a98cc;border:1.5px solid #23508a;box-shadow:inset 0 0 0 1px #a8c8f0;"></div>
<div class="a" style="left:876px;top:790px;width:9px;height:9px;background:#6a98cc;border:1.5px solid #23508a;box-shadow:inset 0 0 0 1px #a8c8f0;"></div>
<div class="a" style="left:385.8px;top:300.6px;width:9.5px;height:9.5px;background:#000;border-radius:50%;"></div>
<div class="t" style="left:421px;top:289.91px;font-size:32px;line-height:32px;color:#000;letter-spacing:0.168px;">Text durch Klicken hinzufügen</div>
<div class="a" style="left:392px;top:830px;width:594px;height:1px;background:#111;"></div>
<div class="t" style="left:392px;top:855.48px;font-size:14.2px;line-height:14.2px;color:#222;letter-spacing:0.232px;">hujgjkgjkghjkjhlkhjlkhjkhjkjh</div>
<svg class="a" style="left:392px;top:868px;overflow:hidden;" width="177" height="5" viewBox="0 0 177 5"><path d="M0 2q1.5 -2 3 0t3 0q1.5 -2 3 0t3 0q1.5 -2 3 0t3 0q1.5 -2 3 0t3 0q1.5 -2 3 0t3 0q1.5 -2 3 0t3 0q1.5 -2 3 0t3 0q1.5 -2 3 0t3 0q1.5 -2 3 0t3 0q1.5 -2 3 0t3 0q1.5 -2 3 0t3 0q1.5 -2 3 0t3 0q1.5 -2 3 0t3 0q1.5 -2 3 0t3 0q1.5 -2 3 0t3 0q1.5 -2 3 0t3 0q1.5 -2 3 0t3 0q1.5 -2 3 0t3 0q1.5 -2 3 0t3 0q1.5 -2 3 0t3 0q1.5 -2 3 0t3 0q1.5 -2 3 0t3 0q1.5 -2 3 0t3 0q1.5 -2 3 0t3 0q1.5 -2 3 0t3 0q1.5 -2 3 0t3 0q1.5 -2 3 0t3 0q1.5 -2 3 0t3 0q1.5 -2 3 0t3 0q1.5 -2 3 0t3 0" fill="none" stroke="#e01010" stroke-width="1"/></svg>
<div class="a" style="left:842px;top:502px;width:76px;height:77px;background:rgba(112,112,112,0.92);border-radius:8px;box-shadow:0 1px 3px rgba(0,0,0,0.4);"></div>
<div class="a" style="left:879px;top:502px;width:1px;height:77px;background:#9a9a9a;"></div>
<div class="a" style="left:842px;top:540px;width:76px;height:1px;background:#9a9a9a;"></div>
<svg class="a" style="left:847px;top:508px;" width="66" height="66" viewBox="0 0 66 66"><g fill="none" stroke="#c8c8c8" stroke-width="1.6"><rect x="2" y="2" width="25" height="25"/><path d="M2 8h25M2 14h25M2 20h25M10 8v19M18 8v19"/><path d="M39 2v25h26"/><rect x="2" y="39" width="25" height="25"/><rect x="39" y="39" width="25" height="25"/><path d="M44 39v25M59 39v25M44 51.5h15"/></g><g fill="#7a7a7a"><rect x="40" y="41" width="2.5" height="2.5"/><rect x="60.5" y="41" width="2.5" height="2.5"/><rect x="40" y="45" width="2.5" height="2.5"/><rect x="60.5" y="45" width="2.5" height="2.5"/><rect x="40" y="49" width="2.5" height="2.5"/><rect x="60.5" y="49" width="2.5" height="2.5"/><rect x="40" y="53" width="2.5" height="2.5"/><rect x="60.5" y="53" width="2.5" height="2.5"/><rect x="40" y="57" width="2.5" height="2.5"/><rect x="60.5" y="57" width="2.5" height="2.5"/><rect x="40" y="61" width="2.5" height="2.5"/><rect x="60.5" y="61" width="2.5" height="2.5"/></g><g fill="#c8c8c8"><rect x="42" y="14" width="4.5" height="11"/><rect x="48" y="8" width="4.5" height="17"/><rect x="54" y="2" width="4.5" height="23"/><rect x="60" y="12" width="4.5" height="13"/><rect x="3" y="58" width="23" height="5"/></g></svg>
</div>
<div class="a" style="left:985px;top:152px;width:18px;height:772px;background:#d6d2d0;"></div>
<svg class="a" style="left:988px;top:156px;" width="11" height="8" viewBox="0 0 11 8"><path d="M1 6l4.5-4.5 4.5 4.5" fill="none" stroke="#222" stroke-width="1.6"/></svg>
<div class="a" style="left:987px;top:168px;width:13px;height:710px;background:#b3aba9;border-radius:4px;box-shadow:inset 1px 0 1px rgba(0,0,0,0.25),inset -1px 0 1px rgba(0,0,0,0.2);"></div>
<div class="a" style="left:989px;top:405px;width:9px;height:291px;background:#cecac8;border:1px solid #f2f0ee;border-radius:3px;box-shadow:0 0 0 1px #7e7a78,0 1px 1px 1px rgba(0,0,0,0.2);"></div>
<svg class="a" style="left:988px;top:882px;" width="11" height="8" viewBox="0 0 11 8"><path d="M1 6l4.5-4.5 4.5 4.5" fill="none" stroke="#222" stroke-width="1.6"/></svg>
<svg class="a" style="left:988px;top:894px;" width="11" height="8" viewBox="0 0 11 8"><path d="M1 1.5l4.5 4.5 4.5-4.5" fill="none" stroke="#222" stroke-width="1.6"/></svg>
<div class="a" style="left:212px;top:908px;width:775px;height:16px;background:#d6d2d0;"></div>
<svg class="a" style="left:215px;top:911px;" width="8" height="11" viewBox="0 0 8 11"><path d="M6 1l-4.5 4.5 4.5 4.5" fill="none" stroke="#222" stroke-width="1.6"/></svg>
<div class="a" style="left:227px;top:909px;width:728px;height:14px;background:#b3aba9;border-radius:4px;box-shadow:inset 0 1px 1px rgba(0,0,0,0.35);"></div>
<div class="a" style="left:227px;top:923px;width:728px;height:1px;background:#eceae8;"></div>
<div class="a" style="left:462px;top:911px;width:150px;height:11px;background:linear-gradient(#dcd8d6,#cdc9c7);border:1px solid #f4f2f0;border-radius:3px;box-shadow:0 0 0 1px #7a7674;"></div>
<svg class="a" style="left:958px;top:911px;" width="8" height="11" viewBox="0 0 8 11"><path d="M6 1l-4.5 4.5 4.5 4.5" fill="none" stroke="#222" stroke-width="1.6"/></svg>
<svg class="a" style="left:972px;top:911px;" width="8" height="11" viewBox="0 0 8 11"><path d="M1.5 1l4.5 4.5-4.5 4.5" fill="none" stroke="#222" stroke-width="1.6"/></svg>
<div class="a" style="left:1002px;top:124px;width:1px;height:800px;background:#a4a09e;"></div>
<div class="a" style="left:1003px;top:124px;width:1px;height:800px;background:#fff;"></div>
<div class="a" style="left:1007px;top:124px;width:1px;height:800px;background:#a4a09e;"></div>
<div class="a" style="left:1008px;top:124px;width:1px;height:800px;background:#fff;"></div>
<div class="a" style="left:1002px;top:124px;width:278px;height:1px;background:#a4a09e;"></div>
<div class="a" style="left:1003px;top:125px;width:277px;height:1px;background:#fff;"></div>
<div class="a" style="left:1002px;top:923px;width:278px;height:1px;background:#a4a09e;"></div>
<div class="a" style="left:1002px;top:924px;width:278px;height:1px;background:#fff;"></div>
<div class="a" style="left:1011px;top:128px;width:229px;height:792px;border:1px solid #c6c2c0;background:#d6d2d0;"></div>
<div class="t" style="left:1022.5px;top:138.01px;font-size:11.8px;line-height:11.8px;color:#0e0a0a;font-weight:bold;letter-spacing:-0.166px;-webkit-text-stroke:0.3px #0e0a0a;">Eigenschaften</div>
<svg class="a" style="left:1225px;top:137px;" width="11" height="11" viewBox="0 0 11 11"><path d="M1.5 1.5l8 8M9.5 1.5l-8 8" stroke="#3a3636" stroke-width="2.2"/></svg>
<div class="a" style="left:1012px;top:155px;width:227px;height:22px;background:linear-gradient(#c8c4c2,#d6d2d0);"></div>
<svg class="a" style="left:1017px;top:164px;" width="9" height="9" viewBox="0 0 9 9"><rect x="0.5" y="0.5" width="8" height="8" fill="#fff" stroke="#56606a"/><path d="M2 4.5h5" stroke="#111" stroke-width="1.2"/></svg>
<div class="t" style="left:1031.5px;top:164.71px;font-size:11.8px;line-height:11.8px;color:#181414;font-weight:bold;letter-spacing:-0.370px;-webkit-text-stroke:0.3px #181414;">Zeichen</div>
<svg class="a" style="left:1223px;top:163px;" width="12" height="11" viewBox="0 0 12 11"><rect x="0.5" y="0.5" width="11" height="10" fill="#fff" stroke="#3a6ab8"/><rect x="0.5" y="0.5" width="11" height="2.5" fill="#3a6ab8"/><path d="M3 7h1M6 7h1M9 7h1" stroke="#234" stroke-width="1"/></svg>
<div class="a" style="left:1019px;top:190px;width:152px;height:23px;background:#fff;border:1px solid #b8b4b2;border-radius:4px;box-shadow:0 1px 1px rgba(0,0,0,0.1);"></div>
<svg class="a" style="left:1154px;top:198px;" width="11" height="7" viewBox="0 0 11 7"><path d="M1 1l4.5 4.5 4.5-4.5" fill="none" stroke="#222" stroke-width="1.6"/></svg>
<div class="t" style="left:1026px;top:197.01px;font-size:11.8px;line-height:11.8px;color:#231f1f;font-style:italic;letter-spacing:0.079px;">Arial</div>
<div class="a" style="left:1180px;top:190px;width:53px;height:23px;background:#fff;border:1px solid #b8b4b2;border-radius:4px;box-shadow:0 1px 1px rgba(0,0,0,0.1);"></div>
<svg class="a" style="left:1216px;top:198px;" width="11" height="7" viewBox="0 0 11 7"><path d="M1 1l4.5 4.5 4.5-4.5" fill="none" stroke="#222" stroke-width="1.6"/></svg>
<div class="t" style="left:1187px;top:197.01px;font-size:11.8px;line-height:11.8px;color:#231f1f;">6</div>
<svg class="a" style="left:1022px;top:230px;" width="20" height="22" viewBox="0 0 20 22"><text x="1" y="17" font-family="Liberation Serif" font-size="19" font-weight="bold" fill="#fff" stroke="#666464" stroke-width="1.15" >B</text></svg>
<svg class="a" style="left:1049px;top:230px;" width="12" height="22" viewBox="0 0 12 22"><text x="1" y="17" font-family="Liberation Serif" font-size="19" font-style="italic" font-weight="bold" fill="#fff" stroke="#666464" stroke-width="1.15">i</text></svg>
<svg class="a" style="left:1071px;top:230px;" width="18" height="22" viewBox="0 0 18 22"><text x="1" y="15" font-family="Liberation Sans" font-size="17" fill="#fff" stroke="#666464" stroke-width="1.15">U</text><rect x="1.5" y="17" width="13" height="2" fill="#fff" stroke="#5a5656" stroke-width="0.8"/></svg>
<svg class="a" style="left:1094px;top:238px;" width="7" height="4" viewBox="0 0 7 4"><path d="M0 0h7l-3.5 4z" fill="#111"/></svg>
<svg class="a" style="left:1108px;top:230px;" width="18" height="22" viewBox="0 0 18 22"><text x="1" y="17" font-family="Liberation Serif" font-size="19" font-weight="bold" fill="#fff" stroke="#666464" stroke-width="1.15">S</text><rect x="1" y="9" width="14" height="2" fill="#fff" stroke="#626060" stroke-width="0.9"/></svg>
<svg class="a" style="left:1133px;top:232px;" width="17" height="17" viewBox="0 0 17 17"><rect x="1" y="1" width="15" height="15" rx="2.5" fill="#f4f0e0" stroke="#f2b418" stroke-width="1.8"/><text x="4" y="13" font-family="Liberation Serif" font-size="12" font-weight="bold" fill="#fff" stroke="#5a5656" stroke-width="0.7">S</text></svg>
<svg class="a" style="left:1187px;top:230px;" width="18" height="19" viewBox="0 0 18 19"><text x="0" y="16" font-family="Liberation Sans" font-size="19" fill="#fff" stroke="#666464" stroke-width="1.15">a</text><path d="M8 10l7-7M10 3h5v5" fill="none" stroke="#2a8a1a" stroke-width="2.4"/></svg>
<svg class="a" style="left:1212px;top:230px;" width="18" height="19" viewBox="0 0 18 19"><text x="0" y="16" font-family="Liberation Sans" font-size="19" fill="#fff" stroke="#666464" stroke-width="1.15">a</text><path d="M15 3l-6 6M9 4v5h5" fill="none" stroke="#d01818" stroke-width="2.4"/></svg>
<svg class="a" style="left:1021px;top:270px;" width="17" height="18" viewBox="0 0 17 18"><rect x="0" y="13" width="16" height="4" fill="#800000"/><path d="M3 2h10M8 2v10" stroke="#222" stroke-width="1.8"/><circle cx="2" cy="6" r="1.2" fill="#2c2"/><circle cx="2" cy="9" r="1.2" fill="#9e3"/><circle cx="14" cy="6" r="1.2" fill="#c3c"/><circle cx="14" cy="9" r="1.2" fill="#f44"/><circle cx="5" cy="2" r="1.2" fill="#2aa"/><circle cx="11" cy="2" r="1.2" fill="#82c"/></svg>
<svg class="a" style="left:1044px;top:277px;" width="7" height="4" viewBox="0 0 7 4"><path d="M0 0h7l-3.5 4z" fill="#111"/></svg>
<svg class="a" style="left:1138px;top:270px;" width="17" height="18" viewBox="0 0 17 18"><rect x="0.5" y="0.5" width="16" height="9" fill="#fff" stroke="#bbb" stroke-width="0.6"/><text x="1.5" y="8.5" font-family="Liberation Sans" font-size="9" fill="#222">a b</text><path d="M1 14h15M4 11.5l-3 2.5 3 2.5M13 11.5l3 2.5-3 2.5" fill="none" stroke="#e88a10" stroke-width="1.6"/></svg>
<svg class="a" style="left:1161px;top:277px;" width="7" height="4" viewBox="0 0 7 4"><path d="M0 0h7l-3.5 4z" fill="#111"/></svg>
<svg class="a" style="left:1187px;top:270px;" width="18" height="19" viewBox="0 0 18 19"><text x="0" y="16" font-family="Liberation Sans" font-size="19" fill="#fff" stroke="#666464" stroke-width="1.15">a</text><text x="11" y="7" font-family="Liberation Sans" font-size="9" fill="#3a8ae8">s</text></svg>
<svg class="a" style="left:1212px;top:270px;" width="18" height="19" viewBox="0 0 18 19"><text x="0" y="16" font-family="Liberation Sans" font-size="19" fill="#fff" stroke="#666464" stroke-width="1.15">a</text><text x="11" y="17" font-family="Liberation Sans" font-size="9" fill="#3a8ae8">s</text></svg>
<div class="a" style="left:1012px;top:299px;width:227px;height:22px;background:linear-gradient(#c8c4c2,#d6d2d0);"></div>
<svg class="a" style="left:1017px;top:308px;" width="9" height="9" viewBox="0 0 9 9"><rect x="0.5" y="0.5" width="8" height="8" fill="#fff" stroke="#56606a"/><path d="M2 4.5h5" stroke="#111" stroke-width="1.2"/></svg>
<div class="t" style="left:1031.5px;top:308.71px;font-size:11.8px;line-height:11.8px;color:#181414;font-weight:bold;letter-spacing:0.053px;-webkit-text-stroke:0.3px #181414;">Absatz</div>
<svg class="a" style="left:1223px;top:307px;" width="12" height="11" viewBox="0 0 12 11"><rect x="0.5" y="0.5" width="11" height="10" fill="#fff" stroke="#3a6ab8"/><rect x="0.5" y="0.5" width="11" height="2.5" fill="#3a6ab8"/><path d="M3 7h1M6 7h1M9 7h1" stroke="#234" stroke-width="1"/></svg>
<div class="a" style="left:1019px;top:333px;width:23px;height:24px;background:#c2bdba;border:1px solid #b3aeab;border-radius:3px;"></div>
<svg class="a" style="left:1010px;top:330px;" width="110" height="30" viewBox="0 0 110 30"><rect x="12.5" y="8.5" width="13" height="2.6" rx="1.3" fill="#fdfdfd" stroke="#5a5a5a" stroke-width="0.9"/><rect x="12.5" y="13.5" width="9" height="2.6" rx="1.3" fill="#fdfdfd" stroke="#5a5a5a" stroke-width="0.9"/><rect x="12.5" y="18.5" width="11" height="2.6" rx="1.3" fill="#fdfdfd" stroke="#5a5a5a" stroke-width="0.9"/><rect x="39.5" y="8.5" width="13" height="2.6" rx="1.3" fill="#fdfdfd" stroke="#5a5a5a" stroke-width="0.9"/><rect x="41.5" y="13.5" width="9" height="2.6" rx="1.3" fill="#fdfdfd" stroke="#5a5a5a" stroke-width="0.9"/><rect x="40.5" y="18.5" width="11" height="2.6" rx="1.3" fill="#fdfdfd" stroke="#5a5a5a" stroke-width="0.9"/><rect x="65.5" y="8.5" width="13" height="2.6" rx="1.3" fill="#fdfdfd" stroke="#5a5a5a" stroke-width="0.9"/><rect x="69.5" y="13.5" width="9" height="2.6" rx="1.3" fill="#fdfdfd" stroke="#5a5a5a" stroke-width="0.9"/><rect x="67.5" y="18.5" width="11" height="2.6" rx="1.3" fill="#fdfdfd" stroke="#5a5a5a" stroke-width="0.9"/><rect x="89.5" y="8.5" width="13" height="2.6" rx="1.3" fill="#fdfdfd" stroke="#5a5a5a" stroke-width="0.9"/><rect x="89.5" y="13.5" width="13" height="2.6" rx="1.3" fill="#fdfdfd" stroke="#5a5a5a" stroke-width="0.9"/><rect x="89.5" y="18.5" width="13" height="2.6" rx="1.3" fill="#fdfdfd" stroke="#5a5a5a" stroke-width="0.9"/></svg>
<svg class="a" style="left:1010px;top:365px;" width="80" height="25" viewBox="0 0 80 25"><rect x="15.5" y="6.5" width="11" height="2.6" rx="1.3" fill="#fdfdfd" stroke="#5a5a5a" stroke-width="0.9"/><rect x="15.5" y="11.5" width="11" height="2.6" rx="1.3" fill="#fdfdfd" stroke="#5a5a5a" stroke-width="0.9"/><rect x="15.5" y="16.5" width="11" height="2.6" rx="1.3" fill="#fdfdfd" stroke="#5a5a5a" stroke-width="0.9"/><rect x="52.5" y="6.5" width="11" height="2.6" rx="1.3" fill="#fdfdfd" stroke="#5a5a5a" stroke-width="0.9"/><rect x="52.5" y="11.5" width="11" height="2.6" rx="1.3" fill="#fdfdfd" stroke="#5a5a5a" stroke-width="0.9"/><rect x="52.5" y="16.5" width="11" height="2.6" rx="1.3" fill="#fdfdfd" stroke="#5a5a5a" stroke-width="0.9"/><g fill="#3a8af0"><circle cx="12.5" cy="7.5" r="1.6"/><circle cx="12.5" cy="12.5" r="1.6"/><circle cx="12.5" cy="17.5" r="1.6"/><rect x="47" y="5" width="4.5" height="15" rx="2" fill="#2a7af0"/></g><g fill="#fff" font-family="Liberation Sans" font-size="5" font-weight="bold"><text x="48" y="10">1</text><text x="48" y="15">2</text><text x="48" y="19.5">3</text></g></svg>
<svg class="a" style="left:1044px;top:375px;" width="7" height="4" viewBox="0 0 7 4"><path d="M0 0h7l-3.5 4z" fill="#111"/></svg>
<svg class="a" style="left:1080px;top:375px;" width="7" height="4" viewBox="0 0 7 4"><path d="M0 0h7l-3.5 4z" fill="#111"/></svg>
<div class="t" style="left:1018px;top:401.01px;font-size:11.8px;line-height:11.8px;color:#231f1f;letter-spacing:0.178px;">Abstand:</div>
<div class="a" style="left:1018px;top:411px;width:8px;height:1px;background:#231f1f;"></div>
<div class="t" style="left:1128px;top:401.01px;font-size:11.8px;line-height:11.8px;color:#231f1f;letter-spacing:-0.051px;">Einzug:</div>
<div class="a" style="left:1128px;top:411px;width:7px;height:1px;background:#231f1f;"></div>
<svg class="a" style="left:1021px;top:423px;" width="17" height="17" viewBox="0 0 17 17"><rect x="0.5" y="0.5" width="15" height="15" rx="2" fill="#fff" stroke="#333"/><path d="M6 4h7M6 7h7M6 10h7M6 13h7" stroke="#555" stroke-width="0.9"/><path d="M3 4v4M2 5l1-1 1 1" stroke="#3a5ab8" stroke-width="0.9" fill="none"/></svg>
<svg class="a" style="left:1046px;top:423px;" width="17" height="17" viewBox="0 0 17 17"><rect x="0.5" y="0.5" width="15" height="15" rx="2" fill="#fff" stroke="#333"/><path d="M6 4h7M6 7h7M6 10h7M6 13h7" stroke="#555" stroke-width="0.9"/><path d="M3 9v4M2 12l1 1 1-1" stroke="#3a5ab8" stroke-width="0.9" fill="none"/></svg>
<svg class="a" style="left:1134px;top:424px;" width="14" height="12" viewBox="0 0 14 12"><path d="M0.5 3.5h7v-3l6 5.5-6 5.5v-3h-7z" fill="#ddd" stroke="#aaa"/></svg>
<svg class="a" style="left:1158px;top:424px;" width="14" height="12" viewBox="0 0 14 12"><path d="M13.5 3.5h-7v-3l-6 5.5 6 5.5v-3h7z" fill="#ddd" stroke="#aaa"/></svg>
<svg class="a" style="left:1181px;top:423px;" width="23" height="15" viewBox="0 0 23 15"><path d="M0.5 3.5h4v-3l5 4.5-5 4.5v-3h-4z" fill="#6ad040" stroke="#2a9a1a"/><path d="M12 3h9M15 6h6M15 9h6M15 12h6M12 15h9" stroke="#3a5a98" stroke-width="1.2"/><path d="M11 2v4M11 4h3" stroke="#3a5a98"/></svg>
<div class="a" style="left:1040px;top:452px;width:82px;height:27px;background:#fff;"></div>
<div class="t" style="left:1042px;top:461.01px;font-size:11.8px;line-height:11.8px;color:#231f1f;letter-spacing:0.290px;">0,00 cm</div>
<svg class="a" style="left:1110px;top:457px;" width="10" height="17" viewBox="0 0 10 17"><path d="M1 5l4-4 4 4M1 12l4 4 4-4" fill="none" stroke="#b5b1af" stroke-width="1"/></svg>
<div class="a" style="left:1150px;top:452px;width:82px;height:27px;background:#fff;"></div>
<div class="t" style="left:1152px;top:461.01px;font-size:11.8px;line-height:11.8px;color:#231f1f;letter-spacing:0.290px;">0,00 cm</div>
<svg class="a" style="left:1220px;top:457px;" width="10" height="17" viewBox="0 0 10 17"><path d="M1 5l4-4 4 4M1 12l4 4 4-4" fill="none" stroke="#b5b1af" stroke-width="1"/></svg>
<div class="a" style="left:1040px;top:485px;width:82px;height:27px;background:#fff;"></div>
<div class="t" style="left:1042px;top:494.01px;font-size:11.8px;line-height:11.8px;color:#231f1f;letter-spacing:0.290px;">0,30 cm</div>
<svg class="a" style="left:1110px;top:490px;" width="10" height="17" viewBox="0 0 10 17"><path d="M1 5l4-4 4 4M1 12l4 4 4-4" fill="none" stroke="#b5b1af" stroke-width="1"/></svg>
<div class="a" style="left:1150px;top:485px;width:82px;height:27px;background:#fff;"></div>
<div class="t" style="left:1152px;top:494.01px;font-size:11.8px;line-height:11.8px;color:#231f1f;letter-spacing:0.290px;">0,00 cm</div>
<svg class="a" style="left:1220px;top:490px;" width="10" height="17" viewBox="0 0 10 17"><path d="M1 5l4-4 4 4M1 12l4 4 4-4" fill="none" stroke="#b5b1af" stroke-width="1"/></svg>
<div class="a" style="left:1150px;top:518px;width:82px;height:27px;background:#fff;"></div>
<div class="t" style="left:1152px;top:527.01px;font-size:11.8px;line-height:11.8px;color:#231f1f;letter-spacing:0.290px;">0,00 cm</div>
<svg class="a" style="left:1220px;top:523px;" width="10" height="17" viewBox="0 0 10 17"><path d="M1 5l4-4 4 4M1 12l4 4 4-4" fill="none" stroke="#b5b1af" stroke-width="1"/></svg>
<svg class="a" style="left:1018px;top:457px;" width="17" height="17" viewBox="0 0 17 17"><path d="M1 9h14M1 12h14M1 15h14" stroke="#3a5a98" stroke-width="1.4"/><path d="M8 1v6M6 1h4M6 7h4" stroke="#3a5a98" stroke-width="1"/></svg>
<svg class="a" style="left:1018px;top:490px;" width="17" height="17" viewBox="0 0 17 17"><path d="M1 2h14M1 5h14M1 8h14" stroke="#3a5a98" stroke-width="1.4"/><path d="M8 10v6M6 10h4M6 16h4" stroke="#3a5a98" stroke-width="1"/></svg>
<svg class="a" style="left:1020px;top:523px;" width="17" height="15" viewBox="0 0 17 15"><path d="M7 3h9M7 7h9M7 11h9" stroke="#3a5a98" stroke-width="1.8"/><path d="M3 1v13M1 3l2-2 2 2M1 12l2 2 2-2" stroke="#3a5a98" stroke-width="1.2" fill="none"/></svg>
<svg class="a" style="left:1046px;top:528px;" width="7" height="4" viewBox="0 0 7 4"><path d="M0 0h7l-3.5 4z" fill="#111"/></svg>
<svg class="a" style="left:1128px;top:457px;" width="17" height="17" viewBox="0 0 17 17"><path d="M7 2h8M9 5h6M9 8h6M9 11h6M7 14h8" stroke="#3a5a98" stroke-width="1.3"/><path d="M1 3h5M1 1v4M6 1v4" stroke="#3a5a98" stroke-width="1"/></svg>
<svg class="a" style="left:1128px;top:490px;" width="17" height="17" viewBox="0 0 17 17"><path d="M1 2h8M1 5h6M1 8h6M1 11h6M1 14h8" stroke="#3a5a98" stroke-width="1.3"/><path d="M10 3h5M10 1v4M15 1v4" stroke="#3a5a98" stroke-width="1"/></svg>
<svg class="a" style="left:1128px;top:523px;" width="17" height="17" viewBox="0 0 17 17"><path d="M1 2h15M5 5h11M1 8h15M1 11h15M1 14h15" stroke="#3a5a98" stroke-width="1.3"/></svg>
<div class="a" style="left:1012px;top:551px;width:227px;height:27px;background:linear-gradient(#c8c4c2,#d6d2d0);"></div>
<svg class="a" style="left:1017px;top:560px;" width="9" height="9" viewBox="0 0 9 9"><rect x="0.5" y="0.5" width="8" height="8" fill="#fff" stroke="#56606a"/><path d="M2 4.5h5" stroke="#111" stroke-width="1.2"/><path d="M4.5 2v5" stroke="#111" stroke-width="1.2"/></svg>
<div class="t" style="left:1031.5px;top:560.71px;font-size:11.8px;line-height:11.8px;color:#181414;font-weight:bold;letter-spacing:-0.327px;-webkit-text-stroke:0.3px #181414;">Bereich</div>
<svg class="a" style="left:1223px;top:559px;" width="12" height="11" viewBox="0 0 12 11"><rect x="0.5" y="0.5" width="11" height="10" fill="#fff" stroke="#3a6ab8"/><rect x="0.5" y="0.5" width="11" height="2.5" fill="#3a6ab8"/><path d="M3 7h1M6 7h1M9 7h1" stroke="#234" stroke-width="1"/></svg>
<div class="a" style="left:1012px;top:578px;width:227px;height:27px;background:linear-gradient(#c8c4c2,#d6d2d0);"></div>
<svg class="a" style="left:1017px;top:587px;" width="9" height="9" viewBox="0 0 9 9"><rect x="0.5" y="0.5" width="8" height="8" fill="#fff" stroke="#56606a"/><path d="M2 4.5h5" stroke="#111" stroke-width="1.2"/><path d="M4.5 2v5" stroke="#111" stroke-width="1.2"/></svg>
<div class="t" style="left:1031.5px;top:587.71px;font-size:11.8px;line-height:11.8px;color:#181414;font-weight:bold;letter-spacing:-0.107px;-webkit-text-stroke:0.3px #181414;">Linie</div>
<svg class="a" style="left:1223px;top:586px;" width="12" height="11" viewBox="0 0 12 11"><rect x="0.5" y="0.5" width="11" height="10" fill="#fff" stroke="#3a6ab8"/><rect x="0.5" y="0.5" width="11" height="2.5" fill="#3a6ab8"/><path d="M3 7h1M6 7h1M9 7h1" stroke="#234" stroke-width="1"/></svg>
<div class="a" style="left:1012px;top:605px;width:227px;height:27px;background:linear-gradient(#c8c4c2,#d6d2d0);"></div>
<svg class="a" style="left:1017px;top:614px;" width="9" height="9" viewBox="0 0 9 9"><rect x="0.5" y="0.5" width="8" height="8" fill="#fff" stroke="#56606a"/><path d="M2 4.5h5" stroke="#111" stroke-width="1.2"/><path d="M4.5 2v5" stroke="#111" stroke-width="1.2"/></svg>
<div class="t" style="left:1031.5px;top:614.71px;font-size:11.8px;line-height:11.8px;color:#181414;font-weight:bold;letter-spacing:-0.248px;-webkit-text-stroke:0.3px #181414;">Position und Größe</div>
<svg class="a" style="left:1223px;top:613px;" width="12" height="11" viewBox="0 0 12 11"><rect x="0.5" y="0.5" width="11" height="10" fill="#fff" stroke="#3a6ab8"/><rect x="0.5" y="0.5" width="11" height="2.5" fill="#3a6ab8"/><path d="M3 7h1M6 7h1M9 7h1" stroke="#234" stroke-width="1"/></svg>
<div class="a" style="left:1012px;top:631px;width:227px;height:1px;background:#c6c2c0;"></div>
<svg class="a" style="left:1255px;top:139px;" width="11" height="10" viewBox="0 0 11 10"><path d="M0 1h8M0 3.5h8M0 6h8" stroke="#3a4a68" stroke-width="1.2"/><path d="M5 7h6l-3 3z" fill="#111"/></svg>
<div class="a" style="left:1249px;top:163px;width:24px;height:1px;background:#bcb8b6;"></div>
<div class="a" style="left:1244px;top:167px;width:32px;height:32px;border:1px solid #bcb8b6;border-radius:4px;background:#d3cfcd;"></div>
<svg class="a" style="left:1248px;top:171px;" width="24" height="24" viewBox="0 0 24 24"><g transform="translate(12 12) rotate(45)"><g fill="#6a6866" stroke="#6a6866" stroke-width="2.2"><rect x="-8" y="-2" width="16" height="4"/><circle cx="-9" cy="0" r="4.6"/><circle cx="9" cy="0" r="4.6"/></g><g fill="#f6f6f6"><rect x="-8" y="-2" width="16" height="4"/><circle cx="-9" cy="0" r="4.6"/><circle cx="9" cy="0" r="4.6"/></g><rect x="-15" y="-1.8" width="6" height="3.6" fill="#d3cfcd"/><rect x="9" y="-1.8" width="6" height="3.6" fill="#d3cfcd"/></g></svg>
<svg class="a" style="left:1249px;top:206px;" width="22" height="23" viewBox="0 0 22 23"><rect x="0.5" y="0.5" width="21" height="18" fill="#fff" stroke="#5a7ab8"/><rect x="1" y="1" width="20" height="3" fill="#9ab8e8"/><rect x="4" y="9" width="3" height="9" fill="#1a5ae0"/><rect x="9" y="9" width="3" height="9" fill="#f0a010"/><rect x="14" y="9" width="3" height="9" fill="#2ac02a"/><ellipse cx="11" cy="21" rx="9" ry="1.5" fill="#bbb"/></svg>
<svg class="a" style="left:1249px;top:242px;" width="22" height="22" viewBox="0 0 22 22"><path d="M6 2h10l-6 9z" fill="#8ab0f0"/><path d="M12 2l6 5-6 5-5-5z" fill="#4a8af0" stroke="#2a5ab8" stroke-width="0.8"/><path d="M14 10v8c-1 2-4 2-5 1" fill="none" stroke="#f0a030" stroke-width="2.5"/><circle cx="7" cy="16" r="5.5" fill="#dbe8f8" stroke="#3a6ab8"/><path d="M7 12v4l2 2" stroke="#333" stroke-width="1" fill="none"/></svg>
<svg class="a" style="left:1249px;top:278px;" width="22" height="20" viewBox="0 0 22 20"><rect x="0.5" y="0.5" width="21" height="18" rx="2" fill="#fff" stroke="#666"/><rect x="1" y="1" width="20" height="4" fill="#3a7ae0"/><path d="M3 8h9M3 11h9M3 14h7" stroke="#aaa"/><rect x="13" y="12" width="2" height="5" fill="#f0a010"/><rect x="16" y="9" width="2" height="8" fill="#f0a010"/><rect x="19" y="6" width="2" height="11" fill="#f0a010"/></svg>
<svg class="a" style="left:1249px;top:312px;" width="22" height="22" viewBox="0 0 22 22"><rect x="0.5" y="0.5" width="21" height="19" rx="2" fill="#eeeeee" stroke="#9a9a9a"/><rect x="1" y="1" width="20" height="5" fill="#4a8ae0"/><path d="M3 9h14M3 12h14M3 15h10" stroke="#bbb"/><path d="M12 21l2-6 7-9 2 2-7 9z" fill="#f2c230" stroke="#b08a10" stroke-width="0.6"/></svg>
<svg class="a" style="left:1249px;top:348px;" width="22" height="20" viewBox="0 0 22 20"><path d="M1 3h8l2 2h10v14h-20z" fill="#4a8ae0"/><rect x="1" y="6" width="20" height="13" fill="#6aa8f0"/><rect x="6" y="8" width="10" height="9" fill="#5a3a80"/><circle cx="11" cy="12" r="3" fill="#e04a6a"/></svg>
<svg class="a" style="left:1249px;top:382px;" width="22" height="22" viewBox="0 0 22 22"><path d="M11 0 L13.5 8.5 L22 11 L13.5 13.5 L11 22 L8.5 13.5 L0 11 L8.5 8.5 Z" fill="#3d8ef0" stroke="#2a6ac8" stroke-width="0.8"/></svg>
<svg class="a" style="left:1px;top:927px;" width="5" height="36" viewBox="0 0 5 36"><rect x="0" y="0" width="1.5" height="1.5" fill="#8e8a88"/><rect x="2.5" y="2" width="1.5" height="1.5" fill="#8e8a88"/><rect x="0" y="4" width="1.5" height="1.5" fill="#8e8a88"/><rect x="2.5" y="6" width="1.5" height="1.5" fill="#8e8a88"/><rect x="0" y="8" width="1.5" height="1.5" fill="#8e8a88"/><rect x="2.5" y="10" width="1.5" height="1.5" fill="#8e8a88"/><rect x="0" y="12" width="1.5" height="1.5" fill="#8e8a88"/><rect x="2.5" y="14" width="1.5" height="1.5" fill="#8e8a88"/><rect x="0" y="16" width="1.5" height="1.5" fill="#8e8a88"/><rect x="2.5" y="18" width="1.5" height="1.5" fill="#8e8a88"/><rect x="0" y="20" width="1.5" height="1.5" fill="#8e8a88"/><rect x="2.5" y="22" width="1.5" height="1.5" fill="#8e8a88"/><rect x="0" y="24" width="1.5" height="1.5" fill="#8e8a88"/><rect x="2.5" y="26" width="1.5" height="1.5" fill="#8e8a88"/><rect x="0" y="28" width="1.5" height="1.5" fill="#8e8a88"/><rect x="2.5" y="30" width="1.5" height="1.5" fill="#8e8a88"/><rect x="0" y="32" width="1.5" height="1.5" fill="#8e8a88"/><rect x="2.5" y="34" width="1.5" height="1.5" fill="#8e8a88"/></svg>
<div class="a" style="left:13px;top:930px;width:29px;height:32px;background:#c2bdba;border:1px solid #b0aba8;border-radius:4px;box-shadow:inset 0 1px 2px rgba(0,0,0,0.08);"></div>
<svg class="a" style="left:20px;top:934px;" width="14" height="21" viewBox="0 0 14 21"><path d="M1.5 1.5v15l4-3.5 3 6.5 2.5-1-3-6.5h5z" fill="#e8e8ee" stroke="#333" stroke-width="1.3" stroke-linejoin="round"/></svg>
<div class="a" style="left:46px;top:936px;width:1px;height:20px;background:#bcb8b6;"></div>
<svg class="a" style="left:55px;top:934px;" width="23" height="23" viewBox="0 0 23 23"><path d="M1 22L22 1" stroke="#222" stroke-width="1.4"/></svg>
<svg class="a" style="left:86px;top:940px;" width="23" height="10" viewBox="0 0 23 10"><path d="M0 5h18" stroke="#222" stroke-width="1.4"/><path d="M23 5l-6-3.5v7z" fill="#222"/></svg>
<svg class="a" style="left:117px;top:937px;" width="23" height="16" viewBox="0 0 23 16"><defs><linearGradient id="gr1" x1="0" y1="0" x2="0" y2="1"><stop offset="0" stop-color="#70b0ff"/><stop offset="1" stop-color="#2a7ae8"/></linearGradient></defs><rect x="1" y="1" width="21" height="14" fill="url(#gr1)" stroke="#1a4ab0" stroke-width="1.5"/></svg>
<svg class="a" style="left:148px;top:936px;" width="23" height="17" viewBox="0 0 23 17"><ellipse cx="11.5" cy="8.5" rx="10.5" ry="7.5" fill="url(#gr1)" stroke="#1a4ab0" stroke-width="1.5"/></svg>
<svg class="a" style="left:181px;top:935px;" width="18" height="21" viewBox="0 0 18 21"><path d="M2 2h14M9 2v18M5 20h8" stroke="#2a2a2a" stroke-width="2.2"/><path d="M2 2v3M16 2v3" stroke="#2a2a2a" stroke-width="1.5"/></svg>
<div class="a" style="left:209px;top:936px;width:1px;height:20px;background:#bcb8b6;"></div>
<svg class="a" style="left:217px;top:933px;" width="23" height="24" viewBox="0 0 23 24"><path d="M1 14c3-4 9-5 21-5v14h-16c-3 0-6-4-5-9z" fill="#4a9af0"/><path d="M4 16c3-3 9-4 18-4v11h-12z" fill="#bfe0ff"/><path d="M7 21l2-6 10-14 3 2-10 14z" fill="#f2c230" stroke="#a8801a" stroke-width="0.7"/></svg>
<svg class="a" style="left:246px;top:943px;" width="7" height="4" viewBox="0 0 7 4"><path d="M0 0h7l-3.5 4z" fill="#111"/></svg>
<svg class="a" style="left:259px;top:934px;" width="23" height="23" viewBox="0 0 23 23"><rect x="0.5" y="0.5" width="5" height="5" fill="#5aa0f0" stroke="#2a5ab8"/><rect x="17" y="17" width="5" height="5" fill="#5aa0f0" stroke="#2a5ab8"/><path d="M5.5 3h6v16.5h5.5" fill="none" stroke="#333" stroke-width="1.4"/></svg>
<svg class="a" style="left:288px;top:943px;" width="7" height="4" viewBox="0 0 7 4"><path d="M0 0h7l-3.5 4z" fill="#111"/></svg>
<svg class="a" style="left:301px;top:934px;" width="22" height="22" viewBox="0 0 22 22"><path d="M11 1l10 10-10 10-10-10z" fill="url(#gr1)" stroke="#1a4ab0" stroke-width="1.4"/></svg>
<svg class="a" style="left:330px;top:943px;" width="7" height="4" viewBox="0 0 7 4"><path d="M0 0h7l-3.5 4z" fill="#111"/></svg>
<svg class="a" style="left:343px;top:934px;" width="22" height="22" viewBox="0 0 22 22"><circle cx="11" cy="11" r="10" fill="url(#gr1)" stroke="#1a4ab0" stroke-width="1.4"/><circle cx="7.5" cy="8" r="1" fill="#1a4ab0"/><circle cx="14.5" cy="8" r="1" fill="#1a4ab0"/><path d="M5.5 12.5q5.5 5 11 0" fill="none" stroke="#1a4ab0" stroke-width="1.3"/></svg>
<svg class="a" style="left:372px;top:943px;" width="7" height="4" viewBox="0 0 7 4"><path d="M0 0h7l-3.5 4z" fill="#111"/></svg>
<svg class="a" style="left:385px;top:937px;" width="23" height="16" viewBox="0 0 23 16"><path d="M1 8l7-7v4h7v-4l7 7-7 7v-4h-7v4z" fill="url(#gr1)" stroke="#1a4ab0" stroke-width="1.3" stroke-linejoin="round"/></svg>
<svg class="a" style="left:414px;top:943px;" width="7" height="4" viewBox="0 0 7 4"><path d="M0 0h7l-3.5 4z" fill="#111"/></svg>
<svg class="a" style="left:427px;top:934px;" width="23" height="23" viewBox="0 0 23 23"><rect x="1" y="1" width="21" height="21" fill="url(#gr1)" stroke="#1a4ab0" stroke-width="1.5"/><path d="M1 5.5h21M6 1v21" stroke="#1a4ab0" stroke-width="1.2"/><rect x="7" y="6.5" width="14" height="14.5" fill="#5aa0f8"/></svg>
<svg class="a" style="left:455px;top:943px;" width="7" height="4" viewBox="0 0 7 4"><path d="M0 0h7l-3.5 4z" fill="#111"/></svg>
<svg class="a" style="left:468px;top:934px;" width="23" height="22" viewBox="0 0 23 22"><path d="M4 1h15c3 0 4 1 4 4v8c0 3-1 4-4 4h-8l-7 5 2-5c-3 0-5-1-5-4v-8c0-3 1-4 3-4z" fill="url(#gr1)" stroke="#1a4ab0" stroke-width="1.3"/></svg>
<svg class="a" style="left:498px;top:943px;" width="7" height="4" viewBox="0 0 7 4"><path d="M0 0h7l-3.5 4z" fill="#111"/></svg>
<svg class="a" style="left:510px;top:934px;" width="23" height="22" viewBox="0 0 23 22"><path d="M11.5 1l3 7.5h8l-6.5 5 2.5 8-7-5-7 5 2.5-8-6.5-5h8z" fill="url(#gr1)" stroke="#1a4ab0" stroke-width="1.2" stroke-linejoin="round"/></svg>
<svg class="a" style="left:540px;top:943px;" width="7" height="4" viewBox="0 0 7 4"><path d="M0 0h7l-3.5 4z" fill="#111"/></svg>
<div class="a" style="left:553px;top:936px;width:1px;height:20px;background:#bcb8b6;"></div>
<div class="a" style="left:559px;top:930px;width:30px;height:31px;background:#c2bdba;border:1px solid #b0aba8;border-radius:4px;box-shadow:inset 0 1px 2px rgba(0,0,0,0.08);"></div>
<svg class="a" style="left:563px;top:934px;" width="22" height="23" viewBox="0 0 22 23"><path d="M1 15c2-6 8-12 20-13" fill="none" stroke="#333" stroke-width="1.2"/><rect x="6" y="4" width="6" height="6" fill="#5aa0f0" stroke="#2a5ab8"/><path d="M10 8v12l3-3 3 5 2-1-3-5h4z" fill="#ddd" stroke="#333" stroke-width="1"/></svg>
<svg class="a" style="left:596px;top:934px;" width="20" height="22" viewBox="0 0 20 22"><path d="M4 14l10-13 5 4-10 13z" fill="#f59a10" stroke="#c06a00" stroke-width="0.8"/><path d="M4 14l5 4-5 3z" fill="#ccc" stroke="#888" stroke-width="0.8"/><circle cx="4" cy="19" r="3" fill="#ddd" stroke="#999"/></svg>
<div class="a" style="left:623px;top:936px;width:1px;height:20px;background:#bcb8b6;"></div>
<svg class="a" style="left:631px;top:935px;" width="23" height="20" viewBox="0 0 23 20"><rect x="0.5" y="0.5" width="21" height="18" rx="3" fill="#fafafa" stroke="#aab" /><rect x="2" y="2" width="18" height="15" rx="2" fill="#eef" opacity="0.6"/><text x="5" y="16" font-family="Liberation Sans" font-size="15" font-weight="bold" fill="#fff" stroke="#555" stroke-width="0.8">A</text></svg>
<svg class="a" style="left:662px;top:934px;" width="22" height="22" viewBox="0 0 22 22"><rect x="5" y="0.5" width="9" height="9" fill="#2ac02a" stroke="#1a801a"/><circle cx="16" cy="8" r="5" fill="#f04040"/><rect x="0.5" y="8" width="10" height="10" rx="3" fill="#3a8af0" stroke="#1a4ab0"/><rect x="8" y="11" width="13" height="9" fill="#fff" stroke="#1a4ab0"/><path d="M10 14h9M10 17h9" stroke="#1a4ab0"/></svg>
<svg class="a" style="left:692px;top:935px;" width="22" height="20" viewBox="0 0 22 20"><path d="M1 2h8l2 2h10v15h-20z" fill="#7ab0f0"/><rect x="1" y="5" width="20" height="14" fill="#8ac0f8" stroke="#5a8ad0" stroke-width="0.6"/><rect x="6" y="8" width="10" height="9" fill="#6a3a90"/><circle cx="11" cy="12" r="3" fill="#e04a6a"/></svg>
<div class="a" style="left:722px;top:936px;width:1px;height:20px;background:#bcb8b6;"></div>
<svg class="a" style="left:731px;top:934px;" width="21" height="22" viewBox="0 0 21 22"><path d="M4 1h14l3 3v14l-3 3h-12l-2-2z" fill="#c8c8c8" stroke="#999"/><path d="M1 12h7v-3l5 5-5 5v-3h-7z" fill="#e0e0e0" stroke="#999"/></svg>
<div class="a" style="left:0px;top:965px;width:1280px;height:1px;background:#b9b5b3;"></div>
<div class="a" style="left:0px;top:966px;width:1280px;height:1px;background:#ece9e7;"></div>
<div class="a" style="left:0px;top:967px;width:1280px;height:22px;background:linear-gradient(#d6d2d0 0%,#d6d2d0 55%,#c2bebc 100%);"></div>
<div class="t" style="left:10px;top:973.33px;font-size:12.6px;line-height:12.6px;color:#231f1f;letter-spacing:0.490px;">Gliederungstext markiert</div>
<svg class="a" style="left:262px;top:970px;" width="15" height="13" viewBox="0 0 15 13"><path d="M4 0v8M0 4h8" stroke="#2a3ae0" stroke-width="1"/><rect x="4.5" y="4.5" width="10" height="7" fill="none" stroke="#222" stroke-dasharray="1 1"/></svg>
<div class="t" style="left:282px;top:973.33px;font-size:12.6px;line-height:12.6px;color:#231f1f;letter-spacing:0.678px;">2,00 / 6,00</div>
<svg class="a" style="left:464px;top:970px;" width="16" height="13" viewBox="0 0 16 13"><rect x="3.5" y="1.5" width="11" height="10" fill="none" stroke="#222" stroke-dasharray="1 1"/><path d="M0 4h3M0 9h3" stroke="#222"/></svg>
<div class="t" style="left:485.5px;top:973.33px;font-size:12.6px;line-height:12.6px;color:#231f1f;letter-spacing:0.664px;">24,50 x 12,18</div>
<svg class="a" style="left:671px;top:971px;" width="13" height="12" viewBox="0 0 13 12"><rect x="0.5" y="2.5" width="9" height="9" fill="none" stroke="#999"/><path d="M3 7l2 2 7-8" fill="none" stroke="#999" stroke-width="1.2"/></svg>
<div class="t" style="left:724px;top:973.33px;font-size:12.6px;line-height:12.6px;color:#231f1f;letter-spacing:0.197px;">Folie 2 / 2</div>
<div class="t" style="left:794px;top:973.33px;font-size:12.6px;line-height:12.6px;color:#231f1f;letter-spacing:0.297px;">Vortragsfolie 1</div>
<svg class="a" style="left:1066px;top:970px;" width="14" height="14" viewBox="0 0 14 14"><path d="M7 1.5v11M1.5 7h11" stroke="#111" stroke-width="1.6"/><path d="M7 0l-2.8 3h5.6zM7 14l-2.8-3h5.6zM0 7l3-2.8v5.6zM14 7l-3-2.8v5.6z" fill="#111"/></svg>
<div class="a" style="left:1093px;top:978px;width:8px;height:2px;background:#777370;"></div>
<div class="a" style="left:1107px;top:978px;width:97px;height:2px;background:#8e8a88;"></div>
<div class="a" style="left:1137px;top:974px;width:2px;height:10px;background:#8e8a88;"></div>
<svg class="a" style="left:1149px;top:974px;" width="10" height="10" viewBox="0 0 10 10"><circle cx="5" cy="5" r="3.8" fill="#f6f4f2" stroke="#7e7a78" stroke-width="1.2"/></svg>
<svg class="a" style="left:1209px;top:974px;" width="10" height="10" viewBox="0 0 10 10"><path d="M5 1v8M1 5h8" stroke="#777370" stroke-width="2"/></svg>
<div class="t" style="left:1233.5px;top:973.33px;font-size:12.6px;line-height:12.6px;color:#231f1f;letter-spacing:1.427px;">110%</div>
<div class="a" style="left:0px;top:989px;width:1280px;height:35px;background:linear-gradient(to right,#8498ae 0%,#8094aa 25%,#7c8696 45%,#7e8292 65%,#7e7a88 85%,#7c7a84 100%);"></div>
<div class="a" style="left:0px;top:989px;width:1280px;height:35px;background:linear-gradient(rgba(255,255,255,0.32),rgba(255,255,255,0.08) 25%,rgba(255,255,255,0) 45%,rgba(0,0,0,0.02));"></div>
<div class="a" style="left:0px;top:989px;width:1280px;height:1px;background:#e6e8ea;"></div>
<svg class="a" style="left:1px;top:992px;" width="31" height="31" viewBox="0 0 31 31"><defs><linearGradient id="kde" x1="0" y1="0" x2="0" y2="1"><stop offset="0" stop-color="#6ab4ff"/><stop offset="0.5" stop-color="#3a86e8"/><stop offset="1" stop-color="#1a56c0"/></linearGradient></defs><rect x="0.5" y="0.5" width="30" height="30" rx="5" fill="url(#kde)" stroke="#0a3a90"/><g transform="translate(14 17)"><circle r="9" fill="none" stroke="#fff" stroke-width="2.6"/><rect x="-2" y="-12" width="4" height="4" transform="rotate(0)" fill="#fff"/><rect x="-2" y="-12" width="4" height="4" transform="rotate(45)" fill="#fff"/><rect x="-2" y="-12" width="4" height="4" transform="rotate(90)" fill="#fff"/><rect x="-2" y="-12" width="4" height="4" transform="rotate(135)" fill="#fff"/><rect x="-2" y="-12" width="4" height="4" transform="rotate(180)" fill="#fff"/><rect x="-2" y="-12" width="4" height="4" transform="rotate(225)" fill="#fff"/><rect x="-2" y="-12" width="4" height="4" transform="rotate(270)" fill="#fff"/><rect x="-2" y="-12" width="4" height="4" transform="rotate(315)" fill="#fff"/><circle r="6.5" fill="#3a86e8"/></g><text x="11" y="24" font-family="Liberation Sans" font-size="21" font-weight="bold" fill="#fff" stroke="#fff" stroke-width="1">K</text></svg>
<svg class="a" style="left:37.0px;top:1004.5px;" width="9" height="9" viewBox="0 0 9 9"><circle cx="4.5" cy="4.5" r="4.3" fill="#d81818"/><circle cx="3.8" cy="3.2" r="1.8" fill="#fff" opacity="0.3"/></svg>
<svg class="a" style="left:47.5px;top:1004.5px;" width="9" height="9" viewBox="0 0 9 9"><circle cx="4.5" cy="4.5" r="4.3" fill="#2a60d0"/><circle cx="3.8" cy="3.2" r="1.8" fill="#fff" opacity="0.3"/></svg>
<svg class="a" style="left:57.8px;top:1004.5px;" width="9" height="9" viewBox="0 0 9 9"><circle cx="4.5" cy="4.5" r="4.3" fill="#48a828"/><circle cx="3.8" cy="3.2" r="1.8" fill="#fff" opacity="0.3"/></svg>
<svg class="a" style="left:80px;top:1002px;" width="16" height="11" viewBox="0 0 16 11"><rect x="0.5" y="0.5" width="15" height="10" fill="#fafafa" stroke="#999"/><rect x="1" y="1" width="14" height="2.5" fill="#f0c850"/></svg>
<div class="t" style="left:100px;top:999.65px;width:139.5px;overflow:hidden;font-size:14px;line-height:14px;color:#141414;transform:scaleX(0.86);transform-origin:0 0;-webkit-mask-image:linear-gradient(to right,#000 72%,rgba(0,0,0,0.1));mask-image:linear-gradient(to right,#000 72%,rgba(0,0,0,0.1));">*[lo-grid] (überschrieben)</div>
<svg class="a" style="left:241px;top:1001px;" width="17" height="13" viewBox="0 0 17 13"><ellipse cx="8.5" cy="7" rx="7.5" ry="5.5" fill="#6a6660"/><circle cx="6" cy="6" r="2.4" fill="#fff"/><circle cx="11" cy="6" r="2.4" fill="#fff"/><circle cx="6.5" cy="6.5" r="1" fill="#111"/><circle cx="11.5" cy="6.5" r="1" fill="#111"/><path d="M2 2l3 3M15 2l-3 3" stroke="#6a6660" stroke-width="2"/></svg>
<div class="t" style="left:261px;top:999.65px;width:143.0px;overflow:hidden;font-size:14px;line-height:14px;color:#141414;transform:scaleX(0.86);transform-origin:0 0;-webkit-mask-image:linear-gradient(to right,#000 72%,rgba(0,0,0,0.1));mask-image:linear-gradient(to right,#000 72%,rgba(0,0,0,0.1));">Werkzeugkasten - Werkzeug</div>
<svg class="a" style="left:402px;top:1001px;" width="17" height="13" viewBox="0 0 17 13"><ellipse cx="8.5" cy="7" rx="7.5" ry="5.5" fill="#6a6660"/><circle cx="6" cy="6" r="2.4" fill="#fff"/><circle cx="11" cy="6" r="2.4" fill="#fff"/><circle cx="6.5" cy="6.5" r="1" fill="#111"/><circle cx="11.5" cy="6.5" r="1" fill="#111"/><path d="M2 2l3 3M15 2l-3 3" stroke="#6a6660" stroke-width="2"/></svg>
<div class="t" style="left:422px;top:999.65px;width:116.3px;overflow:hidden;font-size:14px;line-height:14px;color:#141414;transform:scaleX(0.86);transform-origin:0 0;-webkit-mask-image:linear-gradient(to right,#000 100%,rgba(0,0,0,0.1));mask-image:linear-gradient(to right,#000 100%,rgba(0,0,0,0.1));">Ebenen - Pinsel</div>
<svg class="a" style="left:563px;top:1000px;" width="16" height="14" viewBox="0 0 16 14"><rect x="0.5" y="0.5" width="15" height="13" fill="#222" stroke="#bbb"/><path d="M3 4l2 1.5-2 1.5M6 7h3" stroke="#fff" stroke-width="0.9" fill="none"/></svg>
<div class="t" style="left:583px;top:999.65px;width:151.2px;overflow:hidden;font-size:14px;line-height:14px;color:#141414;transform:scaleX(0.86);transform-origin:0 0;-webkit-mask-image:linear-gradient(to right,#000 100%,rgba(0,0,0,0.1));mask-image:linear-gradient(to right,#000 100%,rgba(0,0,0,0.1));">limux : bash – Konsole</div>
<svg class="a" style="left:724px;top:1000px;" width="15" height="15" viewBox="0 0 15 15"><circle cx="7.5" cy="7.5" r="7" fill="#e8601a"/><circle cx="8.5" cy="7" r="4.5" fill="#2a5ab8"/><path d="M1 7c1-5 6-7 10-5-3 0-5 2-4 4-2 0-4 2-2 5-3-1-4-2-4-4z" fill="#f4a020"/></svg>
<div class="t" style="left:744px;top:999.65px;width:144.2px;overflow:hidden;font-size:14px;line-height:14px;color:#141414;transform:scaleX(0.86);transform-origin:0 0;-webkit-mask-image:linear-gradient(to right,#000 72%,rgba(0,0,0,0.1));mask-image:linear-gradient(to right,#000 72%,rgba(0,0,0,0.1));">Apache OpenOffice Draw</div>
<div class="a" style="left:880px;top:995px;width:156px;height:25px;background:rgba(255,255,255,0.16);border:1px solid rgba(220,220,230,0.7);border-radius:3px;box-shadow:0 0 1px rgba(0,0,0,0.3);"></div>
<svg class="a" style="left:886px;top:1001px;" width="14" height="15" viewBox="0 0 14 15"><path d="M0.5 0.5h9l4 4v10h-13z" fill="#f4ede6" stroke="#a8481a" stroke-width="1.2"/><rect x="3.5" y="6.5" width="7" height="5" fill="#fbd9bf" stroke="#a8481a" stroke-width="1"/></svg>
<div class="t" style="left:905px;top:999.65px;width:146.5px;overflow:hidden;font-size:14px;line-height:14px;color:#141414;transform:scaleX(0.86);transform-origin:0 0;-webkit-mask-image:linear-gradient(to right,#000 72%,rgba(0,0,0,0.1));mask-image:linear-gradient(to right,#000 72%,rgba(0,0,0,0.1));">lo-grid.odp - LibreOffice Impress</div>
<svg class="a" style="left:1048px;top:998px;" width="28" height="20" viewBox="0 0 28 20"><defs><linearGradient id="tb" x1="0" y1="0" x2="1" y2="1"><stop offset="0" stop-color="#2a6ab8"/><stop offset="1" stop-color="#0a2a68"/></linearGradient></defs><rect x="0" y="0" width="28" height="20" fill="url(#tb)"/><path d="M0 18L28 4M6 20L28 9M14 20L28 14" stroke="#4a8ad8" stroke-width="0.8"/><rect x="0" y="17" width="28" height="3" fill="#111"/><circle cx="3" cy="3" r="1" fill="#cfe"/><circle cx="3" cy="7" r="1" fill="#cfe"/></svg>
<svg class="a" style="left:1089px;top:999px;" width="16" height="19" viewBox="0 0 16 19"><path d="M3 1l10 11M13 1l-10 11" stroke="#f4f4f4" stroke-width="2"/><circle cx="4" cy="15" r="3" fill="none" stroke="#f4f4f4" stroke-width="1.8"/><circle cx="12" cy="15" r="3" fill="none" stroke="#f4f4f4" stroke-width="1.8"/></svg>
<svg class="a" style="left:1113px;top:999px;" width="20" height="19" viewBox="0 0 20 19"><path d="M1 6h4l5-4v15l-5-4h-4z" fill="#f4f4f4"/><path d="M12 6q2 3.5 0 7M14.5 4q3.5 5.5 0 11" fill="none" stroke="#f4f4f4" stroke-width="1.6"/><path d="M17 2q5 7.5 0 15" fill="none" stroke="#666" stroke-width="1"/></svg>
<svg class="a" style="left:1141px;top:999px;" width="22" height="20" viewBox="0 0 22 20"><rect x="5" y="1" width="12" height="9" fill="none" stroke="#f4f4f4" stroke-width="2"/><path d="M11 10v5M1 16h20" stroke="#f4f4f4" stroke-width="2"/><circle cx="11" cy="16" r="2.5" fill="#f4f4f4"/></svg>
<svg class="a" style="left:1173px;top:1005px;" width="9" height="6" viewBox="0 0 9 6"><path d="M0.5 5.5l4-4.5 4 4.5z" fill="#f4f4f4"/></svg>
<div class="t" style="left:1193px;top:995.49px;font-size:26px;line-height:26px;color:#f4f4f4;letter-spacing:-0.612px;">16:29</div>
<svg class="a" style="left:1243px;top:990px;" width="40" height="34" viewBox="0 0 40 34"><circle cx="27" cy="17" r="16" fill="rgba(255,255,255,0.12)" stroke="rgba(255,255,255,0.35)" stroke-width="1"/><path d="M33 11a8 8 0 1 0 0 12 6 6 0 1 1 0-12z" fill="#d8d8d8"/></svg>
</body></html>
